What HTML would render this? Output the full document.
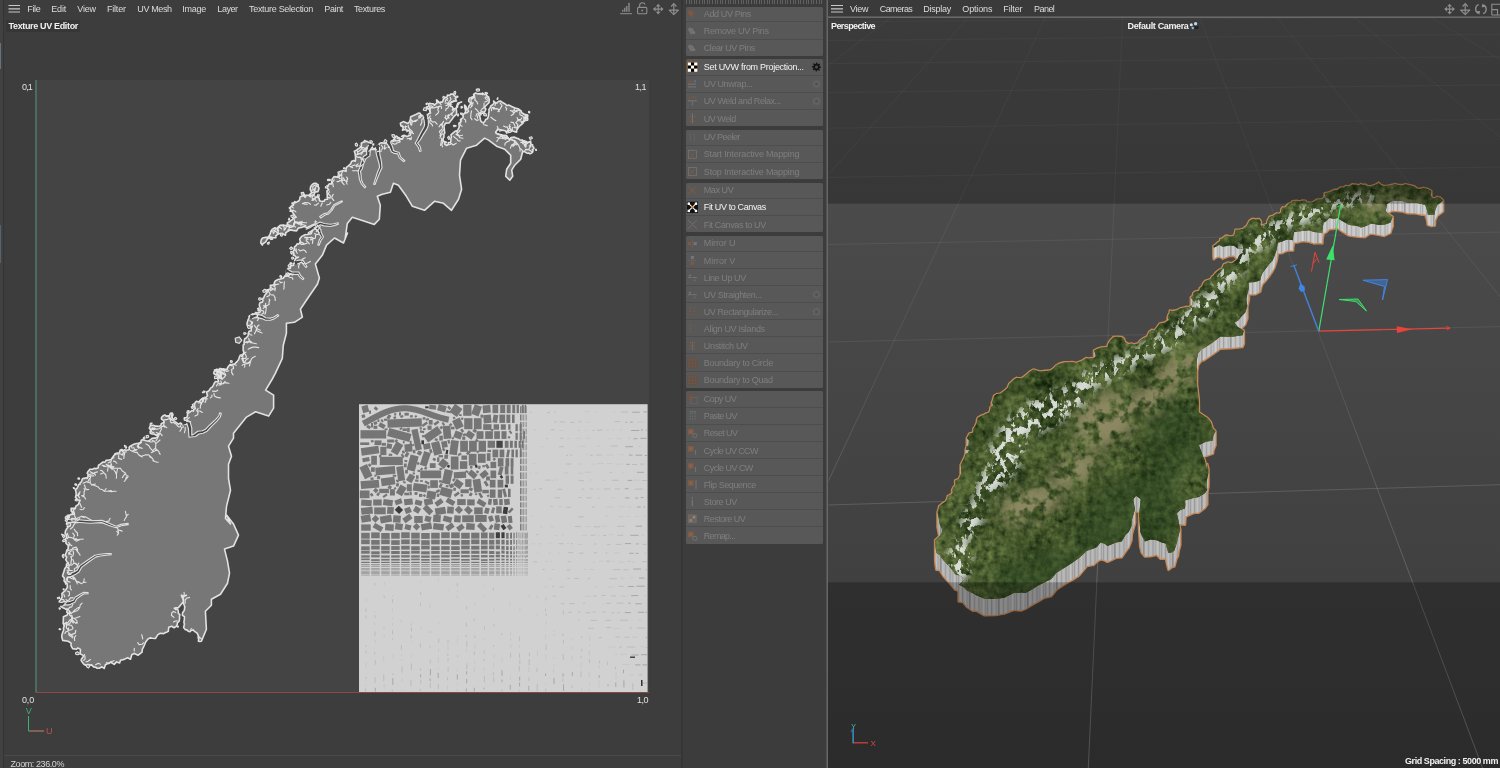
<!DOCTYPE html>
<html><head><meta charset="utf-8"><title>Texture UV Editor</title>
<style>
html,body{margin:0;padding:0;background:#3c3c3c;}
#root{position:relative;width:1500px;height:768px;overflow:hidden;background:#3d3d3d;font-family:"Liberation Sans", sans-serif;}
.t{position:absolute;white-space:nowrap;line-height:14px;height:14px;}
.abs{position:absolute;}
.grp{position:absolute;left:685.8px;width:137px;background:#585858;border-radius:1.5px;}
.sep{position:absolute;left:685.8px;width:137px;height:1px;background:#4d4d4d;}
</style></head><body>
<div id="root">
<!-- left panel -->
<div class="abs" style="left:0;top:0;width:3px;height:768px;background:#414141"></div>
<div class="abs" style="left:3px;top:0;width:1px;height:768px;background:#343434"></div>
<div class="abs" style="left:0;top:43px;width:1.4px;height:26px;background:#69717b"></div>
<div class="abs" style="left:0;top:225px;width:1.4px;height:38px;background:#59616b"></div>
<div class="abs" style="left:37px;top:80px;width:612px;height:612.5px;background:#444444"></div>
<div class="abs" style="left:6px;top:20px;width:73.5px;height:11.5px;background:#363636;border-radius:1px"></div>
<div class="abs" style="left:4px;top:755px;width:677px;height:1px;background:#4a4a4a"></div>
<div class="abs" style="left:681px;top:0;width:2px;height:768px;background:#363636"></div>
<!-- middle panel -->
<div class="abs" style="left:683px;top:0;width:143px;height:768px;background:#3c3c3c"></div>
<div class="abs" style="left:686px;top:0;width:137px;height:1.6px;background:repeating-linear-gradient(90deg,#606060 0 1px,#3c3c3c 1px 2.6px)"></div><div class="abs" style="left:686px;top:2.4px;width:137px;height:2px;background:repeating-linear-gradient(90deg,#606060 0 1px,#3c3c3c 1px 2.6px)"></div>
<div class="grp" style="top:6.90px;height:48.90px"></div><div class="sep" style="top:21.48px"></div><div class="sep" style="top:38.60px"></div><div class="grp" style="top:59.40px;height:66.56px"></div><div class="sep" style="top:74.52px"></div><div class="sep" style="top:91.64px"></div><div class="sep" style="top:108.76px"></div><div class="grp" style="top:129.56px;height:49.44px"></div><div class="sep" style="top:144.68px"></div><div class="sep" style="top:161.80px"></div><div class="grp" style="top:182.60px;height:49.44px"></div><div class="sep" style="top:197.72px"></div><div class="sep" style="top:214.84px"></div><div class="grp" style="top:235.64px;height:152.16px"></div><div class="sep" style="top:250.76px"></div><div class="sep" style="top:267.88px"></div><div class="sep" style="top:285.00px"></div><div class="sep" style="top:302.12px"></div><div class="sep" style="top:319.24px"></div><div class="sep" style="top:336.36px"></div><div class="sep" style="top:353.48px"></div><div class="sep" style="top:370.60px"></div><div class="grp" style="top:391.40px;height:152.16px"></div><div class="sep" style="top:406.52px"></div><div class="sep" style="top:423.64px"></div><div class="sep" style="top:440.76px"></div><div class="sep" style="top:457.88px"></div><div class="sep" style="top:475.00px"></div><div class="sep" style="top:492.12px"></div><div class="sep" style="top:509.24px"></div><div class="sep" style="top:526.36px"></div>
<!-- right viewport -->
<div class="abs" style="left:827.5px;top:0;width:672.5px;height:17px;background:#3a3a3a"></div>
<div class="abs" style="left:827.5px;top:17px;width:672.5px;height:751px;background:linear-gradient(#505050,#3b3b3b)"></div>
<div class="abs" style="left:827.5px;top:16.5px;width:672.5px;height:1.3px;background:#707070"></div>
<div class="abs" style="left:826.5px;top:0px;width:1.4px;height:768px;background:#686868"></div>
<svg class="abs" style="left:0;top:0" width="1500" height="768" viewBox="0 0 1500 768">
<defs>
<pattern id="wallpat" width="29" height="40" patternUnits="userSpaceOnUse"><rect width="29" height="40" fill="#c6c6c6"/><rect x="1" width="1" height="40" fill="#aeaeae"/><rect x="3.4" width="0.8" height="40" fill="#d8d8d8"/><rect x="5.2" width="0.9" height="40" fill="#a2a2a2"/><rect x="7.6" width="1.4" height="40" fill="#d4d4d4"/><rect x="9.8" width="0.7" height="40" fill="#b4b4b4"/><rect x="12" width="1.6" height="40" fill="#9d9d9d"/><rect x="14.5" width="1" height="40" fill="#d9d9d9"/><rect x="17" width="0.8" height="40" fill="#adadad"/><rect x="19.3" width="1.2" height="40" fill="#d2d2d2"/><rect x="21.6" width="0.9" height="40" fill="#a6a6a6"/><rect x="24" width="0.7" height="40" fill="#bababa"/><rect x="26.2" width="1.3" height="40" fill="#dbdbdb"/><rect x="27.9" width="0.7" height="40" fill="#a9a9a9"/></pattern>
<linearGradient id="wallshade" x1="0" y1="0" x2="0" y2="1"><stop offset="0" stop-color="#000" stop-opacity="0"/><stop offset="1" stop-color="#000" stop-opacity="0.12"/></linearGradient>
<clipPath id="topclip"><path d="M937.6 512.1L938.8 508.4L939.2 506.2L943.3 502.9L945.8 501.6L947.4 498.3L947.7 496.1L951.1 494.4L952.8 492.2L952.2 489.9L953.2 487.8L955.2 485.1L955.2 480.5L958.7 479.1L959.8 476.8L960.6 475.3L961.0 473.4L961.3 468.4L960.7 465.0L962.4 461.7L963.4 459.4L964.9 456.6L965.4 454.0L967.8 453.0L969.2 450.0L965.7 450.0L966.6 446.6L968.4 445.4L968.9 440.5L966.9 438.3L969.3 433.7L973.4 432.4L973.5 428.5L975.1 426.6L976.9 422.3L977.1 419.6L978.0 417.7L980.9 416.0L983.4 415.1L985.4 414.0L988.9 412.7L990.3 410.2L990.4 407.5L993.1 405.2L991.9 402.5L992.7 400.8L994.1 396.0L996.9 394.1L1000.1 393.8L1002.0 392.6L1005.7 389.7L1007.8 387.7L1009.3 383.7L1011.4 382.0L1014.0 379.4L1016.6 378.0L1020.7 378.4L1023.1 377.4L1026.6 374.6L1030.1 371.5L1033.5 369.6L1039.5 371.5L1045.5 370.9L1050.9 370.4L1054.2 367.7L1056.0 365.6L1059.0 363.9L1064.1 362.4L1068.9 362.3L1072.4 362.1L1076.3 363.0L1082.7 360.4L1086.0 358.2L1088.8 358.6L1091.2 358.2L1093.5 358.3L1095.8 356.3L1095.4 354.8L1094.9 352.8L1094.1 350.5L1097.3 348.9L1101.4 347.6L1105.2 347.2L1107.5 346.9L1108.0 344.3L1109.9 341.0L1113.7 337.0L1117.8 336.8L1121.8 337.2L1123.9 338.7L1124.5 340.5L1124.9 342.0L1128.7 344.2L1131.4 343.6L1134.1 344.6L1138.0 343.4L1140.0 340.8L1142.7 338.7L1147.3 336.3L1149.2 331.8L1151.8 329.9L1154.4 330.5L1156.9 327.5L1159.8 323.6L1164.6 322.7L1168.8 320.0L1167.7 317.5L1168.5 314.8L1169.7 313.2L1169.9 310.6L1172.2 311.2L1175.0 310.7L1178.7 309.5L1180.5 308.3L1183.5 307.8L1185.8 307.0L1189.0 307.2L1192.2 304.8L1192.9 300.9L1190.9 297.3L1192.7 295.8L1193.4 293.1L1195.3 291.5L1197.6 291.2L1199.2 290.7L1200.0 288.0L1202.3 286.2L1203.0 284.0L1203.9 282.5L1205.1 281.0L1206.6 280.5L1210.9 279.0L1212.0 276.6L1213.6 275.6L1216.1 272.4L1218.0 270.8L1220.0 269.4L1222.1 268.6L1223.9 264.4L1227.4 262.6L1231.8 263.3L1236.0 260.6L1237.6 258.8L1239.1 255.6L1240.6 254.0L1243.1 252.8L1242.5 251.3L1243.8 249.0L1240.4 248.3L1238.5 249.1L1233.8 245.8L1229.7 245.5L1222.9 246.8L1219.2 245.0L1216.4 246.5L1213.8 247.8L1213.5 246.1L1215.2 245.0L1217.3 243.0L1219.8 241.4L1220.3 239.2L1222.7 238.2L1226.0 235.7L1230.7 236.6L1234.4 235.6L1234.7 234.0L1235.3 231.6L1235.6 229.8L1239.1 229.8L1243.0 229.1L1247.0 225.6L1248.5 222.7L1249.8 220.5L1252.5 218.9L1255.4 219.4L1259.0 219.2L1260.9 221.4L1260.3 224.7L1261.3 226.3L1263.1 225.3L1265.3 224.5L1267.1 223.8L1267.6 220.6L1268.4 219.1L1269.5 216.9L1273.8 215.4L1276.9 213.5L1279.2 213.8L1281.3 212.2L1281.3 209.5L1282.6 207.5L1285.4 207.4L1288.3 204.0L1291.3 203.0L1292.2 201.4L1296.4 200.9L1300.0 201.6L1302.0 200.7L1305.4 200.8L1306.7 202.4L1309.4 202.8L1312.5 202.6L1314.1 201.5L1317.1 199.7L1322.3 199.3L1324.6 197.3L1325.1 195.7L1324.6 193.4L1327.4 192.8L1329.6 192.2L1334.4 189.9L1337.5 189.9L1340.5 187.6L1344.2 187.4L1345.9 186.0L1349.2 186.4L1352.3 184.4L1356.8 184.8L1358.5 185.5L1361.0 184.1L1362.6 185.0L1365.0 184.7L1367.8 186.2L1370.3 186.4L1372.2 186.1L1376.7 184.2L1378.6 182.9L1380.9 185.0L1383.6 186.1L1388.0 185.8L1391.4 185.2L1395.0 184.1L1398.5 185.2L1401.3 185.2L1403.2 185.2L1405.2 184.3L1408.6 185.0L1414.3 186.4L1417.2 188.8L1420.2 188.9L1423.5 188.0L1428.5 189.3L1431.3 191.1L1431.1 192.6L1430.7 194.2L1430.7 195.9L1432.5 198.1L1434.4 198.6L1437.1 197.0L1440.0 197.5L1443.0 200.5L1437.2 205.2L1435.1 210.5L1434.8 214.5L1431.3 214.9L1427.8 214.5L1427.3 211.1L1425.4 205.2L1421.9 204.0L1415.1 202.5L1407.9 202.8L1402.6 201.0L1396.1 200.5L1391.8 201.3L1386.8 204.0L1386.3 208.0L1385.6 211.0L1388.9 214.3L1392.6 216.9L1391.6 219.2L1390.3 222.7L1384.2 224.7L1379.7 225.1L1374.2 224.0L1370.3 223.9L1364.8 226.4L1361.0 227.4L1356.7 225.7L1349.2 225.1L1342.2 221.1L1337.5 218.1L1334.4 218.7L1329.3 218.1L1326.4 220.9L1323.5 222.7L1322.5 229.4L1322.3 233.3L1319.0 232.5L1314.1 232.1L1308.9 230.3L1302.4 230.9L1297.3 231.6L1294.2 232.1L1293.2 236.5L1293.0 240.3L1288.1 239.4L1284.8 240.3L1282.4 241.4L1277.8 242.7L1276.5 250.3L1274.2 256.7L1272.4 260.9L1269.5 263.8L1265.1 269.5L1262.5 273.1L1261.3 275.7L1260.2 280.2L1255.2 282.1L1248.5 282.5L1248.9 288.4L1247.3 294.2L1246.3 299.1L1247.3 306.0L1245.2 312.6L1241.4 316.5L1238.0 320.8L1234.4 322.4L1237.8 327.0L1243.8 330.6L1242.6 335.3L1230.7 336.9L1220.3 336.4L1213.0 342.3L1203.9 348.2L1201.3 349.2L1198.1 353.2L1196.6 360.9L1197.0 368.6L1196.6 382.0L1198.7 399.4L1198.9 412.5L1207.1 417.8L1210.7 421.9L1212.8 428.4L1215.4 431.3L1213.2 436.2L1213.0 440.6L1205.8 441.8L1198.9 445.3L1202.3 454.3L1204.8 460.6L1206.0 465.9L1208.3 471.1L1207.1 467.9L1207.2 464.1L1208.4 469.4L1208.3 473.4L1206.6 481.5L1207.2 489.8L1204.7 493.6L1198.9 496.9L1193.4 498.0L1184.9 500.4L1185.4 504.2L1184.9 508.6L1180.4 510.0L1176.7 513.3L1178.5 520.2L1180.2 529.7L1178.5 535.4L1177.9 539.1L1176.4 544.2L1174.3 550.8L1171.6 552.4L1168.5 553.1L1167.0 548.9L1166.1 543.8L1160.4 542.1L1156.8 540.2L1150.2 539.5L1145.0 541.4L1141.8 535.6L1140.3 532.0L1139.1 514.6L1140.8 499.2L1138.6 497.6L1136.1 495.7L1134.0 498.2L1133.3 500.4L1135.0 509.3L1131.7 520.3L1131.4 526.3L1128.6 532.0L1125.5 534.9L1121.6 541.4L1115.9 542.5L1107.5 546.1L1104.7 543.8L1100.5 542.6L1096.9 546.9L1093.5 548.5L1086.8 550.8L1079.4 557.8L1072.0 563.1L1065.3 567.2L1056.2 573.0L1051.3 578.9L1044.3 582.5L1037.2 586.0L1033.0 589.0L1025.5 593.0L1020.9 592.6L1013.8 593.0L1004.3 597.7L995.0 598.9L984.6 598.8L976.3 595.3L972.9 593.2L966.9 590.6L963.4 587.0L958.7 584.8L962.1 581.9L964.5 578.9L961.3 576.3L955.2 574.2L951.2 568.6L943.4 560.2L939.7 555.1L936.4 553.1L935.6 547.4L935.2 543.8L935.2 540.2L939.7 536.1L942.3 532.0L942.1 529.0L939.9 525.0Z"/></clipPath>
<linearGradient id="gridgrad" gradientUnits="userSpaceOnUse" x1="0" y1="17" x2="0" y2="768"><stop offset="0" stop-color="#fff" stop-opacity="0.05"/><stop offset="0.45" stop-color="#fff" stop-opacity="0.08"/><stop offset="1" stop-color="#fff" stop-opacity="0.30"/></linearGradient>
<clipPath id="vpclip"><rect x="828.5" y="17.8" width="672" height="751"/></clipPath>
<filter id="terrain" x="0" y="0" width="100%" height="100%" color-interpolation-filters="sRGB">
<feTurbulence type="fractalNoise" baseFrequency="0.03" numOctaves="3" seed="8" result="n1"/>
<feTurbulence type="fractalNoise" baseFrequency="0.17" numOctaves="3" seed="3" result="n2"/>
<feComposite in="n1" in2="n2" operator="arithmetic" k1="0" k2="0.45" k3="0.55" k4="0" result="n"/>
<feColorMatrix in="n" type="matrix" values="0.66 0 0 0 -0.065  0.66 0 0 0 0.005  0.42 0 0 0 -0.045  0 0 0 0 1"/>
</filter>
<filter id="fsnow" x="-20%" y="-20%" width="140%" height="140%" color-interpolation-filters="sRGB">
<feGaussianBlur in="SourceGraphic" stdDeviation="4" result="b"/>
<feTurbulence type="fractalNoise" baseFrequency="0.16 0.11" numOctaves="4" seed="11" result="t"/>
<feColorMatrix in="t" type="matrix" values="0 0 0 0 1  0 0 0 0 1  0 0 0 0 1  11 0 0 0 -5.7" result="m"/>
<feComposite in="b" in2="m" operator="in"/>
</filter>
<filter id="ftan" x="-20%" y="-20%" width="140%" height="140%" color-interpolation-filters="sRGB">
<feGaussianBlur in="SourceGraphic" stdDeviation="7" result="b"/>
<feTurbulence type="fractalNoise" baseFrequency="0.09" numOctaves="3" seed="23" result="t"/>
<feColorMatrix in="t" type="matrix" values="0 0 0 0 1  0 0 0 0 1  0 0 0 0 1  5 0 0 0 -1.9" result="m"/>
<feComposite in="b" in2="m" operator="in"/>
</filter>
<filter id="fdark" x="-20%" y="-20%" width="140%" height="140%" color-interpolation-filters="sRGB">
<feGaussianBlur in="SourceGraphic" stdDeviation="10" result="b"/>
<feColorMatrix in="b" type="matrix" values="1 0 0 0 0  0 1 0 0 0  0 0 1 0 0  0 0 0 0.45 0"/>
</filter>
</defs>
<!-- UV axes -->
<path d="M36 80V692.5" stroke="#4b6d5d" stroke-width="2"/><path d="M36 692.5H649" stroke="#8a4a48" stroke-width="1"/>
<path d="M28.5 716V731H44" stroke="#3fae7a" stroke-width="1" fill="none"/><path d="M29 731H44" stroke="#c0504d" stroke-width="1"/>
<rect x="359.0" y="404.2" width="288.6" height="287.8" fill="#d1d1d1"/>
<rect x="362.2" y="405.5" width="6.3" height="7.0" fill="#757575" transform="rotate(-15 365.3 409.0)"/>
<rect x="429.2" y="405.1" width="7.0" height="4.3" fill="#757575" transform="rotate(5 432.7 407.3)"/>
<rect x="437.8" y="405.2" width="8.3" height="6.3" fill="#757575" transform="rotate(15 442.0 408.3)"/>
<rect x="451.5" y="405.5" width="9.0" height="9.7" fill="#757575" transform="rotate(35 456.0 410.3)"/>
<rect x="463.2" y="404.8" width="8.3" height="11.0" fill="#757575"/>
<rect x="472.8" y="405.2" width="7.7" height="10.3" fill="#757575" transform="rotate(20 476.7 410.3)"/>
<rect x="482.8" y="405.2" width="7.7" height="7.7" fill="#757575" transform="rotate(-5 486.7 409.0)"/>
<rect x="492.5" y="404.8" width="5.7" height="8.3" fill="#757575"/>
<rect x="500.2" y="404.8" width="5.0" height="8.3" fill="#757575"/>
<rect x="506.7" y="404.8" width="3.9" height="8.3" fill="#757575"/>
<rect x="512.3" y="404.8" width="2.9" height="8.3" fill="#757575"/>
<rect x="516.6" y="404.8" width="2.3" height="8.3" fill="#757575"/>
<rect x="521.8" y="404.8" width="1.8" height="8.3" fill="#757575"/>
<rect x="524.6" y="404.8" width="1.5" height="8.3" fill="#757575"/>
<rect x="387.5" y="418.8" width="34.3" height="8.3" fill="#757575" transform="rotate(-2 404.7 423.0)"/>
<rect x="378.8" y="423.5" width="6.3" height="4.3" fill="#757575" transform="rotate(30 382.0 425.7)"/>
<rect x="453.8" y="418.8" width="8.3" height="9.7" fill="#757575" transform="rotate(-25 458.0 423.7)"/>
<rect x="464.2" y="418.2" width="8.3" height="11.0" fill="#757575"/>
<rect x="473.9" y="418.2" width="7.7" height="11.0" fill="#757575"/>
<rect x="483.5" y="414.8" width="7.7" height="8.3" fill="#757575" transform="rotate(-5 487.3 419.0)"/>
<rect x="493.0" y="414.9" width="4.7" height="7.7" fill="#757575" transform="rotate(10 495.3 418.7)"/>
<rect x="499.4" y="414.6" width="5.7" height="8.3" fill="#757575"/>
<rect x="506.4" y="414.6" width="3.9" height="8.3" fill="#757575"/>
<rect x="512.0" y="414.6" width="2.6" height="8.3" fill="#757575"/>
<rect x="483.2" y="424.2" width="8.3" height="5.7" fill="#757575"/>
<rect x="493.6" y="424.3" width="5.4" height="5.4" fill="#757575"/>
<rect x="500.8" y="424.3" width="5.0" height="5.4" fill="#757575"/>
<rect x="508.2" y="424.3" width="2.3" height="5.4" fill="#757575"/>
<rect x="360.5" y="430.2" width="25.7" height="8.3" fill="#757575"/>
<rect x="387.8" y="430.8" width="23.0" height="8.3" fill="#757575" transform="rotate(15 399.3 435.0)"/>
<rect x="413.5" y="429.2" width="6.3" height="21.0" fill="#757575" transform="rotate(-12 416.7 439.7)"/>
<rect x="424.2" y="430.2" width="17.0" height="8.3" fill="#757575" transform="rotate(-35 432.7 434.3)"/>
<rect x="443.2" y="425.8" width="7.7" height="13.0" fill="#757575" transform="rotate(-5 447.1 432.3)"/>
<rect x="454.2" y="431.5" width="7.7" height="7.0" fill="#757575" transform="rotate(20 458.0 435.0)"/>
<rect x="466.2" y="431.8" width="7.7" height="6.3" fill="#757575" transform="rotate(35 470.0 435.0)"/>
<rect x="476.5" y="431.2" width="7.0" height="7.7" fill="#757575"/>
<rect x="485.2" y="431.2" width="7.7" height="7.7" fill="#757575"/>
<rect x="494.2" y="431.2" width="5.7" height="7.7" fill="#757575"/>
<rect x="501.5" y="431.2" width="5.0" height="7.7" fill="#757575"/>
<rect x="515.5" y="424.2" width="2.3" height="7.0" fill="#757575"/>
<rect x="519.6" y="424.2" width="2.1" height="7.0" fill="#757575"/>
<rect x="515.5" y="432.8" width="2.3" height="7.0" fill="#757575"/>
<rect x="519.6" y="432.8" width="2.1" height="7.0" fill="#757575"/>
<rect x="523.2" y="431.2" width="1.7" height="7.7" fill="#757575"/>
<rect x="374.5" y="440.4" width="7.0" height="4.7" fill="#757575"/>
<rect x="387.2" y="439.5" width="7.0" height="3.0" fill="#757575"/>
<rect x="360.2" y="442.4" width="9.0" height="2.6" fill="#757575"/>
<rect x="393.2" y="442.5" width="7.7" height="11.7" fill="#757575" transform="rotate(30 397.1 448.3)"/>
<rect x="404.6" y="444.1" width="7.7" height="7.7" fill="#757575" transform="rotate(-5 408.4 447.9)"/>
<rect x="423.4" y="443.5" width="7.0" height="5.7" fill="#757575" transform="rotate(-10 426.9 446.3)"/>
<rect x="432.5" y="441.8" width="8.3" height="13.0" fill="#757575" transform="rotate(-15 436.7 448.3)"/>
<rect x="441.6" y="441.2" width="5.7" height="6.3" fill="#757575" transform="rotate(-10 444.4 444.3)"/>
<rect x="450.2" y="440.5" width="7.7" height="14.3" fill="#757575" transform="rotate(8 454.0 447.7)"/>
<rect x="460.2" y="440.8" width="7.7" height="11.0" fill="#757575"/>
<rect x="469.1" y="440.8" width="7.7" height="11.0" fill="#757575"/>
<rect x="478.6" y="440.8" width="7.4" height="11.0" fill="#757575"/>
<rect x="487.6" y="440.8" width="7.4" height="7.0" fill="#757575"/>
<rect x="504.8" y="440.8" width="3.7" height="7.0" fill="#757575"/>
<rect x="509.9" y="440.8" width="2.9" height="7.0" fill="#757575"/>
<rect x="514.4" y="440.8" width="2.6" height="7.0" fill="#757575"/>
<rect x="518.6" y="440.8" width="2.1" height="7.0" fill="#757575"/>
<rect x="521.8" y="440.8" width="1.8" height="7.0" fill="#757575"/>
<rect x="361.2" y="446.9" width="17.7" height="7.7" fill="#757575" transform="rotate(-8 370.0 450.7)"/>
<rect x="380.3" y="446.8" width="6.1" height="8.3" fill="#757575"/>
<rect x="362.5" y="457.7" width="7.0" height="3.9" fill="#757575" transform="rotate(-10 366.0 459.7)"/>
<rect x="371.2" y="455.8" width="5.7" height="9.0" fill="#757575"/>
<rect x="379.8" y="456.8" width="23.0" height="8.3" fill="#757575"/>
<rect x="408.5" y="455.2" width="8.3" height="15.7" fill="#757575" transform="rotate(15 412.7 463.0)"/>
<rect x="421.8" y="451.8" width="7.0" height="14.3" fill="#757575" transform="rotate(18 425.3 459.0)"/>
<rect x="439.5" y="459.8" width="7.7" height="7.7" fill="#757575" transform="rotate(40 443.3 463.7)"/>
<rect x="450.8" y="456.5" width="7.7" height="13.0" fill="#757575"/>
<rect x="461.4" y="455.5" width="5.7" height="4.3" fill="#757575"/>
<rect x="459.9" y="461.2" width="7.4" height="7.7" fill="#757575"/>
<rect x="468.8" y="453.8" width="7.7" height="11.7" fill="#757575"/>
<rect x="477.9" y="453.8" width="7.7" height="9.0" fill="#757575"/>
<rect x="486.8" y="453.2" width="3.7" height="7.7" fill="#757575"/>
<rect x="492.5" y="449.6" width="5.7" height="7.7" fill="#757575"/>
<rect x="499.6" y="449.6" width="4.7" height="7.7" fill="#757575"/>
<rect x="506.7" y="449.6" width="2.6" height="7.7" fill="#757575" transform="rotate(10 508.0 453.4)"/>
<rect x="511.4" y="449.6" width="2.6" height="7.7" fill="#757575"/>
<rect x="515.5" y="449.6" width="2.3" height="7.7" fill="#757575"/>
<rect x="519.8" y="449.6" width="1.8" height="7.7" fill="#757575"/>
<rect x="361.8" y="465.2" width="8.3" height="13.0" fill="#757575" transform="rotate(-25 366.0 471.7)"/>
<rect x="375.5" y="466.9" width="19.7" height="7.7" fill="#757575" transform="rotate(-5 385.3 470.7)"/>
<rect x="397.2" y="466.5" width="7.0" height="14.3" fill="#757575" transform="rotate(-8 400.7 473.7)"/>
<rect x="420.2" y="470.5" width="21.0" height="7.7" fill="#757575"/>
<rect x="443.2" y="469.8" width="8.3" height="14.3" fill="#757575" transform="rotate(12 447.3 477.0)"/>
<rect x="453.8" y="471.8" width="12.3" height="6.3" fill="#757575" transform="rotate(-3 460.0 475.0)"/>
<rect x="468.5" y="471.5" width="8.3" height="5.7" fill="#757575" transform="rotate(40 472.7 474.3)"/>
<rect x="480.2" y="471.5" width="7.7" height="5.7" fill="#757575" transform="rotate(-40 484.0 474.3)"/>
<rect x="490.5" y="461.8" width="5.7" height="6.3" fill="#757575"/>
<rect x="497.8" y="458.2" width="5.7" height="8.3" fill="#757575"/>
<rect x="505.5" y="458.2" width="3.7" height="8.3" fill="#757575"/>
<rect x="510.6" y="458.2" width="2.9" height="8.3" fill="#757575"/>
<rect x="490.5" y="470.5" width="5.7" height="7.7" fill="#757575"/>
<rect x="498.7" y="466.8" width="3.9" height="8.3" fill="#757575" transform="rotate(15 500.7 471.0)"/>
<rect x="504.8" y="466.2" width="3.7" height="8.3" fill="#757575"/>
<rect x="510.7" y="466.2" width="2.6" height="8.3" fill="#757575"/>
<rect x="360.8" y="480.5" width="18.3" height="7.7" fill="#757575" transform="rotate(-5 370.0 484.3)"/>
<rect x="381.2" y="477.6" width="13.7" height="7.7" fill="#757575" transform="rotate(-8 388.0 481.4)"/>
<rect x="407.5" y="474.5" width="6.3" height="7.7" fill="#757575" transform="rotate(30 410.7 478.3)"/>
<rect x="430.2" y="480.2" width="7.7" height="7.7" fill="#757575"/>
<rect x="413.2" y="483.8" width="13.7" height="7.7" fill="#757575" transform="rotate(8 420.0 487.7)"/>
<rect x="397.8" y="485.5" width="7.0" height="9.7" fill="#757575" transform="rotate(30 401.3 490.3)"/>
<rect x="406.8" y="484.2" width="5.0" height="7.0" fill="#757575"/>
<rect x="454.1" y="480.6" width="8.3" height="7.0" fill="#757575" transform="rotate(35 458.3 484.1)"/>
<rect x="465.2" y="479.2" width="6.3" height="7.7" fill="#757575"/>
<rect x="473.5" y="479.2" width="7.7" height="13.0" fill="#757575" transform="rotate(-8 477.3 485.7)"/>
<rect x="489.8" y="479.8" width="5.7" height="7.7" fill="#757575"/>
<rect x="497.6" y="479.8" width="5.7" height="7.7" fill="#757575"/>
<rect x="505.6" y="475.5" width="3.4" height="8.3" fill="#757575"/>
<rect x="510.6" y="475.5" width="2.9" height="8.3" fill="#757575"/>
<rect x="359.8" y="490.5" width="9.7" height="7.7" fill="#757575"/>
<rect x="379.2" y="488.8" width="9.7" height="4.3" fill="#757575"/>
<rect x="389.9" y="489.2" width="5.0" height="6.3" fill="#757575"/>
<rect x="426.8" y="491.2" width="9.0" height="7.7" fill="#757575" transform="rotate(10 431.3 495.0)"/>
<rect x="440.2" y="488.2" width="11.7" height="8.3" fill="#757575" transform="rotate(15 446.0 492.3)"/>
<rect x="460.5" y="489.3" width="8.3" height="3.9" fill="#757575"/>
<rect x="489.8" y="489.5" width="5.7" height="8.3" fill="#757575"/>
<rect x="497.8" y="489.5" width="4.3" height="8.3" fill="#757575"/>
<rect x="503.2" y="488.8" width="2.9" height="8.3" fill="#757575" transform="rotate(-15 504.7 493.0)"/>
<rect x="508.0" y="488.8" width="2.6" height="8.3" fill="#757575"/>
<rect x="496.4" y="440.8" width="6.3" height="7.0" fill="#444444"/>
<rect x="369.7" y="424.3" width="4.5" height="2.0" fill="#757575" transform="rotate(90 372.0 425.3)"/>
<rect x="429.8" y="463.2" width="5.8" height="4.8" fill="#757575"/>
<rect x="419.9" y="430.6" width="4.2" height="2.3" fill="#757575" transform="rotate(10 422.1 431.8)"/>
<rect x="432.8" y="458.1" width="3.0" height="2.5" fill="#757575" transform="rotate(30 434.3 459.4)"/>
<rect x="416.9" y="462.2" width="2.3" height="2.5" fill="#757575" transform="rotate(-35 418.1 463.4)"/>
<rect x="469.3" y="492.7" width="2.9" height="3.4" fill="#757575" transform="rotate(30 470.7 494.4)"/>
<rect x="373.8" y="488.5" width="4.0" height="3.8" fill="#757575" transform="rotate(45 375.7 490.4)"/>
<rect x="417.5" y="451.0" width="4.1" height="4.1" fill="#757575" transform="rotate(30 419.5 453.0)"/>
<rect x="433.8" y="421.7" width="5.4" height="2.7" fill="#757575" transform="rotate(-35 436.5 423.1)"/>
<rect x="467.1" y="450.4" width="2.7" height="4.4" fill="#757575" transform="rotate(45 468.4 452.6)"/>
<rect x="414.7" y="415.3" width="2.1" height="2.2" fill="#757575" transform="rotate(60 415.8 416.4)"/>
<rect x="419.0" y="493.9" width="3.3" height="3.0" fill="#757575"/>
<rect x="447.7" y="440.0" width="2.3" height="3.5" fill="#757575" transform="rotate(-15 448.8 441.7)"/>
<rect x="509.5" y="430.4" width="2.0" height="3.5" fill="#757575" transform="rotate(-35 510.5 432.1)"/>
<rect x="409.5" y="491.7" width="2.2" height="3.6" fill="#757575"/>
<rect x="428.8" y="420.0" width="3.8" height="4.6" fill="#757575"/>
<rect x="370.9" y="440.0" width="2.7" height="2.3" fill="#757575" transform="rotate(-15 372.3 441.2)"/>
<rect x="485.8" y="464.1" width="2.9" height="4.6" fill="#757575" transform="rotate(-35 487.2 466.4)"/>
<rect x="453.9" y="493.0" width="5.7" height="2.6" fill="#757575" transform="rotate(-35 456.7 494.3)"/>
<rect x="415.1" y="479.5" width="3.4" height="2.2" fill="#757575" transform="rotate(10 416.8 480.7)"/>
<rect x="427.5" y="425.6" width="4.1" height="4.2" fill="#757575"/>
<rect x="439.3" y="435.7" width="3.5" height="4.8" fill="#757575"/>
<rect x="404.4" y="460.1" width="2.9" height="2.0" fill="#757575" transform="rotate(10 405.9 461.1)"/>
<rect x="422.7" y="417.2" width="2.7" height="2.5" fill="#757575"/>
<rect x="449.6" y="484.0" width="3.7" height="4.0" fill="#757575" transform="rotate(60 451.5 486.0)"/>
<rect x="483.4" y="482.2" width="5.6" height="2.9" fill="#757575" transform="rotate(60 486.2 483.6)"/>
<rect x="504.8" y="484.6" width="3.1" height="2.8" fill="#3a3a3a"/>
<rect x="405.3" y="452.3" width="3.2" height="4.7" fill="#757575" transform="rotate(30 406.9 454.6)"/>
<rect x="373.7" y="421.6" width="3.4" height="3.0" fill="#757575" transform="rotate(-15 375.4 423.1)"/>
<rect x="462.2" y="436.6" width="3.1" height="3.2" fill="#757575"/>
<rect x="370.4" y="493.2" width="2.6" height="3.0" fill="#757575" transform="rotate(-35 371.7 494.7)"/>
<rect x="388.7" y="453.7" width="3.5" height="2.2" fill="#757575"/>
<rect x="384.0" y="418.7" width="3.5" height="2.1" fill="#757575"/>
<rect x="482.3" y="489.8" width="6.5" height="3.5" fill="#757575"/>
<rect x="405.2" y="412.0" width="2.8" height="4.3" fill="#757575" transform="rotate(90 406.6 414.2)"/>
<rect x="392.7" y="474.7" width="3.5" height="2.1" fill="#757575" transform="rotate(10 394.5 475.8)"/>
<rect x="470.0" y="466.0" width="2.4" height="2.6" fill="#757575" transform="rotate(10 471.2 467.3)"/>
<rect x="478.3" y="465.7" width="2.2" height="3.3" fill="#757575" transform="rotate(10 479.4 467.3)"/>
<rect x="386.7" y="443.7" width="5.2" height="5.0" fill="#757575" transform="rotate(10 389.3 446.2)"/>
<rect x="387.3" y="414.7" width="3.2" height="4.3" fill="#757575" transform="rotate(30 388.9 416.8)"/>
<rect x="447.2" y="465.1" width="2.5" height="2.4" fill="#3a3a3a" transform="rotate(30 448.5 466.3)"/>
<rect x="377.1" y="476.1" width="3.0" height="2.9" fill="#757575" transform="rotate(10 378.6 477.6)"/>
<rect x="457.7" y="453.3" width="3.7" height="2.2" fill="#757575" transform="rotate(-35 459.6 454.3)"/>
<rect x="424.6" y="481.5" width="4.9" height="2.1" fill="#757575" transform="rotate(30 427.1 482.6)"/>
<rect x="417.9" y="469.6" width="2.0" height="2.7" fill="#757575" transform="rotate(90 418.9 470.9)"/>
<rect x="394.1" y="413.2" width="2.1" height="2.3" fill="#757575"/>
<rect x="388.2" y="485.6" width="3.3" height="3.4" fill="#757575" transform="rotate(30 389.8 487.2)"/>
<rect x="451.0" y="426.7" width="3.5" height="2.7" fill="#757575"/>
<rect x="415.6" y="475.7" width="3.5" height="2.6" fill="#757575" transform="rotate(90 417.3 477.0)"/>
<rect x="439.7" y="454.0" width="2.2" height="4.4" fill="#757575" transform="rotate(90 440.8 456.2)"/>
<rect x="368.3" y="411.2" width="3.3" height="1.9" fill="#757575" transform="rotate(90 370.0 412.2)"/>
<rect x="399.5" y="427.7" width="2.9" height="1.8" fill="#757575" transform="rotate(-35 401.0 428.6)"/>
<rect x="444.3" y="454.7" width="3.7" height="4.1" fill="#757575" transform="rotate(10 446.1 456.7)"/>
<rect x="436.6" y="489.2" width="2.6" height="4.0" fill="#757575" transform="rotate(60 437.9 491.2)"/>
<rect x="480.5" y="414.7" width="2.6" height="3.0" fill="#757575"/>
<rect x="465.5" y="470.6" width="2.9" height="2.1" fill="#757575" transform="rotate(30 466.9 471.6)"/>
<rect x="414.5" y="492.1" width="3.0" height="2.8" fill="#757575"/>
<rect x="475.2" y="464.8" width="2.3" height="3.0" fill="#3a3a3a" transform="rotate(-15 476.3 466.4)"/>
<rect x="407.1" y="427.7" width="2.6" height="4.5" fill="#757575"/>
<rect x="420.1" y="480.1" width="2.7" height="1.8" fill="#757575"/>
<rect x="461.1" y="417.6" width="2.2" height="2.2" fill="#757575"/>
<rect x="402.1" y="450.5" width="2.5" height="2.9" fill="#757575" transform="rotate(-15 403.4 451.9)"/>
<rect x="421.8" y="423.0" width="6.0" height="2.4" fill="#757575" transform="rotate(-35 424.8 424.2)"/>
<rect x="493.1" y="457.9" width="2.4" height="2.7" fill="#757575" transform="rotate(45 494.3 459.2)"/>
<rect x="440.0" y="426.1" width="2.4" height="3.0" fill="#757575" transform="rotate(45 441.2 427.7)"/>
<rect x="361.7" y="414.6" width="3.4" height="3.2" fill="#757575" transform="rotate(-15 363.4 416.2)"/>
<rect x="412.9" y="449.8" width="2.5" height="3.5" fill="#757575"/>
<rect x="412.6" y="472.4" width="2.3" height="2.1" fill="#757575"/>
<rect x="366.7" y="425.5" width="3.9" height="3.0" fill="#757575" transform="rotate(30 368.6 427.0)"/>
<rect x="420.5" y="467.9" width="2.1" height="2.6" fill="#757575" transform="rotate(30 421.6 469.2)"/>
<rect x="410.1" y="415.1" width="2.6" height="2.5" fill="#757575" transform="rotate(10 411.4 416.3)"/>
<rect x="500.2" y="475.5" width="2.5" height="2.9" fill="#3a3a3a" transform="rotate(-35 501.4 477.0)"/>
<rect x="487.0" y="494.8" width="2.1" height="2.0" fill="#757575" transform="rotate(-35 488.1 495.7)"/>
<rect x="376.8" y="492.7" width="2.5" height="3.2" fill="#757575" transform="rotate(30 378.0 494.4)"/>
<rect x="402.9" y="481.2" width="2.8" height="2.0" fill="#757575" transform="rotate(30 404.3 482.2)"/>
<rect x="446.4" y="410.9" width="4.4" height="2.1" fill="#757575" transform="rotate(10 448.6 412.0)"/>
<rect x="423.1" y="494.4" width="2.5" height="2.3" fill="#757575" transform="rotate(45 424.3 495.6)"/>
<rect x="460.9" y="428.9" width="2.5" height="3.5" fill="#757575" transform="rotate(-35 462.1 430.6)"/>
<rect x="371.0" y="467.3" width="3.8" height="4.5" fill="#757575"/>
<rect x="475.4" y="439.4" width="3.1" height="2.1" fill="#757575" transform="rotate(30 476.9 440.4)"/>
<rect x="476.6" y="450.8" width="2.4" height="2.0" fill="#757575" transform="rotate(-35 477.8 451.9)"/>
<rect x="396.1" y="483.2" width="2.8" height="3.3" fill="#757575" transform="rotate(10 397.5 484.8)"/>
<rect x="439.4" y="467.9" width="3.1" height="2.0" fill="#757575" transform="rotate(-15 440.9 468.8)"/>
<rect x="442.2" y="448.3" width="3.1" height="2.3" fill="#757575" transform="rotate(45 443.7 449.4)"/>
<rect x="373.5" y="425.7" width="3.8" height="3.2" fill="#757575"/>
<rect x="423.1" y="428.2" width="2.5" height="1.9" fill="#757575"/>
<rect x="404.6" y="470.2" width="3.6" height="2.8" fill="#757575" transform="rotate(90 406.4 471.7)"/>
<rect x="379.0" y="455.1" width="2.5" height="2.3" fill="#757575" transform="rotate(90 380.3 456.2)"/>
<rect x="380.7" y="419.7" width="3.0" height="2.1" fill="#757575" transform="rotate(60 382.2 420.7)"/>
<rect x="384.5" y="428.4" width="3.1" height="1.8" fill="#757575"/>
<rect x="451.8" y="437.1" width="2.1" height="2.2" fill="#757575" transform="rotate(-15 452.9 438.2)"/>
<rect x="439.1" y="480.3" width="3.2" height="2.2" fill="#757575" transform="rotate(10 440.7 481.4)"/>
<rect x="445.7" y="485.1" width="2.8" height="2.2" fill="#757575"/>
<rect x="370.5" y="477.5" width="3.1" height="2.4" fill="#757575"/>
<rect x="487.4" y="449.8" width="3.6" height="2.3" fill="#757575"/>
<rect x="424.5" y="467.0" width="2.4" height="2.6" fill="#757575" transform="rotate(30 425.7 468.3)"/>
<rect x="473.0" y="429.1" width="3.4" height="3.3" fill="#757575" transform="rotate(30 474.7 430.8)"/>
<rect x="394.0" y="487.5" width="2.1" height="2.0" fill="#757575" transform="rotate(60 395.1 488.5)"/>
<rect x="409.0" y="441.6" width="3.5" height="1.9" fill="#757575" transform="rotate(90 410.7 442.5)"/>
<rect x="490.8" y="429.0" width="2.6" height="1.9" fill="#757575"/>
<rect x="400.6" y="454.8" width="4.1" height="2.2" fill="#757575" transform="rotate(60 402.7 455.9)"/>
<rect x="460.6" y="494.3" width="2.4" height="2.2" fill="#757575" transform="rotate(-15 461.7 495.4)"/>
<rect x="374.1" y="407.0" width="3.6" height="2.9" fill="#757575" transform="rotate(45 375.9 408.5)"/>
<rect x="400.3" y="415.4" width="3.1" height="2.3" fill="#757575" transform="rotate(-35 401.8 416.6)"/>
<rect x="402.5" y="441.3" width="2.4" height="1.8" fill="#757575" transform="rotate(90 403.7 442.2)"/>
<rect x="425.8" y="418.3" width="3.1" height="2.2" fill="#757575" transform="rotate(-15 427.3 419.4)"/>
<rect x="374.4" y="474.7" width="2.0" height="2.0" fill="#757575"/>
<rect x="452.7" y="478.3" width="2.3" height="3.0" fill="#757575" transform="rotate(45 453.9 479.8)"/>
<rect x="382.7" y="494.7" width="4.7" height="2.0" fill="#757575" transform="rotate(-35 385.1 495.7)"/>
<rect x="463.2" y="433.1" width="2.3" height="3.1" fill="#757575" transform="rotate(60 464.3 434.7)"/>
<rect x="422.1" y="435.1" width="2.0" height="2.2" fill="#757575"/>
<rect x="508.0" y="436.2" width="2.1" height="2.2" fill="#757575" transform="rotate(30 509.0 437.3)"/>
<rect x="420.7" y="441.0" width="4.0" height="2.6" fill="#3a3a3a" transform="rotate(90 422.7 442.3)"/>
<rect x="445.8" y="449.8" width="2.2" height="4.5" fill="#3a3a3a" transform="rotate(10 446.9 452.1)"/>
<rect x="475.0" y="493.2" width="2.1" height="2.0" fill="#757575" transform="rotate(45 476.1 494.2)"/>
<rect x="469.0" y="487.7" width="3.7" height="3.2" fill="#757575" transform="rotate(30 470.9 489.3)"/>
<rect x="429.5" y="449.2" width="2.6" height="3.7" fill="#757575" transform="rotate(-15 430.8 451.0)"/>
<rect x="403.4" y="464.0" width="3.8" height="2.8" fill="#757575" transform="rotate(90 405.3 465.4)"/>
<rect x="476.2" y="470.7" width="2.6" height="2.3" fill="#757575" transform="rotate(30 477.5 471.8)"/>
<rect x="482.4" y="465.1" width="2.4" height="2.2" fill="#757575"/>
<rect x="403.4" y="427.5" width="2.6" height="4.4" fill="#757575" transform="rotate(90 404.7 429.7)"/>
<rect x="436.8" y="493.8" width="2.5" height="3.1" fill="#757575" transform="rotate(10 438.1 495.3)"/>
<rect x="381.9" y="442.9" width="4.0" height="2.8" fill="#757575"/>
<rect x="405.4" y="491.7" width="2.6" height="4.7" fill="#757575" transform="rotate(90 406.7 494.0)"/>
<rect x="412.0" y="444.1" width="2.2" height="2.0" fill="#757575" transform="rotate(-35 413.1 445.1)"/>
<rect x="434.7" y="438.4" width="3.1" height="2.4" fill="#757575" transform="rotate(10 436.2 439.6)"/>
<rect x="453.2" y="487.8" width="2.7" height="3.0" fill="#757575" transform="rotate(10 454.5 489.3)"/>
<rect x="398.3" y="413.0" width="3.3" height="2.0" fill="#757575" transform="rotate(90 400.0 414.0)"/>
<rect x="439.4" y="483.2" width="2.5" height="4.6" fill="#757575" transform="rotate(30 440.6 485.5)"/>
<rect x="437.1" y="457.4" width="2.3" height="4.6" fill="#757575"/>
<rect x="477.9" y="494.0" width="5.5" height="2.7" fill="#757575" transform="rotate(60 480.7 495.3)"/>
<rect x="447.5" y="406.6" width="3.6" height="2.5" fill="#757575" transform="rotate(45 449.3 407.8)"/>
<rect x="441.6" y="422.9" width="3.6" height="2.1" fill="#757575" transform="rotate(60 443.4 424.0)"/>
<rect x="393.6" y="416.4" width="2.4" height="2.6" fill="#757575" transform="rotate(60 394.8 417.7)"/>
<rect x="395.8" y="480.1" width="3.1" height="1.9" fill="#757575" transform="rotate(45 397.3 481.1)"/>
<rect x="425.2" y="406.3" width="3.4" height="2.0" fill="#3a3a3a"/>
<rect x="377.4" y="419.3" width="2.0" height="2.7" fill="#757575" transform="rotate(10 378.4 420.6)"/>
<rect x="368.4" y="463.8" width="2.6" height="2.8" fill="#757575" transform="rotate(-35 369.7 465.2)"/>
<rect x="449.6" y="423.3" width="2.3" height="2.7" fill="#757575" transform="rotate(45 450.7 424.6)"/>
<rect x="427.3" y="486.0" width="2.8" height="2.2" fill="#757575" transform="rotate(90 428.7 487.1)"/>
<rect x="395.0" y="439.5" width="2.4" height="2.9" fill="#757575" transform="rotate(45 396.2 441.0)"/>
<rect x="458.9" y="414.2" width="2.7" height="1.8" fill="#757575"/>
<rect x="486.1" y="476.4" width="3.8" height="4.1" fill="#757575"/>
<rect x="419.7" y="427.3" width="2.1" height="2.2" fill="#757575" transform="rotate(-15 420.8 428.4)"/>
<rect x="453.0" y="417.1" width="2.3" height="2.1" fill="#757575" transform="rotate(60 454.2 418.1)"/>
<rect x="361.2" y="499.9" width="10.5" height="6.0" fill="#757575" transform="rotate(4 366.5 502.9)"/>
<rect x="373.2" y="499.5" width="8.5" height="6.0" fill="#757575"/>
<rect x="383.2" y="499.6" width="9.5" height="6.0" fill="#757575" transform="rotate(8 388.0 502.6)"/>
<rect x="395.0" y="499.3" width="7.0" height="5.0" fill="#757575" transform="rotate(-20 398.5 501.8)"/>
<rect x="404.2" y="498.9" width="8.5" height="6.0" fill="#757575" transform="rotate(-6 408.5 501.9)"/>
<rect x="415.0" y="500.2" width="7.0" height="5.0" fill="#757575" transform="rotate(15 418.5 502.7)"/>
<rect x="424.2" y="498.8" width="8.5" height="6.0" fill="#757575" transform="rotate(-10 428.5 501.8)"/>
<rect x="435.1" y="500.0" width="7.8" height="5.0" fill="#757575" transform="rotate(-35 439.0 502.5)"/>
<rect x="446.2" y="499.3" width="8.6" height="5.0" fill="#757575" transform="rotate(30 450.5 501.8)"/>
<rect x="457.2" y="499.1" width="8.5" height="6.0" fill="#757575"/>
<rect x="467.2" y="499.4" width="7.5" height="6.0" fill="#757575"/>
<rect x="477.2" y="500.4" width="8.6" height="5.0" fill="#757575" transform="rotate(30 481.5 502.9)"/>
<rect x="488.2" y="498.9" width="3.5" height="6.0" fill="#757575" transform="rotate(8 490.0 501.9)"/>
<rect x="493.2" y="499.0" width="4.5" height="6.0" fill="#757575" transform="rotate(-6 495.5 502.0)"/>
<rect x="499.2" y="499.1" width="3.5" height="6.0" fill="#757575"/>
<rect x="504.2" y="498.9" width="5.5" height="6.0" fill="#757575" transform="rotate(-6 507.0 501.9)"/>
<rect x="361.2" y="507.3" width="11.5" height="6.9" fill="#757575" transform="rotate(-6 367.0 510.7)"/>
<rect x="374.2" y="507.4" width="11.5" height="6.9" fill="#757575"/>
<rect x="387.2" y="507.0" width="6.5" height="6.9" fill="#757575" transform="rotate(4 390.5 510.5)"/>
<rect x="395.9" y="507.1" width="6.1" height="5.7" fill="#3c3c3c" transform="rotate(45 399.0 509.9)"/>
<rect x="404.9" y="507.5" width="6.1" height="5.7" fill="#757575" transform="rotate(-20 408.0 510.3)"/>
<rect x="413.9" y="507.0" width="6.1" height="5.7" fill="#757575" transform="rotate(30 417.0 509.9)"/>
<rect x="423.3" y="507.0" width="9.4" height="5.7" fill="#757575" transform="rotate(45 428.0 509.8)"/>
<rect x="435.2" y="507.5" width="10.5" height="6.9" fill="#757575" transform="rotate(-10 440.5 510.9)"/>
<rect x="447.2" y="506.7" width="6.5" height="6.9" fill="#757575" transform="rotate(4 450.5 510.1)"/>
<rect x="455.9" y="507.1" width="6.1" height="5.7" fill="#757575" transform="rotate(45 459.0 509.9)"/>
<rect x="465.0" y="507.3" width="7.0" height="5.7" fill="#757575" transform="rotate(45 468.5 510.1)"/>
<rect x="474.2" y="507.4" width="8.5" height="6.9" fill="#757575"/>
<rect x="484.7" y="507.9" width="4.5" height="5.7" fill="#757575" transform="rotate(15 487.0 510.7)"/>
<rect x="491.6" y="507.5" width="2.9" height="5.7" fill="#757575" transform="rotate(15 493.0 510.3)"/>
<rect x="496.2" y="506.4" width="5.5" height="6.9" fill="#757575"/>
<rect x="503.2" y="507.0" width="4.5" height="6.9" fill="#3c3c3c" transform="rotate(8 505.5 510.4)"/>
<rect x="509.5" y="507.7" width="2.5" height="5.7" fill="#757575" transform="rotate(45 510.8 510.5)"/>
<rect x="361.2" y="515.1" width="9.5" height="6.9" fill="#757575" transform="rotate(-10 366.0 518.6)"/>
<rect x="372.8" y="516.1" width="5.3" height="5.6" fill="#757575" transform="rotate(45 375.5 518.9)"/>
<rect x="380.2" y="515.6" width="11.5" height="6.9" fill="#757575" transform="rotate(-10 386.0 519.0)"/>
<rect x="393.2" y="515.6" width="7.5" height="6.9" fill="#757575" transform="rotate(4 397.0 519.1)"/>
<rect x="403.2" y="515.7" width="8.6" height="5.6" fill="#757575" transform="rotate(-35 407.5 518.6)"/>
<rect x="414.2" y="516.0" width="8.5" height="6.9" fill="#757575"/>
<rect x="424.9" y="516.1" width="6.1" height="5.6" fill="#757575" transform="rotate(15 428.0 518.9)"/>
<rect x="433.2" y="515.0" width="7.5" height="6.9" fill="#757575" transform="rotate(4 437.0 518.4)"/>
<rect x="443.2" y="516.4" width="8.6" height="5.6" fill="#757575" transform="rotate(15 447.5 519.2)"/>
<rect x="454.2" y="515.4" width="6.5" height="6.9" fill="#757575" transform="rotate(4 457.5 518.8)"/>
<rect x="462.2" y="515.3" width="11.5" height="6.9" fill="#757575"/>
<rect x="475.2" y="515.0" width="11.5" height="6.9" fill="#757575"/>
<rect x="488.7" y="515.8" width="4.5" height="5.6" fill="#757575" transform="rotate(-20 491.0 518.6)"/>
<rect x="495.2" y="515.4" width="4.5" height="6.9" fill="#757575" transform="rotate(-10 497.5 518.8)"/>
<rect x="501.2" y="515.8" width="5.5" height="6.9" fill="#757575" transform="rotate(-10 504.0 519.2)"/>
<rect x="508.2" y="516.0" width="4.0" height="6.9" fill="#757575" transform="rotate(-6 510.2 519.5)"/>
<rect x="361.2" y="524.4" width="9.5" height="6.3" fill="#757575"/>
<rect x="373.3" y="524.9" width="9.4" height="5.1" fill="#757575" transform="rotate(30 378.0 527.4)"/>
<rect x="385.2" y="524.3" width="8.5" height="6.3" fill="#757575" transform="rotate(4 389.5 527.5)"/>
<rect x="395.2" y="523.5" width="7.5" height="6.3" fill="#757575" transform="rotate(8 399.0 526.6)"/>
<rect x="404.9" y="524.7" width="6.1" height="5.1" fill="#757575" transform="rotate(15 408.0 527.2)"/>
<rect x="413.8" y="524.2" width="5.3" height="5.1" fill="#757575" transform="rotate(45 416.5 526.8)"/>
<rect x="421.2" y="523.4" width="10.5" height="6.3" fill="#757575" transform="rotate(-10 426.5 526.6)"/>
<rect x="433.2" y="523.6" width="10.5" height="6.3" fill="#757575" transform="rotate(8 438.5 526.7)"/>
<rect x="446.1" y="524.3" width="7.8" height="5.1" fill="#757575" transform="rotate(-35 450.0 526.9)"/>
<rect x="457.0" y="525.0" width="7.0" height="5.1" fill="#757575" transform="rotate(-35 460.5 527.6)"/>
<rect x="466.2" y="523.4" width="8.5" height="6.3" fill="#757575" transform="rotate(4 470.5 526.6)"/>
<rect x="477.3" y="524.9" width="9.4" height="5.1" fill="#757575" transform="rotate(45 482.0 527.5)"/>
<rect x="489.6" y="524.6" width="2.9" height="5.1" fill="#757575" transform="rotate(30 491.0 527.2)"/>
<rect x="494.2" y="523.7" width="5.5" height="6.3" fill="#757575" transform="rotate(8 497.0 526.8)"/>
<rect x="501.7" y="524.5" width="3.7" height="5.1" fill="#3c3c3c" transform="rotate(-35 503.5 527.1)"/>
<rect x="507.7" y="524.6" width="4.1" height="5.1" fill="#757575" transform="rotate(-35 509.8 527.2)"/>
<rect x="361.2" y="532.8" width="8.5" height="5.9" fill="#757575"/>
<rect x="371.2" y="532.4" width="8.5" height="5.9" fill="#757575"/>
<rect x="381.2" y="533.0" width="8.5" height="5.9" fill="#757575"/>
<rect x="391.2" y="532.8" width="8.5" height="5.9" fill="#757575"/>
<rect x="401.2" y="532.3" width="8.5" height="5.9" fill="#757575"/>
<rect x="411.2" y="532.7" width="8.5" height="5.9" fill="#757575"/>
<rect x="421.2" y="533.0" width="8.5" height="5.9" fill="#757575"/>
<rect x="431.2" y="532.8" width="8.5" height="5.9" fill="#757575"/>
<rect x="441.2" y="532.3" width="8.5" height="5.9" fill="#757575"/>
<rect x="451.2" y="532.4" width="8.5" height="5.9" fill="#757575"/>
<rect x="461.2" y="532.8" width="8.5" height="5.9" fill="#757575"/>
<rect x="471.2" y="532.7" width="8.2" height="5.9" fill="#757575"/>
<rect x="481.0" y="532.5" width="6.6" height="5.9" fill="#757575"/>
<rect x="489.1" y="532.7" width="5.2" height="5.9" fill="#757575"/>
<rect x="495.8" y="532.3" width="4.1" height="5.9" fill="#3e3e3e"/>
<rect x="501.4" y="532.3" width="3.2" height="5.9" fill="#3e3e3e"/>
<rect x="506.1" y="532.9" width="2.5" height="5.9" fill="#757575"/>
<rect x="510.1" y="532.7" width="1.9" height="5.9" fill="#757575"/>
<rect x="513.4" y="532.7" width="1.3" height="5.9" fill="#757575"/>
<rect x="516.3" y="532.3" width="0.9" height="5.9" fill="#757575"/>
<rect x="518.7" y="532.4" width="0.6" height="5.9" fill="#757575"/>
<rect x="520.7" y="532.7" width="0.5" height="5.9" fill="#757575"/>
<rect x="522.3" y="532.4" width="0.5" height="5.9" fill="#757575"/>
<rect x="523.8" y="532.4" width="0.5" height="5.9" fill="#757575"/>
<rect x="525.0" y="532.7" width="0.5" height="5.9" fill="#757575"/>
<rect x="526.2" y="533.0" width="0.5" height="5.9" fill="#757575"/>
<rect x="527.3" y="532.3" width="0.5" height="5.9" fill="#757575"/>
<rect x="361.2" y="539.5" width="8.5" height="4.7" fill="#757575"/>
<rect x="371.2" y="540.0" width="8.5" height="4.7" fill="#757575"/>
<rect x="381.2" y="539.5" width="8.5" height="4.7" fill="#757575"/>
<rect x="391.2" y="540.2" width="8.5" height="4.7" fill="#757575"/>
<rect x="401.2" y="539.5" width="8.5" height="4.7" fill="#757575"/>
<rect x="411.2" y="539.5" width="8.5" height="4.7" fill="#757575"/>
<rect x="421.2" y="540.2" width="8.5" height="4.7" fill="#757575"/>
<rect x="431.2" y="539.7" width="8.5" height="4.7" fill="#757575"/>
<rect x="441.2" y="539.8" width="8.5" height="4.7" fill="#757575"/>
<rect x="451.2" y="540.1" width="8.5" height="4.7" fill="#757575"/>
<rect x="461.2" y="540.0" width="8.5" height="4.7" fill="#757575"/>
<rect x="471.2" y="539.5" width="8.2" height="4.7" fill="#757575"/>
<rect x="481.0" y="539.9" width="6.6" height="4.7" fill="#757575"/>
<rect x="489.1" y="539.9" width="5.2" height="4.7" fill="#757575"/>
<rect x="495.8" y="539.7" width="4.1" height="4.7" fill="#757575"/>
<rect x="501.4" y="539.8" width="3.2" height="4.7" fill="#757575"/>
<rect x="506.1" y="540.1" width="2.5" height="4.7" fill="#757575"/>
<rect x="510.1" y="540.0" width="1.9" height="4.7" fill="#757575"/>
<rect x="513.4" y="539.5" width="1.3" height="4.7" fill="#757575"/>
<rect x="516.3" y="539.9" width="0.9" height="4.7" fill="#757575"/>
<rect x="518.7" y="539.5" width="0.6" height="4.7" fill="#757575"/>
<rect x="520.7" y="540.2" width="0.5" height="4.7" fill="#757575"/>
<rect x="522.3" y="539.9" width="0.5" height="4.7" fill="#757575"/>
<rect x="523.8" y="539.9" width="0.5" height="4.7" fill="#757575"/>
<rect x="525.0" y="539.7" width="0.5" height="4.7" fill="#757575"/>
<rect x="526.2" y="539.7" width="0.5" height="4.7" fill="#757575"/>
<rect x="527.3" y="539.7" width="0.5" height="4.7" fill="#757575"/>
<rect x="361.2" y="546.3" width="8.5" height="3.8" fill="#757575"/>
<rect x="371.2" y="545.7" width="8.5" height="3.8" fill="#757575"/>
<rect x="381.2" y="546.1" width="8.5" height="3.8" fill="#757575"/>
<rect x="391.2" y="546.1" width="8.5" height="3.8" fill="#757575"/>
<rect x="401.2" y="545.8" width="8.5" height="3.8" fill="#757575"/>
<rect x="411.2" y="546.2" width="8.5" height="3.8" fill="#757575"/>
<rect x="421.2" y="545.6" width="8.5" height="3.8" fill="#757575"/>
<rect x="431.2" y="546.2" width="8.5" height="3.8" fill="#757575"/>
<rect x="441.2" y="546.1" width="8.5" height="3.8" fill="#757575"/>
<rect x="451.2" y="546.2" width="8.5" height="3.8" fill="#757575"/>
<rect x="461.2" y="545.6" width="8.5" height="3.8" fill="#757575"/>
<rect x="471.2" y="545.8" width="8.2" height="3.8" fill="#757575"/>
<rect x="481.0" y="545.6" width="6.6" height="3.8" fill="#757575"/>
<rect x="489.1" y="545.5" width="5.2" height="3.8" fill="#757575"/>
<rect x="495.8" y="545.5" width="4.1" height="3.8" fill="#757575"/>
<rect x="501.4" y="545.9" width="3.2" height="3.8" fill="#757575"/>
<rect x="506.1" y="546.2" width="2.5" height="3.8" fill="#757575"/>
<rect x="510.1" y="546.2" width="1.9" height="3.8" fill="#757575"/>
<rect x="513.4" y="546.3" width="1.3" height="3.8" fill="#757575"/>
<rect x="516.3" y="545.6" width="0.9" height="3.8" fill="#757575"/>
<rect x="518.7" y="545.7" width="0.6" height="3.8" fill="#757575"/>
<rect x="520.7" y="545.9" width="0.5" height="3.8" fill="#757575"/>
<rect x="522.3" y="545.9" width="0.5" height="3.8" fill="#757575"/>
<rect x="523.8" y="545.9" width="0.5" height="3.8" fill="#757575"/>
<rect x="525.0" y="545.8" width="0.5" height="3.8" fill="#757575"/>
<rect x="526.2" y="546.0" width="0.5" height="3.8" fill="#757575"/>
<rect x="527.3" y="545.6" width="0.5" height="3.8" fill="#757575"/>
<rect x="361.2" y="550.7" width="8.5" height="3.0" fill="#757575"/>
<rect x="371.2" y="551.3" width="8.5" height="3.0" fill="#757575"/>
<rect x="381.2" y="550.6" width="8.5" height="3.0" fill="#757575"/>
<rect x="391.2" y="551.0" width="8.5" height="3.0" fill="#757575"/>
<rect x="401.2" y="551.1" width="8.5" height="3.0" fill="#757575"/>
<rect x="411.2" y="550.7" width="8.5" height="3.0" fill="#757575"/>
<rect x="421.2" y="551.3" width="8.5" height="3.0" fill="#757575"/>
<rect x="431.2" y="550.9" width="8.5" height="3.0" fill="#757575"/>
<rect x="441.2" y="551.2" width="8.5" height="3.0" fill="#757575"/>
<rect x="451.2" y="551.1" width="8.5" height="3.0" fill="#757575"/>
<rect x="461.2" y="550.8" width="8.5" height="3.0" fill="#757575"/>
<rect x="471.2" y="550.8" width="8.2" height="3.0" fill="#757575"/>
<rect x="481.0" y="550.7" width="6.6" height="3.0" fill="#757575"/>
<rect x="489.1" y="551.0" width="5.2" height="3.0" fill="#757575"/>
<rect x="495.8" y="551.4" width="4.1" height="3.0" fill="#757575"/>
<rect x="501.4" y="550.6" width="3.2" height="3.0" fill="#757575"/>
<rect x="506.1" y="551.1" width="2.5" height="3.0" fill="#757575"/>
<rect x="510.1" y="551.2" width="1.9" height="3.0" fill="#757575"/>
<rect x="513.4" y="551.3" width="1.3" height="3.0" fill="#757575"/>
<rect x="516.3" y="551.0" width="0.9" height="3.0" fill="#757575"/>
<rect x="518.7" y="551.0" width="0.6" height="3.0" fill="#757575"/>
<rect x="520.7" y="551.2" width="0.5" height="3.0" fill="#757575"/>
<rect x="522.3" y="550.9" width="0.5" height="3.0" fill="#757575"/>
<rect x="523.8" y="551.3" width="0.5" height="3.0" fill="#757575"/>
<rect x="525.0" y="550.7" width="0.5" height="3.0" fill="#757575"/>
<rect x="526.2" y="550.8" width="0.5" height="3.0" fill="#757575"/>
<rect x="527.3" y="550.7" width="0.5" height="3.0" fill="#757575"/>
<rect x="361.2" y="555.3" width="8.5" height="2.3" fill="#757575"/>
<rect x="371.2" y="555.1" width="8.5" height="2.3" fill="#757575"/>
<rect x="381.2" y="555.4" width="8.5" height="2.3" fill="#757575"/>
<rect x="391.2" y="555.3" width="8.5" height="2.3" fill="#757575"/>
<rect x="401.2" y="555.2" width="8.5" height="2.3" fill="#757575"/>
<rect x="411.2" y="555.3" width="8.5" height="2.3" fill="#757575"/>
<rect x="421.2" y="555.5" width="8.5" height="2.3" fill="#757575"/>
<rect x="431.2" y="555.4" width="8.5" height="2.3" fill="#757575"/>
<rect x="441.2" y="555.2" width="8.5" height="2.3" fill="#757575"/>
<rect x="451.2" y="554.9" width="8.5" height="2.3" fill="#757575"/>
<rect x="461.2" y="555.1" width="8.5" height="2.3" fill="#757575"/>
<rect x="471.2" y="555.1" width="8.2" height="2.3" fill="#757575"/>
<rect x="481.0" y="555.1" width="6.6" height="2.3" fill="#757575"/>
<rect x="489.1" y="555.1" width="5.2" height="2.3" fill="#757575"/>
<rect x="495.8" y="555.0" width="4.1" height="2.3" fill="#757575"/>
<rect x="501.4" y="555.0" width="3.2" height="2.3" fill="#757575"/>
<rect x="506.1" y="555.2" width="2.5" height="2.3" fill="#757575"/>
<rect x="510.1" y="555.2" width="1.9" height="2.3" fill="#757575"/>
<rect x="513.4" y="555.4" width="1.3" height="2.3" fill="#757575"/>
<rect x="516.3" y="555.0" width="0.9" height="2.3" fill="#757575"/>
<rect x="518.7" y="555.4" width="0.6" height="2.3" fill="#757575"/>
<rect x="520.7" y="554.9" width="0.5" height="2.3" fill="#757575"/>
<rect x="522.3" y="555.2" width="0.5" height="2.3" fill="#757575"/>
<rect x="523.8" y="555.1" width="0.5" height="2.3" fill="#757575"/>
<rect x="525.0" y="555.6" width="0.5" height="2.3" fill="#757575"/>
<rect x="526.2" y="555.1" width="0.5" height="2.3" fill="#757575"/>
<rect x="527.3" y="554.9" width="0.5" height="2.3" fill="#757575"/>
<rect x="361.2" y="558.5" width="8.5" height="1.7" fill="#757575"/>
<rect x="371.2" y="559.2" width="8.5" height="1.7" fill="#757575"/>
<rect x="381.2" y="558.9" width="8.5" height="1.7" fill="#757575"/>
<rect x="391.2" y="558.9" width="8.5" height="1.7" fill="#757575"/>
<rect x="401.2" y="559.0" width="8.5" height="1.7" fill="#757575"/>
<rect x="411.2" y="558.6" width="8.5" height="1.7" fill="#757575"/>
<rect x="421.2" y="559.0" width="8.5" height="1.7" fill="#757575"/>
<rect x="431.2" y="558.7" width="8.5" height="1.7" fill="#757575"/>
<rect x="441.2" y="559.2" width="8.5" height="1.7" fill="#757575"/>
<rect x="451.2" y="558.7" width="8.5" height="1.7" fill="#757575"/>
<rect x="461.2" y="559.0" width="8.5" height="1.7" fill="#757575"/>
<rect x="471.2" y="558.4" width="8.2" height="1.7" fill="#757575"/>
<rect x="481.0" y="559.2" width="6.6" height="1.7" fill="#757575"/>
<rect x="489.1" y="558.9" width="5.2" height="1.7" fill="#757575"/>
<rect x="495.8" y="558.7" width="4.1" height="1.7" fill="#757575"/>
<rect x="501.4" y="558.7" width="3.2" height="1.7" fill="#757575"/>
<rect x="506.1" y="558.8" width="2.5" height="1.7" fill="#757575"/>
<rect x="510.1" y="558.9" width="1.9" height="1.7" fill="#757575"/>
<rect x="513.4" y="558.9" width="1.3" height="1.7" fill="#757575"/>
<rect x="516.3" y="559.1" width="0.9" height="1.7" fill="#757575"/>
<rect x="518.7" y="559.0" width="0.6" height="1.7" fill="#757575"/>
<rect x="520.7" y="558.9" width="0.5" height="1.7" fill="#757575"/>
<rect x="522.3" y="558.8" width="0.5" height="1.7" fill="#757575"/>
<rect x="523.8" y="559.0" width="0.5" height="1.7" fill="#757575"/>
<rect x="525.0" y="559.2" width="0.5" height="1.7" fill="#757575"/>
<rect x="526.2" y="559.1" width="0.5" height="1.7" fill="#757575"/>
<rect x="527.3" y="559.1" width="0.5" height="1.7" fill="#757575"/>
<rect x="361.2" y="561.8" width="8.5" height="1.2" fill="#757575"/>
<rect x="371.2" y="561.8" width="8.5" height="1.2" fill="#757575"/>
<rect x="381.2" y="561.8" width="8.5" height="1.2" fill="#757575"/>
<rect x="391.2" y="561.8" width="8.5" height="1.2" fill="#757575"/>
<rect x="401.2" y="561.8" width="8.5" height="1.2" fill="#757575"/>
<rect x="411.2" y="561.8" width="8.5" height="1.2" fill="#757575"/>
<rect x="421.2" y="561.8" width="8.5" height="1.2" fill="#757575"/>
<rect x="431.2" y="561.8" width="8.5" height="1.2" fill="#757575"/>
<rect x="441.2" y="561.8" width="8.5" height="1.2" fill="#757575"/>
<rect x="451.2" y="561.8" width="8.5" height="1.2" fill="#757575"/>
<rect x="461.2" y="561.8" width="8.5" height="1.2" fill="#757575"/>
<rect x="471.2" y="561.8" width="8.2" height="1.2" fill="#757575"/>
<rect x="481.0" y="561.8" width="6.6" height="1.2" fill="#757575"/>
<rect x="489.1" y="561.8" width="5.2" height="1.2" fill="#757575"/>
<rect x="495.8" y="561.8" width="4.1" height="1.2" fill="#757575"/>
<rect x="501.4" y="561.8" width="3.2" height="1.2" fill="#757575"/>
<rect x="506.1" y="561.8" width="2.5" height="1.2" fill="#757575"/>
<rect x="510.1" y="561.8" width="1.9" height="1.2" fill="#757575"/>
<rect x="513.4" y="561.8" width="1.3" height="1.2" fill="#757575"/>
<rect x="516.3" y="561.8" width="0.9" height="1.2" fill="#757575"/>
<rect x="518.7" y="561.8" width="0.6" height="1.2" fill="#757575"/>
<rect x="520.7" y="561.8" width="0.5" height="1.2" fill="#757575"/>
<rect x="522.3" y="561.8" width="0.5" height="1.2" fill="#757575"/>
<rect x="523.8" y="561.8" width="0.5" height="1.2" fill="#757575"/>
<rect x="525.0" y="561.8" width="0.5" height="1.2" fill="#757575"/>
<rect x="526.2" y="561.8" width="0.5" height="1.2" fill="#757575"/>
<rect x="527.3" y="561.8" width="0.5" height="1.2" fill="#757575"/>
<rect x="361.2" y="564.4" width="8.5" height="0.8" fill="#757575"/>
<rect x="371.2" y="564.4" width="8.5" height="0.8" fill="#757575"/>
<rect x="381.2" y="564.4" width="8.5" height="0.8" fill="#757575"/>
<rect x="391.2" y="564.4" width="8.5" height="0.8" fill="#757575"/>
<rect x="401.2" y="564.4" width="8.5" height="0.8" fill="#757575"/>
<rect x="411.2" y="564.4" width="8.5" height="0.8" fill="#757575"/>
<rect x="421.2" y="564.4" width="8.5" height="0.8" fill="#757575"/>
<rect x="431.2" y="564.4" width="8.5" height="0.8" fill="#757575"/>
<rect x="441.2" y="564.4" width="8.5" height="0.8" fill="#757575"/>
<rect x="451.2" y="564.4" width="8.5" height="0.8" fill="#757575"/>
<rect x="461.2" y="564.4" width="8.5" height="0.8" fill="#757575"/>
<rect x="471.2" y="564.4" width="8.2" height="0.8" fill="#757575"/>
<rect x="481.0" y="564.4" width="6.6" height="0.8" fill="#757575"/>
<rect x="489.1" y="564.4" width="5.2" height="0.8" fill="#757575"/>
<rect x="495.8" y="564.4" width="4.1" height="0.8" fill="#757575"/>
<rect x="501.4" y="564.4" width="3.2" height="0.8" fill="#757575"/>
<rect x="506.1" y="564.4" width="2.5" height="0.8" fill="#757575"/>
<rect x="510.1" y="564.4" width="1.9" height="0.8" fill="#757575"/>
<rect x="513.4" y="564.4" width="1.3" height="0.8" fill="#757575"/>
<rect x="516.3" y="564.4" width="0.9" height="0.8" fill="#757575"/>
<rect x="518.7" y="564.4" width="0.6" height="0.8" fill="#757575"/>
<rect x="520.7" y="564.4" width="0.5" height="0.8" fill="#757575"/>
<rect x="522.3" y="564.4" width="0.5" height="0.8" fill="#757575"/>
<rect x="523.8" y="564.4" width="0.5" height="0.8" fill="#757575"/>
<rect x="525.0" y="564.4" width="0.5" height="0.8" fill="#757575"/>
<rect x="526.2" y="564.4" width="0.5" height="0.8" fill="#757575"/>
<rect x="527.3" y="564.4" width="0.5" height="0.8" fill="#757575"/>
<rect x="361.2" y="566.5" width="8.5" height="0.5" fill="#757575"/>
<rect x="371.2" y="566.5" width="8.5" height="0.5" fill="#757575"/>
<rect x="381.2" y="566.5" width="8.5" height="0.5" fill="#757575"/>
<rect x="391.2" y="566.5" width="8.5" height="0.5" fill="#757575"/>
<rect x="401.2" y="566.5" width="8.5" height="0.5" fill="#757575"/>
<rect x="411.2" y="566.5" width="8.5" height="0.5" fill="#757575"/>
<rect x="421.2" y="566.5" width="8.5" height="0.5" fill="#757575"/>
<rect x="431.2" y="566.5" width="8.5" height="0.5" fill="#757575"/>
<rect x="441.2" y="566.5" width="8.5" height="0.5" fill="#757575"/>
<rect x="451.2" y="566.5" width="8.5" height="0.5" fill="#757575"/>
<rect x="461.2" y="566.5" width="8.5" height="0.5" fill="#757575"/>
<rect x="471.2" y="566.5" width="8.2" height="0.5" fill="#757575"/>
<rect x="481.0" y="566.5" width="6.6" height="0.5" fill="#757575"/>
<rect x="489.1" y="566.5" width="5.2" height="0.5" fill="#757575"/>
<rect x="495.8" y="566.5" width="4.1" height="0.5" fill="#757575"/>
<rect x="501.4" y="566.5" width="3.2" height="0.5" fill="#757575"/>
<rect x="506.1" y="566.5" width="2.5" height="0.5" fill="#757575"/>
<rect x="510.1" y="566.5" width="1.9" height="0.5" fill="#757575"/>
<rect x="513.4" y="566.5" width="1.3" height="0.5" fill="#757575"/>
<rect x="516.3" y="566.5" width="0.9" height="0.5" fill="#757575"/>
<rect x="518.7" y="566.5" width="0.6" height="0.5" fill="#757575"/>
<rect x="520.7" y="566.5" width="0.5" height="0.5" fill="#757575"/>
<rect x="522.3" y="566.5" width="0.5" height="0.5" fill="#757575"/>
<rect x="523.8" y="566.5" width="0.5" height="0.5" fill="#757575"/>
<rect x="525.0" y="566.5" width="0.5" height="0.5" fill="#757575"/>
<rect x="526.2" y="566.5" width="0.5" height="0.5" fill="#757575"/>
<rect x="527.3" y="566.5" width="0.5" height="0.5" fill="#757575"/>
<rect x="361.2" y="568.2" width="8.5" height="0.5" fill="#757575"/>
<rect x="371.2" y="568.2" width="8.5" height="0.5" fill="#757575"/>
<rect x="381.2" y="568.2" width="8.5" height="0.5" fill="#757575"/>
<rect x="391.2" y="568.2" width="8.5" height="0.5" fill="#757575"/>
<rect x="401.2" y="568.2" width="8.5" height="0.5" fill="#757575"/>
<rect x="411.2" y="568.2" width="8.5" height="0.5" fill="#757575"/>
<rect x="421.2" y="568.2" width="8.5" height="0.5" fill="#757575"/>
<rect x="431.2" y="568.2" width="8.5" height="0.5" fill="#757575"/>
<rect x="441.2" y="568.2" width="8.5" height="0.5" fill="#757575"/>
<rect x="451.2" y="568.2" width="8.5" height="0.5" fill="#757575"/>
<rect x="461.2" y="568.2" width="8.5" height="0.5" fill="#757575"/>
<rect x="471.2" y="568.2" width="8.2" height="0.5" fill="#757575"/>
<rect x="481.0" y="568.2" width="6.6" height="0.5" fill="#757575"/>
<rect x="489.1" y="568.2" width="5.2" height="0.5" fill="#757575"/>
<rect x="495.8" y="568.2" width="4.1" height="0.5" fill="#757575"/>
<rect x="501.4" y="568.2" width="3.2" height="0.5" fill="#757575"/>
<rect x="506.1" y="568.2" width="2.5" height="0.5" fill="#757575"/>
<rect x="510.1" y="568.2" width="1.9" height="0.5" fill="#757575"/>
<rect x="513.4" y="568.2" width="1.3" height="0.5" fill="#757575"/>
<rect x="516.3" y="568.2" width="0.9" height="0.5" fill="#757575"/>
<rect x="518.7" y="568.2" width="0.6" height="0.5" fill="#757575"/>
<rect x="520.7" y="568.2" width="0.5" height="0.5" fill="#757575"/>
<rect x="522.3" y="568.2" width="0.5" height="0.5" fill="#757575"/>
<rect x="523.8" y="568.2" width="0.5" height="0.5" fill="#757575"/>
<rect x="525.0" y="568.2" width="0.5" height="0.5" fill="#757575"/>
<rect x="526.2" y="568.2" width="0.5" height="0.5" fill="#757575"/>
<rect x="527.3" y="568.2" width="0.5" height="0.5" fill="#757575"/>
<rect x="361.2" y="569.6" width="8.5" height="0.5" fill="#757575"/>
<rect x="371.2" y="569.6" width="8.5" height="0.5" fill="#757575"/>
<rect x="381.2" y="569.6" width="8.5" height="0.5" fill="#757575"/>
<rect x="391.2" y="569.6" width="8.5" height="0.5" fill="#757575"/>
<rect x="401.2" y="569.6" width="8.5" height="0.5" fill="#757575"/>
<rect x="411.2" y="569.6" width="8.5" height="0.5" fill="#757575"/>
<rect x="421.2" y="569.6" width="8.5" height="0.5" fill="#757575"/>
<rect x="431.2" y="569.6" width="8.5" height="0.5" fill="#757575"/>
<rect x="441.2" y="569.6" width="8.5" height="0.5" fill="#757575"/>
<rect x="451.2" y="569.6" width="8.5" height="0.5" fill="#757575"/>
<rect x="461.2" y="569.6" width="8.5" height="0.5" fill="#757575"/>
<rect x="471.2" y="569.6" width="8.2" height="0.5" fill="#757575"/>
<rect x="481.0" y="569.6" width="6.6" height="0.5" fill="#757575"/>
<rect x="489.1" y="569.6" width="5.2" height="0.5" fill="#757575"/>
<rect x="495.8" y="569.6" width="4.1" height="0.5" fill="#757575"/>
<rect x="501.4" y="569.6" width="3.2" height="0.5" fill="#757575"/>
<rect x="506.1" y="569.6" width="2.5" height="0.5" fill="#757575"/>
<rect x="510.1" y="569.6" width="1.9" height="0.5" fill="#757575"/>
<rect x="513.4" y="569.6" width="1.3" height="0.5" fill="#757575"/>
<rect x="516.3" y="569.6" width="0.9" height="0.5" fill="#757575"/>
<rect x="518.7" y="569.6" width="0.6" height="0.5" fill="#757575"/>
<rect x="520.7" y="569.6" width="0.5" height="0.5" fill="#757575"/>
<rect x="522.3" y="569.6" width="0.5" height="0.5" fill="#757575"/>
<rect x="523.8" y="569.6" width="0.5" height="0.5" fill="#757575"/>
<rect x="525.0" y="569.6" width="0.5" height="0.5" fill="#757575"/>
<rect x="526.2" y="569.6" width="0.5" height="0.5" fill="#757575"/>
<rect x="527.3" y="569.6" width="0.5" height="0.5" fill="#757575"/>
<rect x="361.2" y="570.9" width="8.5" height="0.5" fill="#757575"/>
<rect x="371.2" y="570.9" width="8.5" height="0.5" fill="#757575"/>
<rect x="381.2" y="570.9" width="8.5" height="0.5" fill="#757575"/>
<rect x="391.2" y="570.9" width="8.5" height="0.5" fill="#757575"/>
<rect x="401.2" y="570.9" width="8.5" height="0.5" fill="#757575"/>
<rect x="411.2" y="570.9" width="8.5" height="0.5" fill="#757575"/>
<rect x="421.2" y="570.9" width="8.5" height="0.5" fill="#757575"/>
<rect x="431.2" y="570.9" width="8.5" height="0.5" fill="#757575"/>
<rect x="441.2" y="570.9" width="8.5" height="0.5" fill="#757575"/>
<rect x="451.2" y="570.9" width="8.5" height="0.5" fill="#757575"/>
<rect x="461.2" y="570.9" width="8.5" height="0.5" fill="#757575"/>
<rect x="471.2" y="570.9" width="8.2" height="0.5" fill="#757575"/>
<rect x="481.0" y="570.9" width="6.6" height="0.5" fill="#757575"/>
<rect x="489.1" y="570.9" width="5.2" height="0.5" fill="#757575"/>
<rect x="495.8" y="570.9" width="4.1" height="0.5" fill="#757575"/>
<rect x="501.4" y="570.9" width="3.2" height="0.5" fill="#757575"/>
<rect x="506.1" y="570.9" width="2.5" height="0.5" fill="#757575"/>
<rect x="510.1" y="570.9" width="1.9" height="0.5" fill="#757575"/>
<rect x="513.4" y="570.9" width="1.3" height="0.5" fill="#757575"/>
<rect x="516.3" y="570.9" width="0.9" height="0.5" fill="#757575"/>
<rect x="518.7" y="570.9" width="0.6" height="0.5" fill="#757575"/>
<rect x="520.7" y="570.9" width="0.5" height="0.5" fill="#757575"/>
<rect x="522.3" y="570.9" width="0.5" height="0.5" fill="#757575"/>
<rect x="523.8" y="570.9" width="0.5" height="0.5" fill="#757575"/>
<rect x="525.0" y="570.9" width="0.5" height="0.5" fill="#757575"/>
<rect x="526.2" y="570.9" width="0.5" height="0.5" fill="#757575"/>
<rect x="527.3" y="570.9" width="0.5" height="0.5" fill="#757575"/>
<rect x="361.2" y="572.2" width="8.5" height="0.5" fill="#757575"/>
<rect x="371.2" y="572.2" width="8.5" height="0.5" fill="#757575"/>
<rect x="381.2" y="572.2" width="8.5" height="0.5" fill="#757575"/>
<rect x="391.2" y="572.2" width="8.5" height="0.5" fill="#757575"/>
<rect x="401.2" y="572.2" width="8.5" height="0.5" fill="#757575"/>
<rect x="411.2" y="572.2" width="8.5" height="0.5" fill="#757575"/>
<rect x="421.2" y="572.2" width="8.5" height="0.5" fill="#757575"/>
<rect x="431.2" y="572.2" width="8.5" height="0.5" fill="#757575"/>
<rect x="441.2" y="572.2" width="8.5" height="0.5" fill="#757575"/>
<rect x="451.2" y="572.2" width="8.5" height="0.5" fill="#757575"/>
<rect x="461.2" y="572.2" width="8.5" height="0.5" fill="#757575"/>
<rect x="471.2" y="572.2" width="8.2" height="0.5" fill="#757575"/>
<rect x="481.0" y="572.2" width="6.6" height="0.5" fill="#757575"/>
<rect x="489.1" y="572.2" width="5.2" height="0.5" fill="#757575"/>
<rect x="495.8" y="572.2" width="4.1" height="0.5" fill="#757575"/>
<rect x="501.4" y="572.2" width="3.2" height="0.5" fill="#757575"/>
<rect x="506.1" y="572.2" width="2.5" height="0.5" fill="#757575"/>
<rect x="510.1" y="572.2" width="1.9" height="0.5" fill="#757575"/>
<rect x="513.4" y="572.2" width="1.3" height="0.5" fill="#757575"/>
<rect x="516.3" y="572.2" width="0.9" height="0.5" fill="#757575"/>
<rect x="518.7" y="572.2" width="0.6" height="0.5" fill="#757575"/>
<rect x="520.7" y="572.2" width="0.5" height="0.5" fill="#757575"/>
<rect x="522.3" y="572.2" width="0.5" height="0.5" fill="#757575"/>
<rect x="523.8" y="572.2" width="0.5" height="0.5" fill="#757575"/>
<rect x="525.0" y="572.2" width="0.5" height="0.5" fill="#757575"/>
<rect x="526.2" y="572.2" width="0.5" height="0.5" fill="#757575"/>
<rect x="527.3" y="572.2" width="0.5" height="0.5" fill="#757575"/>
<rect x="361.2" y="573.5" width="8.5" height="0.5" fill="#757575"/>
<rect x="371.2" y="573.5" width="8.5" height="0.5" fill="#757575"/>
<rect x="381.2" y="573.5" width="8.5" height="0.5" fill="#757575"/>
<rect x="391.2" y="573.5" width="8.5" height="0.5" fill="#757575"/>
<rect x="401.2" y="573.5" width="8.5" height="0.5" fill="#757575"/>
<rect x="411.2" y="573.5" width="8.5" height="0.5" fill="#757575"/>
<rect x="421.2" y="573.5" width="8.5" height="0.5" fill="#757575"/>
<rect x="431.2" y="573.5" width="8.5" height="0.5" fill="#757575"/>
<rect x="441.2" y="573.5" width="8.5" height="0.5" fill="#757575"/>
<rect x="451.2" y="573.5" width="8.5" height="0.5" fill="#757575"/>
<rect x="461.2" y="573.5" width="8.5" height="0.5" fill="#757575"/>
<rect x="471.2" y="573.5" width="8.2" height="0.5" fill="#757575"/>
<rect x="481.0" y="573.5" width="6.6" height="0.5" fill="#757575"/>
<rect x="489.1" y="573.5" width="5.2" height="0.5" fill="#757575"/>
<rect x="495.8" y="573.5" width="4.1" height="0.5" fill="#757575"/>
<rect x="501.4" y="573.5" width="3.2" height="0.5" fill="#757575"/>
<rect x="506.1" y="573.5" width="2.5" height="0.5" fill="#757575"/>
<rect x="510.1" y="573.5" width="1.9" height="0.5" fill="#757575"/>
<rect x="513.4" y="573.5" width="1.3" height="0.5" fill="#757575"/>
<rect x="516.3" y="573.5" width="0.9" height="0.5" fill="#757575"/>
<rect x="518.7" y="573.5" width="0.6" height="0.5" fill="#757575"/>
<rect x="520.7" y="573.5" width="0.5" height="0.5" fill="#757575"/>
<rect x="522.3" y="573.5" width="0.5" height="0.5" fill="#757575"/>
<rect x="523.8" y="573.5" width="0.5" height="0.5" fill="#757575"/>
<rect x="525.0" y="573.5" width="0.5" height="0.5" fill="#757575"/>
<rect x="526.2" y="573.5" width="0.5" height="0.5" fill="#757575"/>
<rect x="527.3" y="573.5" width="0.5" height="0.5" fill="#757575"/>
<rect x="361.2" y="574.8" width="8.5" height="0.5" fill="#757575"/>
<rect x="371.2" y="574.8" width="8.5" height="0.5" fill="#757575"/>
<rect x="381.2" y="574.8" width="8.5" height="0.5" fill="#757575"/>
<rect x="391.2" y="574.8" width="8.5" height="0.5" fill="#757575"/>
<rect x="401.2" y="574.8" width="8.5" height="0.5" fill="#757575"/>
<rect x="411.2" y="574.8" width="8.5" height="0.5" fill="#757575"/>
<rect x="421.2" y="574.8" width="8.5" height="0.5" fill="#757575"/>
<rect x="431.2" y="574.8" width="8.5" height="0.5" fill="#757575"/>
<rect x="441.2" y="574.8" width="8.5" height="0.5" fill="#757575"/>
<rect x="451.2" y="574.8" width="8.5" height="0.5" fill="#757575"/>
<rect x="461.2" y="574.8" width="8.5" height="0.5" fill="#757575"/>
<rect x="471.2" y="574.8" width="8.2" height="0.5" fill="#757575"/>
<rect x="481.0" y="574.8" width="6.6" height="0.5" fill="#757575"/>
<rect x="489.1" y="574.8" width="5.2" height="0.5" fill="#757575"/>
<rect x="495.8" y="574.8" width="4.1" height="0.5" fill="#757575"/>
<rect x="501.4" y="574.8" width="3.2" height="0.5" fill="#757575"/>
<rect x="506.1" y="574.8" width="2.5" height="0.5" fill="#757575"/>
<rect x="510.1" y="574.8" width="1.9" height="0.5" fill="#757575"/>
<rect x="513.4" y="574.8" width="1.3" height="0.5" fill="#757575"/>
<rect x="516.3" y="574.8" width="0.9" height="0.5" fill="#757575"/>
<rect x="518.7" y="574.8" width="0.6" height="0.5" fill="#757575"/>
<rect x="520.7" y="574.8" width="0.5" height="0.5" fill="#757575"/>
<rect x="522.3" y="574.8" width="0.5" height="0.5" fill="#757575"/>
<rect x="523.8" y="574.8" width="0.5" height="0.5" fill="#757575"/>
<rect x="525.0" y="574.8" width="0.5" height="0.5" fill="#757575"/>
<rect x="526.2" y="574.8" width="0.5" height="0.5" fill="#757575"/>
<rect x="527.3" y="574.8" width="0.5" height="0.5" fill="#757575"/>
<rect x="520.1" y="406.2" width="1.4" height="6.9" fill="#757575"/>
<rect x="522.7" y="406.2" width="0.9" height="6.9" fill="#757575"/>
<rect x="524.8" y="406.2" width="0.5" height="6.9" fill="#757575"/>
<rect x="526.4" y="406.2" width="0.5" height="6.9" fill="#757575"/>
<rect x="520.1" y="414.5" width="1.4" height="6.1" fill="#757575"/>
<rect x="522.7" y="414.5" width="0.9" height="6.1" fill="#757575"/>
<rect x="524.8" y="414.5" width="0.5" height="6.1" fill="#757575"/>
<rect x="526.4" y="414.5" width="0.5" height="6.1" fill="#757575"/>
<rect x="520.1" y="421.9" width="1.4" height="5.2" fill="#757575"/>
<rect x="522.7" y="421.9" width="0.9" height="5.2" fill="#757575"/>
<rect x="524.8" y="421.9" width="0.5" height="5.2" fill="#757575"/>
<rect x="526.4" y="421.9" width="0.5" height="5.2" fill="#757575"/>
<rect x="520.1" y="428.6" width="1.4" height="5.9" fill="#757575"/>
<rect x="522.7" y="428.6" width="0.9" height="5.9" fill="#757575"/>
<rect x="524.8" y="428.6" width="0.5" height="5.9" fill="#757575"/>
<rect x="526.4" y="428.6" width="0.5" height="5.9" fill="#757575"/>
<rect x="520.1" y="435.8" width="1.4" height="7.1" fill="#757575"/>
<rect x="522.7" y="435.8" width="0.9" height="7.1" fill="#757575"/>
<rect x="524.8" y="435.8" width="0.5" height="7.1" fill="#757575"/>
<rect x="526.4" y="435.8" width="0.5" height="7.1" fill="#757575"/>
<rect x="520.1" y="444.3" width="1.4" height="6.0" fill="#757575"/>
<rect x="522.7" y="444.3" width="0.9" height="6.0" fill="#757575"/>
<rect x="524.8" y="444.3" width="0.5" height="6.0" fill="#757575"/>
<rect x="526.4" y="444.3" width="0.5" height="6.0" fill="#757575"/>
<rect x="520.1" y="451.7" width="1.4" height="5.4" fill="#757575"/>
<rect x="522.7" y="451.7" width="0.9" height="5.4" fill="#757575"/>
<rect x="524.8" y="451.7" width="0.5" height="5.4" fill="#757575"/>
<rect x="526.4" y="451.7" width="0.5" height="5.4" fill="#757575"/>
<rect x="520.1" y="458.5" width="1.4" height="5.7" fill="#757575"/>
<rect x="522.7" y="458.5" width="0.9" height="5.7" fill="#757575"/>
<rect x="524.8" y="458.5" width="0.5" height="5.7" fill="#757575"/>
<rect x="526.4" y="458.5" width="0.5" height="5.7" fill="#757575"/>
<rect x="520.1" y="465.5" width="1.4" height="5.5" fill="#757575"/>
<rect x="522.7" y="465.5" width="0.9" height="5.5" fill="#757575"/>
<rect x="524.8" y="465.5" width="0.5" height="5.5" fill="#757575"/>
<rect x="526.4" y="465.5" width="0.5" height="5.5" fill="#757575"/>
<rect x="520.1" y="472.4" width="1.4" height="6.6" fill="#757575"/>
<rect x="522.7" y="472.4" width="0.9" height="6.6" fill="#757575"/>
<rect x="524.8" y="472.4" width="0.5" height="6.6" fill="#757575"/>
<rect x="526.4" y="472.4" width="0.5" height="6.6" fill="#757575"/>
<rect x="520.1" y="480.4" width="1.4" height="6.1" fill="#757575"/>
<rect x="522.7" y="480.4" width="0.9" height="6.1" fill="#757575"/>
<rect x="524.8" y="480.4" width="0.5" height="6.1" fill="#757575"/>
<rect x="526.4" y="480.4" width="0.5" height="6.1" fill="#757575"/>
<rect x="520.1" y="487.9" width="1.4" height="6.4" fill="#757575"/>
<rect x="522.7" y="487.9" width="0.9" height="6.4" fill="#757575"/>
<rect x="524.8" y="487.9" width="0.5" height="6.4" fill="#757575"/>
<rect x="526.4" y="487.9" width="0.5" height="6.4" fill="#757575"/>
<rect x="520.1" y="495.7" width="1.4" height="5.2" fill="#757575"/>
<rect x="522.7" y="495.7" width="0.9" height="5.2" fill="#757575"/>
<rect x="524.8" y="495.7" width="0.5" height="5.2" fill="#757575"/>
<rect x="526.4" y="495.7" width="0.5" height="5.2" fill="#757575"/>
<rect x="520.1" y="502.3" width="1.4" height="5.2" fill="#757575"/>
<rect x="522.7" y="502.3" width="0.9" height="5.2" fill="#757575"/>
<rect x="524.8" y="502.3" width="0.5" height="5.2" fill="#757575"/>
<rect x="526.4" y="502.3" width="0.5" height="5.2" fill="#757575"/>
<rect x="520.1" y="508.9" width="1.4" height="6.0" fill="#757575"/>
<rect x="522.7" y="508.9" width="0.9" height="6.0" fill="#757575"/>
<rect x="524.8" y="508.9" width="0.5" height="6.0" fill="#757575"/>
<rect x="526.4" y="508.9" width="0.5" height="6.0" fill="#757575"/>
<rect x="520.1" y="516.2" width="1.4" height="6.1" fill="#757575"/>
<rect x="522.7" y="516.2" width="0.9" height="6.1" fill="#757575"/>
<rect x="524.8" y="516.2" width="0.5" height="6.1" fill="#757575"/>
<rect x="526.4" y="516.2" width="0.5" height="6.1" fill="#757575"/>
<rect x="520.1" y="523.7" width="1.4" height="6.8" fill="#757575"/>
<rect x="522.7" y="523.7" width="0.9" height="6.8" fill="#757575"/>
<rect x="524.8" y="523.7" width="0.5" height="6.8" fill="#757575"/>
<rect x="526.4" y="523.7" width="0.5" height="6.8" fill="#757575"/>
<path d="M363.3 423.7 C376.7 416.3 390.0 407.7 406.0 408.3 S430.0 416.3 448.7 419.7" fill="none" stroke="#757575" stroke-width="6"/>
<path d="M583.9 411.6h5.8M594.1 411.6h2.4M613.3 412.3h1.8M585.7 422.1h4.4M637.1 422.1h7.1M533.6 429.7h3.0M559.3 430.5h3.9M577.3 430.5h2.6M585.0 430.2h1.9M606.1 430.0h3.1M612.5 430.1h2.3M620.0 429.8h2.2M567.3 438.6h2.8M575.5 438.4h5.3M586.3 438.2h4.1M608.7 438.6h3.4M617.1 438.7h4.8M628.2 438.2h2.6M540.5 446.7h3.2M579.8 446.4h5.5M596.7 446.2h3.9M638.3 446.6h3.1M646.2 446.5h0.9M586.0 454.7h2.2M606.3 454.9h6.7M619.7 454.6h3.8M533.0 463.6h2.6M578.0 463.9h4.1M591.4 464.1h3.3M597.2 463.6h6.9M606.8 463.5h5.0M615.1 464.0h7.4M529.4 473.0h1.8M535.7 473.0h2.1M563.6 472.9h4.2M578.0 473.2h5.0M584.9 472.3h6.1M622.1 473.0h2.4M551.3 480.4h2.2M555.5 479.9h2.5M589.8 479.9h2.6M603.2 480.5h2.0M633.8 480.2h6.5M595.6 489.1h4.6M597.6 498.2h3.0M611.6 497.8h3.7M646.0 497.5h1.1M558.1 506.7h4.1M606.1 507.0h7.3M619.1 506.6h6.1M627.9 507.1h3.8M531.2 516.2h2.3M604.9 516.0h3.7M618.9 516.7h4.2M627.7 516.5h2.3M635.5 516.6h3.2M643.8 516.2h2.2M540.0 526.7h2.9M550.5 526.7h4.0M585.0 526.5h5.1M602.0 526.1h4.5M554.1 535.5h3.3M561.4 534.7h2.6M581.1 535.4h5.9M597.6 535.6h2.2M608.6 534.6h3.9M641.6 535.2h2.9M531.4 543.9h3.5M538.1 543.8h3.4M549.2 543.7h1.6M566.7 543.5h2.3M578.0 544.5h4.2M536.8 553.4h2.1M548.4 553.1h2.3M558.1 553.3h1.8M614.2 552.8h5.3M644.3 553.0h2.8M544.7 561.2h3.0M549.7 561.5h2.4M592.8 562.1h2.4M599.1 561.2h4.1M611.7 561.4h1.7M618.5 562.1h6.3M631.9 562.0h3.0M551.9 569.5h3.0M588.9 569.5h5.3M548.8 578.7h3.0M620.4 578.2h4.4M630.2 577.8h3.0M544.8 586.7h2.5M595.0 586.7h2.7M607.8 587.1h5.6M584.8 596.3h5.9M620.7 596.3h5.5M643.7 595.6h3.4M602.8 603.9h1.6M577.2 620.2h3.0M638.2 620.3h3.4M613.6 628.4h6.5M632.1 637.2h5.7M608.0 647.1h7.5M640.7 646.7h3.9M615.0 654.4h2.4M620.4 654.4h6.2M622.3 664.4h7.2M630.2 674.8h3.2M366.0 598.1v3.5M366.0 662.4v4.9M365.6 684.8v1.5M374.7 611.4v1.8M374.5 622.1v3.4M375.3 640.0v2.8M384.3 582.0v3.0M383.9 626.3v3.7M384.2 634.5v2.8M383.7 655.6v6.0M384.2 684.0v4.5M392.8 595.0v2.2M392.4 608.0v3.5M392.9 617.0v2.0M392.6 622.8v3.2M393.0 654.0v5.0M401.3 619.2v3.7M401.6 654.7v1.9M401.7 659.0v1.9M401.9 678.2v4.1M402.0 689.8v1.7M411.5 640.9v2.0M411.4 654.6v3.4M411.5 690.6v0.9M420.7 580.7v2.3M421.0 626.7v2.4M429.9 604.0v4.1M438.3 578.3v2.9M438.6 621.8v2.4M438.5 648.5v3.6M438.3 656.9v5.9M438.1 667.8v2.2M448.1 590.6v1.8M447.9 645.1v5.1M447.5 685.3v4.7M457.6 590.1v2.1M457.3 595.2v3.2M457.9 635.2v1.5M457.4 638.4v5.5M457.3 668.8v2.8M457.4 682.6v2.0M457.2 689.3v2.2M466.5 648.9v3.6M474.7 602.5v2.7M474.8 644.0v5.2M474.6 660.2v3.7M474.3 666.8v5.8M484.1 584.3v1.8M483.6 595.0v2.5M483.7 638.5v1.7M484.2 667.2v3.4M493.7 607.2v3.7M494.1 654.2v4.3M493.6 662.6v4.1M502.1 657.4v4.3M510.1 602.8v3.6M510.6 631.8v3.7M510.8 644.1v3.7M510.4 675.9v3.9M519.8 607.9v3.5M519.5 645.4v2.6M529.0 594.7v3.3M528.7 666.9v5.0M537.0 595.7v2.4M537.4 613.2v3.1M537.5 650.9v5.2M546.0 621.3v2.9M546.1 629.7v1.5M545.6 634.6v4.3M545.7 654.8v4.8M545.8 682.6v1.9M554.1 630.0v2.1M554.2 633.7v2.2M554.0 657.1v1.8M554.0 664.6v1.8M553.5 668.3v4.2M572.5 637.9v2.0M572.4 646.2v3.5M572.2 656.1v4.6M581.1 661.9v6.1M581.6 687.1v4.4M589.6 635.7v5.0M589.8 644.2v2.5M589.3 650.8v4.6M589.2 672.2v5.7M589.4 682.9v3.6M589.1 689.2v2.3M599.4 665.5v2.8M599.0 680.7v7.0M616.0 672.1v6.6M641.1 690.5v1.0" stroke="#c4c4c4" stroke-width="0.8" fill="none"/>
<path d="M529.7 412.3h1.7M547.0 412.5h2.8M554.6 412.1h1.6M621.0 412.1h7.3M554.3 421.9h2.5M559.9 422.0h4.8M570.3 422.4h4.1M578.5 421.6h2.6M614.5 421.6h5.8M550.5 429.8h4.0M592.3 430.5h2.0M597.2 430.2h5.4M546.4 438.5h1.7M560.4 438.3h3.1M558.9 446.7h4.9M610.8 446.0h7.0M566.2 455.4h1.8M570.2 455.1h2.1M590.2 455.4h2.6M596.4 455.0h5.3M566.2 464.0h5.0M631.9 464.5h5.2M640.1 464.1h4.0M609.6 472.4h2.2M545.3 480.1h4.3M578.6 480.7h5.4M611.7 480.3h7.0M642.0 480.5h5.1M533.7 489.3h2.1M539.1 488.7h2.8M557.2 489.3h4.9M581.8 489.2h2.4M589.9 489.0h3.3M604.1 489.0h6.4M614.8 488.9h5.0M634.5 489.1h8.5M554.9 497.8h4.9M578.4 497.6h2.8M586.5 497.8h4.9M550.6 506.4h2.2M566.5 507.4h4.2M591.8 506.9h3.3M578.1 516.8h5.6M574.9 526.5h5.8M593.6 526.8h6.8M617.2 526.3h7.4M536.2 534.7h2.1M590.6 535.2h4.8M603.1 535.5h2.9M617.5 535.3h5.7M558.6 543.7h4.7M571.1 543.7h1.9M593.8 544.0h2.9M607.1 544.4h3.1M615.7 544.4h5.7M642.6 544.4h3.9M568.3 552.6h4.8M579.2 553.2h4.3M594.0 552.7h3.0M605.4 553.0h1.9M533.5 561.9h3.6M567.6 561.7h3.3M606.1 561.2h4.0M627.7 561.4h2.5M642.3 561.7h4.8M542.4 569.4h2.1M566.8 570.0h3.6M584.5 569.4h1.5M613.1 569.6h7.4M623.3 569.8h5.2M645.2 569.7h1.9M567.3 578.4h2.3M574.1 578.6h5.1M587.6 578.6h2.5M609.5 578.7h7.4M552.1 586.4h2.2M559.5 586.9h4.5M618.7 586.4h4.7M552.8 596.2h2.9M593.3 595.9h3.3M601.4 595.5h4.0M611.1 595.9h4.7M561.0 603.6h3.5M569.5 603.6h5.5M583.1 603.1h2.1M606.3 603.3h4.7M616.7 603.2h6.9M568.4 612.4h3.3M578.3 612.1h2.4M585.9 612.7h4.5M592.6 612.1h2.7M602.6 612.0h3.1M611.7 612.7h2.6M617.3 612.7h2.5M590.8 620.4h6.0M605.4 620.4h5.9M620.0 620.2h8.1M588.2 628.3h5.7M606.2 627.6h4.8M629.7 627.8h2.4M636.9 628.1h8.2M599.1 637.7h2.8M615.4 637.0h4.4M624.6 637.3h4.7M619.1 647.0h2.6M627.2 647.0h8.1M638.9 674.8h3.2M641.0 683.0h6.1M365.9 608.6v3.4M365.9 615.5v3.0M365.9 645.0v1.7M366.0 650.4v2.7M366.2 676.9v2.1M365.6 688.4v3.1M374.8 583.0v2.6M375.2 615.2v2.3M374.9 631.3v5.0M374.7 652.2v2.3M375.3 659.9v4.8M375.1 677.0v6.0M384.2 595.5v2.6M383.8 674.2v7.1M392.5 599.1v3.8M392.5 630.1v4.4M392.6 638.2v1.5M393.0 673.3v2.0M392.3 689.5v2.0M401.4 645.0v4.8M402.0 666.3v6.2M411.1 623.5v2.0M411.5 627.5v4.1M411.2 635.2v3.3M411.4 663.4v6.8M410.9 680.2v5.9M420.7 591.7v3.3M420.4 602.7v3.4M420.4 643.1v4.3M420.6 668.2v2.7M420.8 679.6v4.1M420.3 688.9v2.4M430.3 631.3v1.7M430.3 645.9v1.7M430.3 659.9v3.7M430.3 682.7v5.7M438.7 638.4v4.6M438.3 683.9v5.4M448.0 640.3v2.9M447.8 653.5v2.4M448.1 658.0v3.1M448.1 667.1v4.7M447.6 677.0v3.1M457.2 583.3v3.1M457.7 655.2v2.2M466.5 606.1v3.0M466.3 622.6v4.4M466.3 635.0v2.0M466.8 641.5v5.3M466.8 663.3v6.0M474.3 618.5v2.2M474.8 635.3v2.7M474.3 651.5v3.5M484.4 626.5v3.3M484.2 650.5v3.6M484.0 659.1v2.1M484.4 676.2v6.1M493.4 587.7v2.8M494.1 623.8v2.4M493.5 645.1v1.8M493.3 672.1v3.6M493.7 677.3v4.7M501.7 633.2v2.0M501.8 689.3v2.2M510.6 638.7v1.8M510.6 652.7v5.2M519.5 636.5v4.5M519.6 653.1v5.5M519.8 660.1v3.8M519.3 665.7v5.7M519.3 690.1v1.4M529.3 652.6v3.7M529.2 659.1v6.2M529.0 677.6v3.5M536.9 668.1v4.2M537.2 683.7v7.4M545.8 597.8v2.7M545.5 608.4v2.9M546.1 613.4v2.5M546.1 644.5v5.9M545.7 688.5v3.0M563.3 610.5v4.1M562.9 633.5v2.5M563.4 640.1v3.2M563.3 654.0v5.8M562.9 678.4v3.6M571.8 685.7v2.5M581.7 636.1v1.9M581.7 648.9v2.6M581.0 656.0v2.0M581.0 671.4v5.5M589.4 659.1v3.9M599.5 660.7v2.5M607.6 661.5v3.6M615.6 666.7v2.9M632.8 683.4v6.4" stroke="#b6b6b6" stroke-width="0.8" fill="none"/>
<path d="M632.2 412.2h7.5M643.6 411.9h3.5M625.6 422.3h1.6M630.0 422.1h2.8M631.0 430.5h8.3M641.0 429.9h1.8M646.2 430.4h0.9M633.6 438.7h3.8M640.4 438.3h6.2M625.3 446.7h7.6M629.0 455.1h3.4M635.7 455.2h6.4M644.8 455.5h2.3M626.4 464.3h3.3M636.9 472.3h7.0M627.6 480.4h4.6M624.9 488.7h3.6M625.1 497.9h4.3M635.2 498.1h2.9M640.8 497.5h2.7M637.1 507.0h3.5M643.4 507.1h1.7M635.7 526.2h6.5M630.3 535.3h8.3M625.0 543.6h6.2M636.2 543.9h2.4M629.3 553.3h4.3M635.7 553.4h2.6M633.3 569.0h7.7M639.0 578.1h5.5M628.1 586.5h6.0M636.5 586.2h8.3M631.0 595.6h7.3M628.3 603.2h2.0M635.4 603.8h6.1M624.8 612.6h6.0M637.8 612.3h6.5M645.8 612.3h1.3M645.8 637.4h1.3M646.4 647.5h0.7M631.3 655.0h7.3M641.2 654.7h5.9M635.1 664.9h5.3M642.4 664.9h4.7M375.3 687.8v3.7M392.8 678.2v6.7M420.6 674.2v3.2M430.4 669.0v6.3M430.1 678.4v2.8M438.2 672.7v5.4M457.3 674.4v5.2M466.7 671.2v3.2M466.7 679.0v4.4M466.3 688.5v3.0M474.3 687.7v3.8M484.1 687.6v1.6M502.0 670.2v5.6M501.9 679.5v2.7M510.3 684.8v4.8M519.7 676.7v4.0M519.6 682.5v4.0M528.8 685.9v4.8M545.6 673.5v2.5M554.0 678.1v6.1M563.1 673.3v3.4M563.5 684.3v6.6M572.4 672.1v3.7M599.2 675.1v2.8M608.0 684.4v1.7M615.8 682.4v4.5M623.5 669.6v3.6M623.9 680.3v7.1" stroke="#9c9c9c" stroke-width="0.8" fill="none"/>
<rect x="630" y="656.5" width="5" height="1.5" fill="#444"/><rect x="641" y="680" width="1.5" height="6" fill="#333"/>
<polygon points="265.0,237.4 268.3,237.1 270.1,234.2 270.9,231.5 272.1,229.4 275.0,227.8 278.0,229.4 277.9,227.3 280.1,225.4 283.3,225.1 286.9,225.9 287.8,222.4 290.1,221.4 290.8,220.4 292.2,219.8 293.4,218.3 296.1,217.3 294.7,215.5 292.9,212.9 292.3,211.5 290.1,211.3 290.8,209.5 289.4,207.9 290.5,207.2 291.1,206.3 293.4,205.3 293.7,202.7 295.6,202.6 298.1,201.3 299.2,200.5 299.9,198.9 300.0,197.2 301.1,196.3 302.7,195.9 304.1,195.7 305.1,197.3 306.4,195.2 309.5,195.2 311.7,192.6 310.2,189.3 310.6,186.8 312.3,184.5 314.0,183.4 316.2,183.3 317.1,184.3 318.1,184.6 318.2,186.3 319.0,188.4 318.0,191.6 315.1,192.0 314.2,194.3 313.1,195.3 312.0,195.9 313.6,198.7 312.2,200.3 313.5,200.0 314.7,198.2 316.9,196.9 319.2,198.3 319.5,200.8 321.7,201.5 322.9,201.2 324.2,201.3 324.9,199.5 327.6,199.2 327.3,196.2 327.2,194.3 326.9,191.0 328.8,189.8 327.2,188.1 328.2,185.3 329.4,183.7 331.6,184.0 331.6,181.9 332.2,179.2 334.0,176.6 337.7,177.1 339.4,175.5 338.2,172.2 340.2,171.5 343.1,170.5 344.6,170.9 346.3,171.2 345.9,169.6 346.6,167.1 348.1,166.1 350.3,164.2 351.2,162.6 351.4,161.6 353.7,160.6 355.3,161.2 355.5,159.6 355.5,156.7 355.2,153.9 354.3,151.2 356.0,150.6 357.7,149.2 361.4,146.8 361.3,143.2 362.6,142.5 364.3,141.8 366.7,141.3 368.3,142.1 370.2,143.3 372.0,146.3 372.3,147.8 374.3,149.2 375.4,147.9 376.5,147.4 377.0,145.8 379.3,145.2 379.1,144.0 380.3,143.0 382.3,142.8 384.8,143.5 387.6,143.7 389.0,145.0 388.4,147.2 388.9,145.1 390.7,144.7 390.2,143.7 390.4,142.1 391.7,140.8 393.7,141.1 394.4,138.4 396.4,136.1 397.8,137.2 399.0,137.8 401.0,139.0 402.4,139.1 403.5,137.0 404.0,135.3 407.1,136.5 410.4,135.1 410.8,132.2 408.7,130.7 405.2,129.5 402.4,130.1 403.2,128.8 402.8,126.9 400.8,125.7 400.4,123.1 403.3,121.6 407.9,123.5 409.5,121.9 410.4,119.1 410.7,116.7 413.5,115.6 416.4,114.3 418.4,113.1 420.1,113.3 420.9,115.7 422.3,115.5 424.5,116.1 426.3,116.8 427.3,115.9 428.5,113.8 430.5,113.1 429.7,111.0 429.6,108.6 427.7,108.9 426.5,107.1 428.1,106.6 428.9,105.3 428.5,104.0 429.8,103.2 430.9,103.8 433.0,103.7 434.5,105.1 435.8,103.8 437.0,102.9 437.2,101.0 436.5,100.0 437.7,100.7 438.7,102.6 441.1,102.1 442.5,102.0 443.2,99.9 444.2,97.8 446.9,97.1 447.5,95.0 449.5,95.5 450.8,94.0 453.3,94.1 454.5,96.0 455.7,96.7 456.4,97.4 455.3,98.7 456.5,101.0 454.7,101.1 451.5,101.9 449.9,103.7 450.5,106.1 451.6,106.2 452.5,107.1 453.1,108.4 452.5,110.1 454.0,108.9 455.8,108.3 457.5,107.1 457.6,105.1 458.6,104.0 459.6,102.6 461.6,102.0 457.7,103.3 456.9,105.7 456.2,108.9 456.5,111.1 456.6,114.1 454.1,116.3 452.0,119.2 450.5,121.1 449.2,122.9 445.6,123.1 444.0,126.0 444.5,131.1 444.8,133.0 444.0,134.0 443.9,137.1 442.9,139.1 443.6,141.3 445.4,141.9 444.6,143.3 444.9,144.6 446.8,145.3 448.1,144.2 448.6,142.5 450.5,142.2 450.9,140.9 450.9,139.5 450.9,138.4 451.4,137.0 450.9,134.8 452.9,133.1 454.7,131.6 457.5,130.5 459.2,127.0 458.9,123.1 460.8,121.9 460.5,119.5 463.2,117.6 463.0,115.1 465.6,112.1 466.4,109.0 466.2,106.7 464.6,105.1 464.7,107.5 465.5,110.2 465.5,111.8 465.6,113.1 467.4,112.6 468.6,111.1 467.5,109.4 468.6,107.3 469.0,105.9 470.6,104.0 470.0,102.3 468.7,101.4 468.8,99.4 469.6,98.0 472.3,97.1 474.0,97.6 473.6,94.5 475.6,93.0 478.1,93.9 480.1,93.6 481.8,93.9 482.6,93.0 484.2,94.5 486.0,94.4 487.3,96.1 488.6,97.0 488.9,98.2 489.3,99.8 489.0,102.7 487.6,104.0 485.4,106.2 484.4,107.5 485.9,109.0 485.0,111.1 483.9,112.9 481.5,113.4 479.6,115.6 480.2,118.1 480.4,119.9 480.8,120.9 482.2,122.5 484.0,122.2 485.0,121.1 485.6,119.4 487.5,118.8 488.2,116.8 488.6,115.1 488.6,113.3 489.1,112.0 488.9,109.4 490.0,108.1 490.8,106.0 493.0,104.4 494.2,102.7 493.6,101.0 494.7,102.1 496.7,103.1 498.6,101.2 500.7,101.0 502.1,102.2 504.8,103.7 506.8,105.5 508.7,105.1 510.7,105.9 512.1,106.8 515.2,108.0 518.7,109.1 521.1,110.9 521.8,112.7 524.2,114.2 527.7,115.1 527.6,116.8 526.7,117.5 527.7,118.2 527.7,120.1 525.1,120.4 522.9,121.4 522.8,123.3 520.7,125.1 519.1,126.3 518.2,127.9 516.7,130.0 516.7,132.1 514.5,131.6 510.8,130.5 507.6,130.8 506.7,133.1 505.3,130.7 501.9,130.1 497.9,129.4 495.6,132.1 496.9,133.8 499.6,134.8 501.5,134.9 502.7,135.1 506.4,135.5 509.8,140.0 511.0,137.5 514.7,137.1 516.2,138.1 518.7,138.8 520.0,140.0 522.7,140.1 524.0,142.0 525.7,142.3 528.8,142.3 530.7,141.1 530.8,144.1 532.7,144.9 532.5,146.4 533.7,147.2 533.9,148.5 532.4,149.8 533.0,150.6 532.7,152.2 531.5,153.1 530.1,153.9 528.9,153.1 527.7,153.2 526.6,152.9 524.9,151.8 523.7,151.7 522.7,151.2 520.7,159.2 514.7,165.2 511.7,170.2 512.7,176.2 509.7,180.2 505.7,176.2 506.7,169.2 510.7,163.2 510.7,155.2 504.7,149.2 496.6,146.2 488.6,140.1 484.6,138.1 476.6,145.2 466.6,148.2 460.5,160.2 459.5,175.2 461.6,189.3 458.5,199.3 451.5,210.3 443.5,203.3 434.5,201.3 424.5,210.3 412.4,206.3 406.4,196.3 398.4,185.3 393.4,183.3 390.4,192.3 382.3,194.3 377.3,196.3 380.3,205.3 379.3,219.3 374.3,224.4 362.3,220.4 352.3,217.3 347.3,223.4 345.2,238.4 347.5,233.0 343.5,243.0 334.5,238.0 326.5,245.1 322.4,255.1 315.4,264.1 319.4,278.1 317.4,284.2 308.4,297.2 300.4,309.2 302.4,317.2 294.4,322.3 286.4,323.3 286.4,333.3 283.3,345.3 282.3,358.3 275.3,373.4 272.3,379.0 265.6,390.1 273.6,395.1 273.6,408.1 268.6,416.1 255.6,411.7 246.5,417.1 233.5,433.2 233.5,438.2 228.5,446.2 231.5,456.2 228.5,464.2 228.5,478.3 230.5,490.3 226.5,506.4 225.5,518.4 230.5,524.0 226.5,515.0 233.5,524.0 238.5,535.1 233.5,546.1 224.5,549.1 227.5,561.1 229.5,573.2 227.5,583.2 220.5,594.2 211.4,599.2 211.4,605.2 205.4,611.3 206.4,629.3 201.4,641.3 199.8,641.5 198.4,641.3 198.7,638.9 198.1,635.2 196.9,632.9 194.4,631.3 193.1,629.9 191.2,630.4 189.7,631.8 188.4,631.3 186.9,629.9 185.4,629.7 183.6,627.6 184.4,624.3 183.9,622.1 184.3,619.8 184.5,616.7 182.4,615.3 182.6,612.8 184.3,610.4 184.8,606.7 183.4,603.2 183.2,600.1 182.6,598.0 184.0,596.4 186.4,595.2 184.9,595.7 183.9,596.1 182.9,595.9 181.4,595.2 181.9,597.1 183.5,599.1 183.3,601.8 180.4,605.2 179.6,606.2 178.3,607.8 175.7,607.9 174.3,608.2 175.6,609.5 177.5,609.0 178.2,610.5 178.4,613.3 179.9,614.7 179.4,616.2 179.7,618.0 179.4,619.3 179.3,620.9 177.4,622.9 177.2,624.6 176.4,626.3 174.0,627.7 171.7,626.3 168.7,627.3 168.3,631.3 167.0,631.9 165.6,632.5 163.7,633.6 160.3,633.3 157.9,634.6 157.1,635.9 155.4,638.5 152.3,638.3 150.0,637.9 147.7,639.2 145.7,641.9 144.3,645.3 142.3,649.3 142.1,652.1 138.2,655.2 134.2,653.4 131.8,654.8 130.5,659.3 127.5,657.8 124.2,659.4 120.5,660.3 119.6,663.0 116.6,661.9 114.2,664.4 110.7,662.2 107.7,663.5 105.4,664.8 104.2,668.4 101.9,666.8 99.3,668.2 97.1,668.3 96.1,667.4 93.6,666.9 91.6,664.9 89.8,665.1 88.1,664.4 85.7,665.3 83.9,664.2 82.7,662.8 81.1,660.4 81.4,659.3 82.4,657.8 83.4,656.5 83.1,655.4 80.1,653.8 80.5,649.4 77.9,648.0 76.1,649.3 72.6,648.6 71.1,645.8 71.1,643.1 68.1,641.3 62.7,640.4 61.7,636.8 62.0,634.5 63.1,631.3 63.7,630.0 63.4,628.2 64.2,625.9 63.1,623.3 63.3,620.7 63.4,616.8 66.9,615.2 68.1,613.3 66.8,612.1 67.3,609.5 65.5,609.1 64.1,608.2 62.9,607.7 61.6,607.0 60.8,605.3 59.0,605.2 59.3,603.6 59.2,601.4 60.6,599.7 62.1,597.2 61.9,593.6 64.0,591.7 65.4,590.7 66.1,589.2 67.4,587.4 67.0,583.5 65.6,582.4 64.1,581.2 64.3,578.1 62.5,575.9 63.1,574.1 64.1,571.1 64.6,569.0 66.7,565.9 66.5,564.2 68.1,563.1 66.9,561.7 65.7,559.7 66.7,557.0 65.1,555.1 66.1,552.7 67.0,549.9 68.4,548.6 68.1,547.1 68.3,545.1 67.1,544.5 65.9,543.2 66.1,541.1 65.4,539.0 66.4,537.9 66.5,535.3 65.1,533.0 65.6,530.8 66.6,528.9 68.4,526.6 70.1,526.0 70.5,524.0 69.4,522.4 68.4,522.1 67.1,521.0 67.6,518.9 68.0,517.0 68.1,515.0 67.1,516.7 65.5,518.9 67.8,520.1 68.1,524.0 66.9,522.7 67.2,520.7 67.4,519.1 68.1,518.4 69.2,517.4 69.3,515.5 71.3,514.3 73.1,514.4 72.1,512.1 71.0,510.8 71.3,509.7 71.1,508.4 73.2,508.3 75.1,508.4 75.9,506.1 78.4,504.3 79.3,501.8 80.1,500.3 77.5,499.9 76.5,498.4 75.4,497.3 76.1,495.3 76.1,492.9 75.8,491.1 75.4,489.7 77.1,488.3 77.7,486.9 78.2,485.9 78.9,484.3 80.1,484.3 80.1,482.9 81.1,482.1 81.9,480.6 82.1,479.3 83.2,478.4 84.5,478.4 86.1,477.7 87.1,478.3 88.0,476.9 88.1,474.3 87.2,473.2 88.1,471.3 89.1,470.4 89.8,469.2 92.6,469.3 94.1,468.3 95.6,468.6 98.2,468.0 98.5,465.2 100.2,464.2 102.8,462.1 105.3,462.0 106.0,460.3 108.2,460.2 109.9,459.8 111.2,459.5 113.0,456.8 114.2,455.2 115.0,453.8 117.3,453.1 119.4,452.7 120.2,450.2 121.7,449.5 123.6,450.7 124.6,449.7 126.2,450.2 127.8,450.0 129.3,449.3 129.1,447.4 130.2,446.2 131.6,445.4 133.8,444.2 136.3,443.5 138.3,443.2 140.7,442.5 141.3,440.2 142.5,439.7 144.3,440.2 146.2,440.7 148.2,441.1 150.8,439.5 152.3,438.2 154.0,438.0 155.4,438.1 158.0,436.5 158.3,434.2 156.3,435.3 153.8,434.0 152.2,434.0 150.3,433.2 150.2,431.6 150.8,430.8 150.2,429.3 149.3,428.2 150.2,425.8 151.8,425.5 153.3,425.3 154.3,425.7 155.2,426.1 156.8,426.1 158.3,426.2 159.3,426.1 160.8,425.8 161.3,423.5 162.8,423.1 164.3,422.1 163.3,420.3 161.8,419.4 161.3,418.1 162.1,416.6 163.7,415.5 164.9,415.0 166.3,416.1 168.1,415.9 169.4,416.1 170.3,413.4 172.3,413.1 173.0,414.7 172.2,416.7 172.4,418.4 173.3,419.1 174.0,420.7 174.4,421.6 176.1,422.3 178.4,424.1 180.5,423.0 182.9,424.8 183.3,423.2 184.4,422.1 184.4,420.5 184.3,417.8 186.8,417.6 187.4,416.1 187.6,413.4 190.1,412.0 191.8,410.6 193.4,411.1 193.8,409.3 195.4,408.7 194.8,407.0 194.4,406.1 194.6,403.5 196.3,401.3 198.8,402.0 200.4,400.1 202.4,398.3 205.2,398.3 207.5,395.5 206.4,392.1 207.8,391.6 209.1,390.5 210.8,387.9 212.4,387.0 213.5,384.8 214.2,383.3 215.5,381.5 218.5,382.0 218.0,379.6 217.8,378.2 219.7,377.9 220.5,376.0 219.0,375.1 217.7,374.2 217.0,371.9 214.5,370.0 216.9,370.4 220.0,371.1 220.7,375.8 222.2,379.0 221.1,378.6 220.5,377.0 219.3,376.3 218.2,376.4 217.5,374.4 214.5,374.3 213.7,373.2 214.2,371.4 215.1,370.5 216.7,369.2 218.8,369.6 220.2,368.4 221.6,369.1 223.9,368.9 225.1,369.3 227.2,369.4 227.5,367.8 228.7,366.0 230.2,364.4 231.1,364.8 232.7,364.4 234.4,364.2 236.2,362.4 237.3,361.4 238.4,359.9 239.3,357.4 240.2,355.3 243.4,354.4 243.9,352.1 243.1,350.1 243.2,347.3 243.1,345.2 244.2,344.3 244.0,342.9 244.2,341.3 244.7,338.7 246.2,338.0 248.1,335.8 248.3,333.3 249.2,331.0 251.2,331.0 251.3,327.9 252.3,326.3 250.5,326.4 249.5,327.0 248.8,325.7 247.3,325.3 247.0,323.9 247.2,322.7 247.8,320.7 248.3,319.2 250.0,317.1 250.7,315.1 252.6,313.8 254.3,314.2 255.8,312.4 258.0,313.1 259.7,312.4 260.3,311.2 259.8,309.7 260.6,308.8 259.9,307.0 259.3,305.2 259.7,303.3 260.5,302.4 262.3,302.2 263.1,300.0 262.3,298.7 263.7,298.1 264.3,296.2 265.4,294.3 266.7,293.1 267.2,291.8 268.3,291.2 268.5,289.5 270.4,288.9 270.5,286.9 270.3,285.2 271.9,285.4 273.3,284.7 274.3,284.2 274.4,282.5 275.3,281.0 278.0,279.5 280.3,279.1 283.3,278.2 284.9,276.0 286.0,274.8 286.4,273.1 286.1,271.9 286.8,270.0 288.5,268.0 290.4,268.1 290.6,266.1 293.5,265.3 293.5,263.8 294.4,263.1 294.7,260.9 295.4,258.6 297.1,257.7 298.4,257.1 296.7,257.7 295.5,256.5 294.5,255.3 293.4,255.1 293.9,253.1 292.9,251.6 294.3,249.4 294.4,247.1 296.3,245.3 297.1,243.8 298.7,244.0 300.4,242.0 299.7,239.2 300.6,237.8 301.7,236.4 304.4,235.0 305.8,234.4 308.2,234.4 308.8,233.5 310.4,233.0 311.4,231.5 313.7,229.2 315.2,228.6 316.4,227.0 314.6,227.5 312.8,226.3 311.4,225.5 310.4,226.0 306.9,227.5 304.0,226.5 301.4,227.4 298.4,228.0 296.6,230.9 292.9,230.4 290.6,229.9 288.4,231.0 285.8,232.7 285.5,235.2 281.7,233.3 278.3,234.0 275.8,235.6 275.9,237.7 272.6,237.6 270.3,237.0 267.1,239.3 265.5,242.1 263.1,243.5 262.3,245.1 260.7,242.7 261.3,239.8 262.6,238.1" fill="#777777" stroke="#e2e2e2" stroke-width="1.6" stroke-linejoin="round"/><path d="M495.6 133.1L501.2 134.6L503.1 138.4L505.4 139.3L508.7 138.1L511.0 139.6L515.2 140.9L516.5 143.1L518.7 145.2L519.3 147.1L519.9 148.3L521.4 149.4L522.7 151.2M260.3 330.3L257.6 328.9L256.1 328.1L255.4 326.7L254.3 325.3M255.3 356.3L252.5 357.7L251.3 359.3L250.6 361.3L248.3 363.4L246.7 363.8L244.9 363.9L243.0 364.6L242.2 365.4M152.3 440.2L154.7 441.5L155.8 443.7L155.6 447.9L156.3 450.2L157.8 450.4L159.0 451.9L159.4 453.5L160.3 454.2M130.2 450.2L134.5 452.3L137.2 452.6L138.6 454.8L140.3 456.2L142.8 455.7L145.2 454.9L148.7 454.8L152.3 458.2L153.6 460.6L155.1 461.5L157.1 462.3L158.3 462.2M106.2 464.2L108.3 465.2L110.8 467.0L112.4 468.2L114.2 468.3L117.6 468.2L120.7 468.4L121.8 470.5L124.2 472.3L125.5 473.1L126.0 474.9L127.1 475.6L128.2 476.3L127.1 477.8L126.3 478.8L125.3 480.3L124.2 481.3M100.2 470.3L102.3 470.9L103.9 472.8L105.9 475.0L106.2 478.3M114.2 470.3L115.3 471.8L116.4 474.5L116.6 476.7L116.2 478.3M83.1 483.3L86.5 481.8L90.3 483.0L91.6 484.9L94.1 485.3L98.3 487.1L99.9 489.0L102.7 489.8L104.2 491.3L108.3 491.1L111.9 491.6L113.7 491.3L116.2 491.3M72.1 518.4L75.8 518.8L81.3 516.4L85.3 516.7L90.1 519.4L94.3 521.8L100.2 522.3L104.0 522.9L106.2 522.4L107.3 521.3L109.1 521.1L109.2 519.8L110.2 518.4M128.2 514.4L127.0 515.1L126.5 516.5L125.2 518.6L124.2 520.4M116.2 527.0L117.5 528.0L118.0 529.8L118.6 533.3L117.2 535.1M68.1 537.1L71.3 537.6L73.5 538.6L74.8 540.1L76.1 541.1L77.7 540.8L80.1 539.3L81.3 539.2L83.1 539.1M67.1 551.1L69.4 550.2L71.9 549.3L73.2 547.7L76.1 547.1L77.6 549.1L77.5 551.3L78.9 553.4L80.1 555.1M66.1 565.1L67.5 565.6L69.1 564.8L71.7 565.1L74.1 563.1L75.9 563.4L76.9 564.5L78.1 565.9L78.1 567.1L76.6 567.6L74.4 568.8L74.3 573.4L72.1 575.2L73.4 577.0L74.5 577.7L75.6 579.6L76.1 581.2L78.8 581.9L81.4 583.7L83.6 582.4L86.1 582.2M68.1 613.3L71.2 613.5L72.8 612.1L74.4 610.3L76.1 609.2L78.0 607.6L79.7 607.6L80.2 605.0L82.1 603.2M70.1 615.3L72.1 617.8L74.4 618.6L76.9 620.6L77.1 623.3M505.4 139.3L507.1 137.4M515.2 140.9L510.8 139.3M516.5 143.1L512.9 146.5M519.9 148.3L520.1 151.2M250.6 361.3L249.4 366.0M244.9 363.9L244.6 367.1M155.8 443.7L160.0 440.0M155.6 447.9L152.5 450.8M156.3 450.2L151.3 452.8M157.8 450.4L155.4 448.7M134.5 452.3L137.3 452.4M138.6 454.8L142.3 457.0M152.3 458.2L149.6 456.7M157.1 462.3L152.8 460.7M108.3 465.2L107.6 471.1M112.4 468.2L110.8 462.6M114.2 468.3L112.2 466.6M125.5 473.1L122.3 477.6M125.3 480.3L126.4 476.8M103.9 472.8L100.5 474.1M105.9 475.0L103.9 472.9M116.4 474.5L117.4 469.3M90.3 483.0L90.0 479.0M91.6 484.9L95.4 484.0M104.2 491.3L106.1 488.5M108.3 491.1L111.4 490.6M81.3 516.4L84.3 517.6M104.0 522.9L101.2 521.8M106.2 522.4L101.6 520.7M107.3 521.3L102.6 522.8M126.5 516.5L125.4 511.4M118.0 529.8L122.2 531.1M118.6 533.3L116.7 531.3M73.5 538.6L76.6 538.9M80.1 539.3L74.3 540.0M71.9 549.3L77.5 549.1M78.9 553.4L76.2 550.0M74.1 563.1L72.8 559.2M78.1 565.9L75.1 563.6M76.6 567.6L78.8 563.1M72.1 575.2L68.3 572.5M75.6 579.6L77.3 583.9M76.1 581.2L79.5 582.7M83.6 582.4L84.2 578.8M72.8 612.1L77.2 610.8M79.7 607.6L77.8 610.3M72.1 617.8L72.6 620.6M74.4 618.6L79.9 616.4" fill="none" stroke="#e0e0e0" stroke-width="1.1" stroke-linejoin="round" stroke-linecap="round"/><polygon points="235.2,338.3 239.2,336.9 241.8,340.3 239.2,343.3 235.8,342.3" fill="#777" stroke="#e4e4e4" stroke-width="1.2"/><path d="M422.1 112.6L422.7 115.2L424.1 120.4L424.6 124.9L423.8 127.3L421.0 132.3L417.8 138.6L415.2 143.2L418.4 147.5L419.6 151.4L421.2 151.0L420.2 146.5L417.6 143.2L420.2 140.0L423.8 133.9L427.0 128.9L428.4 125.3L428.3 119.8L427.1 114.2L426.9 111.8ZM386.0 142.0L387.3 144.1L388.0 145.3L389.0 146.3L390.1 148.9L391.4 152.0L394.4 153.4L397.7 153.9L399.2 157.9L403.9 161.7L404.9 160.7L400.6 156.9L399.1 152.5L395.2 151.2L393.4 150.4L392.9 147.9L391.8 144.9L391.0 143.5L390.7 142.3L389.4 140.0ZM375.0 145.4L375.5 147.8L376.1 152.7L376.7 155.6L377.9 159.7L379.0 163.4L379.6 167.3L377.3 172.8L375.6 178.1L373.6 184.1L375.0 184.5L377.2 178.7L379.3 173.6L382.0 167.7L381.6 163.0L380.9 158.9L379.9 154.8L379.7 152.3L379.5 147.4L379.4 144.8ZM368.7 143.4L368.4 145.4L366.5 148.8L366.7 154.5L363.4 156.6L360.9 162.7L359.6 168.0L358.1 171.0L358.9 175.3L359.4 179.4L361.3 183.8L364.8 187.8L365.8 186.8L362.7 183.0L361.2 179.0L361.1 175.1L360.5 171.4L362.2 169.0L363.7 163.7L366.0 158.6L369.9 155.9L370.3 149.6L372.2 147.0L372.9 144.2ZM305.9 234.2L308.1 232.9L309.2 232.0L311.1 230.9L317.0 227.0L320.4 224.8L324.1 225.9L330.2 226.5L334.0 225.6L338.4 224.1L338.0 222.7L333.6 223.8L330.2 224.3L324.5 223.5L320.0 222.0L315.4 224.2L309.3 227.9L307.4 228.6L306.1 229.1L303.9 230.0ZM342.0 200.8L338.6 202.2L333.7 204.8L330.8 209.6L327.8 212.7L324.3 213.6L319.7 216.6L320.7 218.0L325.1 215.0L328.6 213.9L332.0 210.4L334.7 205.8L339.2 203.4L342.4 201.8ZM312.3 225.9L314.2 227.6L316.2 229.2L318.0 230.7L318.9 233.6L321.3 237.0L319.4 239.7L317.7 244.9L319.1 245.3L321.0 240.5L323.5 237.0L321.3 232.6L320.8 229.3L318.6 226.8L317.0 224.8L315.3 222.9ZM295.3 264.7L297.7 263.9L300.2 262.8L301.8 262.1L303.8 265.0L305.8 267.5L307.0 266.7L305.4 264.0L303.0 260.1L299.6 260.0L296.7 260.7L294.3 261.1ZM285.2 272.8L287.4 272.8L291.8 274.8L298.0 274.2L299.5 276.9L302.9 279.6L303.9 278.6L300.9 275.7L298.8 272.0L292.2 272.0L288.6 269.8L285.8 269.0ZM249.7 318.7L252.6 318.6L255.9 317.1L261.8 318.6L265.1 320.1L270.4 320.3L274.2 318.9L278.7 315.8L277.9 314.6L273.4 317.3L270.2 318.1L265.7 317.7L262.8 315.8L256.1 313.9L252.0 315.0L249.9 314.7ZM182.3 424.7L184.9 424.6L186.7 424.2L186.8 423.4L188.4 428.5L189.0 437.2L195.6 436.5L198.9 434.0L203.1 433.3L207.2 431.2L211.5 426.3L217.2 420.8L220.3 417.0L221.3 413.3L219.7 412.9L218.7 416.0L215.8 419.4L209.9 424.7L205.6 429.2L202.3 430.7L197.9 431.2L194.4 433.7L191.8 435.2L191.8 427.9L190.0 421.6L186.7 420.2L184.7 420.4L182.3 420.3ZM65.2 522.7L67.8 522.6L69.1 522.3L70.1 522.4L77.4 522.3L90.1 523.2L101.8 522.6L107.8 525.0L112.0 526.5L116.2 527.8L121.3 525.8L128.3 524.6L128.1 523.4L120.9 524.4L116.2 526.2L112.6 524.7L108.6 523.0L102.0 520.4L90.1 520.8L77.6 519.7L70.1 519.6L69.1 519.3L67.6 519.4L65.2 519.3ZM68.7 577.9L70.8 576.7L75.3 574.6L79.1 572.0L81.6 567.4L88.7 562.0L95.7 557.1L100.3 556.0L106.4 555.2L111.2 554.7L111.2 553.5L106.2 553.6L100.1 554.2L94.9 555.3L87.5 560.2L79.8 565.6L77.1 570.2L73.9 572.0L69.4 573.7L67.1 574.7ZM58.2 606.9L60.4 606.2L62.7 606.0L64.3 604.8L69.4 604.8L74.9 602.2L76.7 598.9L80.6 596.0L83.7 594.0L88.1 593.8L88.1 592.6L83.3 592.4L79.6 594.4L75.1 597.3L73.3 600.2L68.8 601.8L63.9 601.6L61.9 602.4L59.8 602.2L57.2 602.7Z" fill="#444444"/><path d="M422.7 115.2L424.1 120.4L424.6 124.9L423.8 127.3L421.0 132.3L417.8 138.6L415.2 143.2L418.4 147.5L419.6 151.4L421.2 151.0L420.2 146.5L417.6 143.2L420.2 140.0L423.8 133.9L427.0 128.9L428.4 125.3L428.3 119.8L427.1 114.2M387.3 144.1L388.0 145.3L389.0 146.3L390.1 148.9L391.4 152.0L394.4 153.4L397.7 153.9L399.2 157.9L403.9 161.7L404.9 160.7L400.6 156.9L399.1 152.5L395.2 151.2L393.4 150.4L392.9 147.9L391.8 144.9L391.0 143.5L390.7 142.3M375.5 147.8L376.1 152.7L376.7 155.6L377.9 159.7L379.0 163.4L379.6 167.3L377.3 172.8L375.6 178.1L373.6 184.1L375.0 184.5L377.2 178.7L379.3 173.6L382.0 167.7L381.6 163.0L380.9 158.9L379.9 154.8L379.7 152.3L379.5 147.4M368.4 145.4L366.5 148.8L366.7 154.5L363.4 156.6L360.9 162.7L359.6 168.0L358.1 171.0L358.9 175.3L359.4 179.4L361.3 183.8L364.8 187.8L365.8 186.8L362.7 183.0L361.2 179.0L361.1 175.1L360.5 171.4L362.2 169.0L363.7 163.7L366.0 158.6L369.9 155.9L370.3 149.6L372.2 147.0M308.1 232.9L309.2 232.0L311.1 230.9L317.0 227.0L320.4 224.8L324.1 225.9L330.2 226.5L334.0 225.6L338.4 224.1L338.0 222.7L333.6 223.8L330.2 224.3L324.5 223.5L320.0 222.0L315.4 224.2L309.3 227.9L307.4 228.6L306.1 229.1M342.0 200.8L338.6 202.2L333.7 204.8L330.8 209.6L327.8 212.7L324.3 213.6L319.7 216.6L320.7 218.0L325.1 215.0L328.6 213.9L332.0 210.4L334.7 205.8L339.2 203.4L342.4 201.8L342.0 200.8M314.2 227.6L316.2 229.2L318.0 230.7L318.9 233.6L321.3 237.0L319.4 239.7L317.7 244.9L319.1 245.3L321.0 240.5L323.5 237.0L321.3 232.6L320.8 229.3L318.6 226.8L317.0 224.8M297.7 263.9L300.2 262.8L301.8 262.1L303.8 265.0L305.8 267.5L307.0 266.7L305.4 264.0L303.0 260.1L299.6 260.0L296.7 260.7M287.4 272.8L291.8 274.8L298.0 274.2L299.5 276.9L302.9 279.6L303.9 278.6L300.9 275.7L298.8 272.0L292.2 272.0L288.6 269.8M252.6 318.6L255.9 317.1L261.8 318.6L265.1 320.1L270.4 320.3L274.2 318.9L278.7 315.8L277.9 314.6L273.4 317.3L270.2 318.1L265.7 317.7L262.8 315.8L256.1 313.9L252.0 315.0M184.9 424.6L186.7 424.2L186.8 423.4L188.4 428.5L189.0 437.2L195.6 436.5L198.9 434.0L203.1 433.3L207.2 431.2L211.5 426.3L217.2 420.8L220.3 417.0L221.3 413.3L219.7 412.9L218.7 416.0L215.8 419.4L209.9 424.7L205.6 429.2L202.3 430.7L197.9 431.2L194.4 433.7L191.8 435.2L191.8 427.9L190.0 421.6L186.7 420.2L184.7 420.4M67.8 522.6L69.1 522.3L70.1 522.4L77.4 522.3L90.1 523.2L101.8 522.6L107.8 525.0L112.0 526.5L116.2 527.8L121.3 525.8L128.3 524.6L128.1 523.4L120.9 524.4L116.2 526.2L112.6 524.7L108.6 523.0L102.0 520.4L90.1 520.8L77.6 519.7L70.1 519.6L69.1 519.3L67.6 519.4M70.8 576.7L75.3 574.6L79.1 572.0L81.6 567.4L88.7 562.0L95.7 557.1L100.3 556.0L106.4 555.2L111.2 554.7L111.2 553.5L106.2 553.6L100.1 554.2L94.9 555.3L87.5 560.2L79.8 565.6L77.1 570.2L73.9 572.0L69.4 573.7M60.4 606.2L62.7 606.0L64.3 604.8L69.4 604.8L74.9 602.2L76.7 598.9L80.6 596.0L83.7 594.0L88.1 593.8L88.1 592.6L83.3 592.4L79.6 594.4L75.1 597.3L73.3 600.2L68.8 601.8L63.9 601.6L61.9 602.4L59.8 602.2" fill="none" stroke="#e0e0e0" stroke-width="1.15" stroke-linejoin="round" stroke-linecap="round"/><path d="M269.2 236.8L266.5 237.9M275.1 230.8L272.9 230.1M276.5 232.2L277.4 233.5M278.6 230.4L278.0 232.3L277.6 234.2M281.5 228.8L279.3 227.3L277.6 227.7L275.0 229.6M283.2 225.4L284.2 227.4L284.0 230.1M295.1 221.6L298.4 222.3L299.9 224.1L303.1 224.8L305.9 225.6M294.1 218.9L294.7 221.6L293.4 224.3L294.2 225.8L295.4 227.1M291.4 211.2L292.7 210.4L294.4 210.7L295.9 211.9M293.3 210.1L290.5 211.2M293.3 207.9L291.3 206.5M302.4 203.6L305.1 202.5L308.2 202.8L310.5 204.3M302.8 203.3L304.4 204.1L307.1 204.3M310.7 196.9L309.1 196.2L309.3 194.7L311.8 192.6L313.2 192.4M312.3 194.8L310.8 195.6L309.5 194.4M312.7 192.7L314.1 192.0L314.7 189.9L315.4 188.2M316.3 186.2L314.6 188.9L315.4 190.2M317.3 186.3L315.6 184.9L314.0 185.7L312.7 187.2L312.9 189.0M314.6 189.4L312.3 190.2L310.5 190.3M316.3 201.2L315.5 199.7M318.5 203.1L317.1 204.3L316.0 205.3L314.3 205.0M322.4 203.0L321.3 204.8L320.8 206.2M330.8 202.3L329.4 204.3L326.7 205.0M329.9 197.9L326.9 197.3M333.3 194.4L332.3 195.6L331.8 198.2L333.8 200.5M329.4 191.7L328.4 193.8L330.6 196.1L329.9 198.4M333.3 186.8L332.9 184.2L332.3 182.5L334.2 179.8M337.0 181.6L338.5 181.6L340.2 180.5L342.0 181.6L342.4 183.0M341.0 178.3L341.9 181.0L342.4 182.6L344.1 184.7M338.4 173.4L337.8 176.4L339.7 178.5M339.4 176.7L341.3 174.2L342.5 171.7M341.8 174.5L341.8 177.1L342.3 180.0L344.7 180.4M343.3 177.9L345.2 180.7L347.2 181.4M346.7 177.1L347.7 178.9L346.1 181.6L347.1 184.1M352.7 170.7L356.0 170.8L358.8 170.9M352.0 166.0L354.6 165.0L356.3 165.5L358.1 163.9M352.6 167.6L349.9 166.4M356.2 166.8L358.0 165.9L361.1 166.2L362.5 164.6M360.5 158.8L362.4 159.7L364.3 158.9M356.6 156.4L358.2 157.4L360.3 157.1L362.9 158.9L363.8 161.6M357.8 154.4L360.6 152.9L363.0 151.4M357.5 151.0L357.8 152.6L356.9 154.8L355.2 155.0M358.7 153.5L361.5 154.2L363.1 151.5L366.4 151.2M361.9 152.3L363.1 150.8L365.1 149.0L366.8 150.0M362.1 148.2L360.8 149.8L358.4 151.4M365.2 147.9L366.9 149.8L366.1 151.3L364.4 151.3L362.9 149.4M367.4 148.6L365.5 148.8L363.0 147.6L361.1 147.2L359.8 145.9M366.6 147.1L366.9 149.5L365.0 151.3M368.8 151.2L371.6 149.4L373.6 149.8L376.5 149.7M381.2 151.3L378.9 151.1L377.4 151.6M381.5 150.0L383.0 147.8L381.5 145.2M384.3 148.6L384.8 145.3M384.7 149.2L386.2 147.7M392.2 142.9L394.6 144.2L396.5 143.6M396.8 142.9L399.0 142.5L399.9 139.2M397.1 138.2L398.8 138.7L400.4 139.7L401.6 138.7M397.6 140.8L395.7 140.9L393.0 141.0M400.2 141.8L398.2 140.3L397.0 141.1L394.3 139.2L392.8 140.1M407.1 138.8L410.2 138.3L411.2 139.3M409.7 139.7L411.3 138.5L411.4 137.1M408.9 134.1L409.6 132.6L411.9 132.7L413.5 133.6M409.4 129.9L406.7 131.7M405.6 126.1L405.7 128.7L406.3 130.2M406.6 126.5L403.9 127.0L401.7 125.6M408.3 125.4L408.2 126.9L409.8 129.1L412.2 131.5L412.7 133.1M410.7 124.6L410.5 122.9L411.5 119.9M416.0 121.4L413.1 121.7L411.5 119.9M417.8 119.9L415.2 120.6L412.2 122.0L411.6 125.2M418.9 118.3L419.0 115.6M418.7 116.7L421.4 114.6M421.3 116.0L420.4 117.6L418.9 118.3M423.8 117.2L423.2 118.6L421.8 119.2L421.8 122.2L420.5 125.2M427.7 118.5L429.0 117.8L430.3 115.9M430.0 118.3L430.9 120.3L432.5 122.0L435.1 121.9L437.1 124.2M430.8 118.4L429.7 121.1L429.9 122.8L432.0 124.5L432.6 125.9M429.7 109.8L430.7 107.6L433.8 108.0L436.8 106.9L438.1 107.4M433.0 106.8L430.9 105.8L429.6 106.6L430.1 109.2L430.3 112.4M438.9 106.8L437.7 110.0L438.8 111.5L437.9 113.3L435.7 115.1M441.1 104.7L439.5 102.7L436.3 101.6M437.1 101.3L440.0 103.0M437.4 107.0L440.0 106.1L441.5 106.8L441.4 108.4M445.2 101.7L445.9 99.6L447.7 98.3M447.4 100.4L446.5 99.2M450.3 97.4L451.0 99.3L449.3 101.3L448.3 102.8L445.2 103.1M451.4 102.8L454.0 100.7M452.3 101.8L450.4 102.6L449.2 103.7L447.7 103.6M445.7 110.7L446.2 108.5L447.7 108.2L448.9 105.8L450.9 104.8M451.8 104.3L448.8 104.5L445.9 105.6M452.3 115.6L451.5 114.2L452.8 112.4L454.7 109.9M448.6 114.6L447.6 115.9L448.1 117.9L446.5 118.7L444.8 117.6M449.0 118.1L448.4 116.1L450.0 114.8L452.2 112.8M446.8 120.0L445.6 118.5L445.8 115.4M443.5 121.4L442.9 122.8L441.4 125.0L442.5 126.5L442.3 128.2M442.4 123.4L441.0 124.2L439.0 126.9M442.4 125.1L442.1 123.5L443.6 121.4M441.8 129.3L439.4 131.5L440.4 133.8L440.8 135.7L440.0 137.9M439.9 135.4L442.1 134.4L441.8 131.7L444.1 129.4M441.4 138.4L442.9 141.3L442.3 143.5L441.7 144.8L442.6 146.8M441.5 139.8L441.1 142.6L440.5 145.5M446.3 145.7L448.8 144.8L450.6 144.1M456.2 143.2L453.3 145.0L451.7 143.8L449.9 142.6M453.7 136.3L454.7 137.5L457.0 139.1L458.3 141.0L460.1 140.9M457.4 135.4L457.3 133.0L456.4 130.8M455.9 134.2L458.8 136.0L459.8 137.8L462.9 138.3M457.4 131.9L457.0 133.5L459.2 136.0L462.5 135.2M460.1 130.1L458.6 132.3L455.8 131.3M462.1 126.3L460.5 125.4L459.9 122.5M461.1 121.8L461.2 119.3M465.8 122.2L465.5 119.9L464.2 119.0M471.6 110.8L471.2 112.5L470.9 114.2L470.6 117.2L472.0 119.8M475.2 108.6L476.8 109.8L478.6 112.2L480.5 113.7L480.9 115.1M472.4 105.6L470.2 107.8M473.2 102.4L472.3 103.8L471.3 105.3M474.6 99.9L476.9 101.7L477.7 104.0M473.0 98.4L470.9 99.6L471.2 101.3L471.6 103.4L473.0 104.1M475.3 100.3L474.8 97.0L473.9 94.5M474.9 96.0L472.4 96.9L471.5 98.6M482.9 94.8L480.8 93.8M484.9 102.1L487.8 100.7L488.1 98.6L486.0 96.7M485.0 97.6L486.3 99.5M484.0 103.4L484.1 106.1L483.8 107.7L482.2 108.7L480.9 110.6M491.5 110.7L491.8 107.9L493.2 107.4L494.5 107.9M478.5 114.6L477.6 116.4L477.5 118.3M478.6 119.8L476.9 120.5L474.7 118.7M487.2 125.6L484.0 124.7L483.3 123.2M490.9 117.2L493.4 119.2L495.8 120.7M483.2 111.6L480.8 111.9L479.9 113.5L476.8 113.8L476.0 116.1M493.4 108.9L496.5 108.6L498.5 109.4L499.2 111.6M495.0 105.7L495.5 103.2M500.1 102.9L502.0 105.5L501.0 107.4L499.8 109.5L497.9 111.6M505.5 107.2L506.7 108.7L506.3 110.1M510.3 110.7L513.2 111.0L514.9 108.5M511.1 110.8L513.7 112.5L513.5 114.1L511.3 115.6M513.3 113.5L514.9 112.0L517.3 110.0L520.6 110.9M517.4 111.7L515.4 111.3L514.2 109.8M520.0 114.7L519.8 112.2M520.7 115.2L522.2 115.6L523.8 117.3L523.8 118.7L523.8 121.3M523.8 114.0L526.3 115.7L527.7 116.3M524.8 116.2L526.7 118.8M521.7 118.0L520.7 119.5L517.8 119.5L517.2 117.6M524.6 117.6L525.7 120.6M524.2 121.8L525.4 119.4L526.1 116.3M523.1 122.3L520.6 120.9L517.6 120.5L516.1 122.6M521.3 122.4L523.3 122.9M515.8 122.7L517.9 124.6L517.5 126.1L516.3 128.2M518.6 127.4L516.8 128.0L513.8 127.5M512.5 127.5L511.9 130.7L510.8 132.1L508.4 132.7M515.3 127.3L514.7 125.4L513.3 122.6L511.0 122.1M512.5 129.4L511.5 131.5M511.6 139.1L512.5 140.2L514.0 141.1L516.8 142.7L516.9 144.9M507.2 136.4L505.0 137.2L503.5 136.0M504.1 137.1L505.5 137.5M502.6 137.0L501.0 136.1L498.9 138.1L498.2 139.5L496.8 141.4M497.0 137.5L499.5 138.2L502.1 138.3L504.8 137.2M497.1 129.4L498.1 128.3L497.3 126.4M501.4 130.8L499.5 131.1M500.3 134.7L501.9 135.7L502.8 138.7M507.4 130.4L508.6 129.5L510.3 126.6M508.3 132.1L508.3 129.7L507.1 126.8L505.6 127.1L503.6 126.1M511.6 130.7L510.0 128.4L509.1 126.2L510.0 124.3M510.7 138.0L509.2 140.9L506.4 142.1L505.0 143.7L504.9 145.2M512.4 139.3L509.1 139.0L507.0 138.1L504.2 138.0M514.7 142.3L513.9 143.8L511.5 145.1L510.4 148.2M517.8 144.0L514.9 144.0L512.8 145.4M520.5 142.2L522.6 142.6L524.4 144.6L525.8 146.6M523.9 141.9L525.7 142.3L527.7 142.4M525.0 146.5L525.9 144.1L527.5 143.3L528.7 142.1M527.3 143.4L526.4 141.4L523.9 140.6L522.3 141.4L522.7 143.7M525.6 143.7L524.3 145.2L525.3 146.9M529.3 146.0L531.8 144.4M529.2 148.3L530.8 146.2M531.6 151.4L528.7 149.6L525.7 149.3L524.8 150.7M528.6 149.3L525.7 150.0M525.8 147.1L526.3 144.7L525.7 143.2L523.8 142.3M199.2 637.3L198.4 635.6M201.8 639.2L199.7 637.4L197.8 637.8M191.7 628.6L190.6 629.4M184.1 592.4L184.2 595.0M185.0 603.5L185.2 601.9L185.1 600.1L186.6 598.2L189.5 597.4M175.7 612.5L173.4 611.4L171.8 612.8L171.4 615.3L173.9 617.4M173.5 621.9L174.7 621.2L177.1 620.9M142.7 638.9L142.3 636.8L141.7 634.7M143.4 642.8L142.1 644.3L139.1 644.6L137.7 642.7M134.3 648.3L134.2 650.9M114.0 660.7L111.0 661.8L108.8 663.8L106.5 662.6M95.6 664.7L98.2 663.3L100.4 664.2M86.0 661.9L88.0 661.3L90.4 659.5M83.5 660.3L85.0 659.6L85.0 656.9L84.5 654.5M74.6 640.4L74.4 637.5L75.8 635.6M72.6 637.9L71.0 636.4L68.8 635.1L68.8 632.5M71.0 634.9L72.8 634.1L75.3 633.1L75.8 630.4M69.6 633.7L71.5 635.2L73.0 636.6M64.9 633.4L65.6 632.0L67.9 631.1L68.6 628.0M68.8 630.7L67.6 628.9L66.4 628.0L66.4 625.3L66.4 623.0M68.9 630.3L72.0 629.5L73.1 628.0L71.4 625.3L69.0 625.1M64.4 626.4L64.1 623.7L66.5 622.3L68.9 624.6M65.7 624.0L67.5 625.1L69.8 623.5L70.8 621.6L73.2 620.7M65.7 622.8L68.0 622.5L69.7 620.1L71.8 618.9M70.6 619.7L73.4 621.0L75.6 623.2L77.1 622.6M72.7 618.3L71.9 615.4L69.7 615.1L69.0 611.8M72.3 617.6L71.1 619.6L71.5 621.2L73.4 623.0M68.0 609.6L69.6 607.4L71.8 606.9L72.7 604.4M67.0 608.6L69.4 610.9L71.0 613.4M64.8 601.9L63.8 599.9L61.5 599.2M64.6 605.2L65.0 603.4L66.4 602.5M66.1 599.6L67.4 600.8L69.3 599.7L70.4 597.9L73.2 597.9M64.7 596.9L63.8 594.4M68.3 596.0L69.5 595.1L69.3 591.7L67.6 591.2M70.2 585.5L70.3 588.6L71.5 590.0M70.0 582.1L68.2 581.8L67.2 580.4L67.8 577.8L70.5 576.8M68.9 581.6L66.0 580.8L65.0 582.0L65.7 584.4M66.2 579.4L67.5 577.0L68.9 576.7L70.9 578.3L73.6 579.3M70.4 577.1L71.8 576.3L74.3 578.5L76.2 580.9M68.3 574.6L70.7 574.4L71.3 572.7M67.0 570.2L69.9 570.5L72.3 570.5M68.3 568.6L69.2 565.8L68.2 562.8M67.2 567.4L69.1 568.2L69.1 570.4L67.2 572.5L68.2 574.1M71.3 557.1L71.6 559.7L71.0 561.7L71.0 564.1M68.9 554.8L69.4 552.5L71.6 550.6M71.3 554.6L68.5 552.9M72.9 550.8L73.6 552.7L73.3 554.3L72.8 556.0L70.7 556.8M69.6 543.8L68.9 546.2M68.6 542.4L70.2 544.7L71.9 545.8M67.6 538.6L68.3 536.3L67.3 533.3M72.7 533.2L74.5 535.3L73.7 537.4M70.5 529.0L72.8 527.0L73.6 525.1L75.5 522.7L78.2 522.6M74.2 529.3L75.7 531.5L77.3 532.7L77.6 535.6M72.2 521.7L71.4 518.4M73.7 521.2L75.6 521.1L77.2 520.7L79.7 518.7M73.5 510.4L74.5 513.5L74.7 515.9L75.8 518.4L75.7 519.9M73.2 509.9L75.7 508.3M73.0 514.0L73.2 511.7L73.8 509.7M74.1 513.5L72.8 511.3M80.0 509.3L81.4 509.7L83.1 509.5L84.5 507.6M81.7 507.5L81.0 506.0L79.8 503.2M82.2 496.2L84.2 495.0L84.0 492.1L85.0 489.8L84.0 488.6M81.7 495.5L84.4 497.0L85.5 499.1M79.0 493.1L78.0 494.6L76.8 495.9M78.4 495.3L76.5 495.6M80.0 491.6L79.5 493.4L78.3 495.9L79.7 497.8M84.4 485.0L85.0 486.4L85.4 488.0L86.7 489.6L88.7 489.5M87.8 481.9L89.2 478.9L90.5 478.0L90.4 475.7M93.7 475.9L90.9 475.7L89.2 476.4M93.3 473.8L90.1 474.1L87.7 475.9M90.2 471.7L91.7 472.4L94.6 473.7L95.5 475.3M97.5 471.9L94.7 472.6L94.3 474.1M103.5 466.3L106.0 466.3L108.0 465.4L111.1 466.6L112.2 467.7M104.4 465.7L102.2 465.4M108.4 466.5L109.9 467.1L111.8 469.1L113.2 469.3M110.4 464.9L109.9 466.3L111.8 467.5L113.9 466.5M113.5 461.1L115.0 461.4L116.8 463.2M114.0 457.8L111.6 458.8L110.9 461.6L108.1 463.0M118.6 455.6L118.7 458.4L121.7 459.4M123.0 454.9L120.1 453.8L118.4 454.3L116.3 453.8L115.1 454.9M122.0 455.1L123.9 452.4L126.3 451.9M123.1 452.2L121.6 450.4L119.8 451.0M124.6 452.9L124.4 454.5L124.0 456.1L123.8 458.5M132.1 448.2L131.5 446.1M132.1 448.0L131.6 446.5M133.7 447.4L134.6 449.4L136.9 449.5M137.0 449.7L134.3 450.8L132.9 450.3M142.2 448.4L139.1 447.3L138.3 445.5M141.6 442.3L139.4 444.1L137.8 444.9L137.2 446.4L138.9 448.4M146.0 443.9L148.7 445.5L150.4 448.4L152.6 450.7M149.0 441.3L150.4 442.0L153.2 441.7M156.1 440.6L156.9 439.3L157.9 437.0L159.3 434.4L159.7 432.8M153.9 432.8L151.6 431.9M156.4 432.5L158.4 433.4L160.3 433.3L162.2 435.6M153.7 429.8L152.4 429.1L150.3 431.3M151.5 428.9L151.0 431.7M154.5 429.5L152.1 427.6M158.3 428.9L156.0 429.3L154.3 427.9L152.3 428.6L150.8 428.8M161.2 427.7L161.5 429.1L160.1 431.8M164.2 427.1L163.6 425.7L164.0 423.1M166.7 427.7L164.2 425.6L161.8 426.6L159.5 428.4M170.7 420.7L169.2 417.9L168.9 416.2M171.7 414.5L171.3 417.2L170.9 418.6L168.2 419.0L165.6 419.9M168.5 416.9L170.2 418.3L172.6 420.5M167.3 419.5L165.4 419.5L163.9 420.2M174.9 423.7L173.6 422.3L171.7 423.0L170.3 421.6M175.7 423.6L177.2 425.5L178.7 426.9L180.6 426.6L180.9 424.6M183.6 426.9L181.7 427.5L181.2 429.3L179.9 431.3M185.2 427.6L185.2 430.1L184.4 432.7M186.7 420.9L188.0 421.6L190.7 421.7M189.4 417.6L186.9 419.7L186.6 421.4M195.0 416.1L197.7 414.8L198.0 412.2L196.8 410.4L198.2 408.6M196.7 411.0L200.0 411.0L202.3 412.5M200.2 408.2L200.6 405.0L202.2 402.3L202.4 400.0L203.2 397.6M198.8 403.0L201.0 402.5L203.3 401.5L203.5 399.5M201.5 404.1L199.8 401.6M205.0 402.4L206.1 400.0L204.7 397.1M207.3 398.9L205.3 398.5L202.4 399.4M211.9 395.0L212.0 396.6L210.4 397.9M213.9 393.2L214.4 395.9L217.1 397.4L220.3 397.9M217.8 390.2L215.7 391.4L212.5 391.1M216.5 385.9L217.7 383.7L221.0 383.3M223.4 382.8L226.4 382.9L228.9 383.3M225.1 381.3L223.2 383.8L221.3 383.6L220.2 384.5L218.9 385.2M222.2 370.3L218.9 369.7M219.1 371.9L222.0 371.9L223.6 374.0M219.6 373.2L216.9 371.3M225.8 375.3L223.9 374.2L224.3 371.8L223.5 370.5M220.8 380.9L221.6 383.7L220.8 385.0M220.4 376.5L221.4 375.2L219.9 372.8L220.6 371.5L221.5 369.6M218.7 370.5L216.6 371.8M217.8 371.0L220.2 373.3L221.3 374.4M218.5 372.0L216.5 374.2M220.6 372.3L223.1 374.2L225.2 374.0M222.3 370.3L221.1 368.6M224.3 370.2L227.0 371.4L228.7 370.8M225.3 373.7L225.6 375.4L223.8 377.8L221.9 378.9M231.7 370.2L231.7 372.6L233.1 374.9M230.3 365.4L233.3 366.0L233.5 368.4L231.6 369.5M236.2 365.3L233.8 364.2M243.3 362.4L245.1 361.4L246.3 359.5L248.1 358.4M241.7 358.6L243.1 361.5L245.4 363.0L248.4 363.0L250.2 361.2M242.4 358.2L245.4 358.5L246.5 356.9L245.3 354.0L243.3 353.2M244.0 353.2L242.7 355.1L242.9 358.3L243.5 361.0M246.0 352.2L243.4 353.0L242.2 355.2L241.4 356.5M248.2 349.2L250.3 348.1L252.9 347.1L255.6 347.1L258.7 347.6M246.4 341.8L249.3 342.0L250.9 342.7L254.1 343.3L256.3 343.8M248.6 341.4L247.5 342.8L244.5 342.1M248.7 338.3L249.3 340.5L251.7 342.2M249.5 333.7L250.4 334.8L251.9 335.1M254.5 333.8L255.5 331.7L256.8 328.7L257.3 326.5L259.1 325.0M257.0 330.8L259.1 331.8L262.0 333.0M249.6 325.3L252.1 324.1L252.6 322.5L249.9 320.7M252.0 321.5L251.2 323.7M255.9 318.0L257.3 316.5L258.0 315.0M256.7 313.9L257.2 315.5L257.8 317.5L258.5 319.0L257.4 320.6M261.8 314.3L263.8 312.8L263.5 311.0L261.5 310.4M263.9 305.7L266.2 305.9L269.1 304.6L269.0 302.1L269.7 300.1M263.3 308.4L265.2 306.4L265.7 303.3M263.3 305.8L266.3 307.1L266.1 309.0L265.7 312.3L264.9 314.2M269.1 299.1L269.8 300.5L268.9 302.0M266.9 296.7L269.3 295.4L270.3 294.2L268.8 292.0M271.6 294.9L273.6 295.0L275.1 297.7L275.2 300.5M274.9 290.8L275.2 288.4L274.6 285.8L275.2 284.0M275.4 288.7L273.3 289.0L271.8 287.9M272.2 289.9L272.4 288.5L270.4 287.3M275.4 288.9L272.3 289.2L270.1 291.0M278.9 284.0L276.1 284.6L273.5 286.2M282.3 282.4L280.6 282.8L279.6 281.3M284.4 281.8L284.1 284.9L284.1 287.7L283.8 289.1M285.3 276.2L287.5 275.3L289.2 277.2L292.3 277.7L292.9 279.3M286.9 276.5L287.5 274.9L288.5 273.2L291.5 273.9L294.1 274.4M289.5 275.5L286.3 276.4L284.4 276.3M292.9 274.9L291.3 274.4L289.3 274.5L288.4 275.8M299.7 263.8L298.5 266.0L298.7 267.9M302.0 263.0L305.0 264.0L308.0 262.8L310.3 261.4M301.9 260.9L302.4 259.1L305.2 257.8M297.2 253.2L295.8 250.5L296.1 248.7M296.7 250.2L294.6 250.7M298.7 249.6L300.2 251.0L303.3 249.8L305.2 250.8L306.2 252.4M303.8 243.3L300.8 242.1M307.0 243.1L304.1 244.3L300.9 244.3L300.3 242.7M308.1 239.6L306.9 238.3L304.8 237.1M307.6 237.4L304.7 237.6M306.4 238.7L306.2 240.7L308.3 242.4L309.3 243.8M308.4 237.8L310.3 237.2L311.9 237.4L314.1 238.5M310.8 238.8L312.9 240.4L312.4 243.4M315.6 235.4L315.3 238.2L312.9 238.9L310.5 239.9M314.5 233.5L316.2 234.6L318.7 234.3M316.4 231.7L318.4 229.3L319.4 228.1L320.2 226.5M312.7 224.5L314.6 224.3L316.3 221.5M314.8 225.2L316.2 226.5L315.3 228.9L317.7 231.2L319.3 232.8M312.4 231.3L311.3 234.0L309.2 234.3M312.0 224.7L315.0 223.9L315.3 220.8M301.9 222.3L304.3 222.8L306.5 222.7M300.9 225.4L301.7 222.9L300.4 221.8L298.4 222.2M298.0 223.5L299.6 222.2L302.0 223.8M296.7 222.9L298.8 224.2L301.1 223.3M294.2 222.6L296.2 222.8L298.4 222.7L300.6 223.4L302.1 221.2M292.3 226.1L289.2 225.0L287.4 224.4L287.2 222.8M290.0 227.5L291.8 227.1L293.4 225.8M288.6 226.0L291.3 227.2L293.4 226.6L293.9 225.1L295.0 223.3M287.8 230.0L289.2 229.4L289.0 226.8M284.7 230.0L285.6 228.2L286.6 226.6L288.0 226.1L289.1 227.1M278.4 232.8L277.3 229.8M276.2 231.1L273.4 232.1L271.0 231.2M273.3 233.6L274.9 230.7" fill="none" stroke="#e2e2e2" stroke-width="1.15" stroke-linejoin="round" stroke-linecap="round"/><path d="M289.2 220.4L288.4 219.6L289.1 218.0L289.7 219.0ZM292.6 217.5L291.3 216.9L290.8 215.8L292.3 215.1L294.1 215.0L294.0 216.5ZM293.3 203.9L291.9 204.2L291.9 202.9L293.3 202.8ZM295.0 201.3L295.3 201.7L295.0 202.5L294.4 202.7L294.0 202.4L294.3 201.7ZM301.2 192.6L303.7 192.3L303.8 193.6L301.4 194.4ZM305.4 195.2L304.4 195.9L303.6 194.7L304.3 194.0ZM313.8 198.7L312.2 198.5L312.1 196.8L313.3 195.5L315.1 196.0L315.2 197.9ZM317.1 196.6L317.5 194.9L319.3 194.7L319.3 196.3ZM327.9 186.5L326.8 187.8L325.7 188.1L325.2 187.1L326.6 185.8L327.8 185.4ZM327.8 180.8L327.4 179.5L328.6 179.2L329.0 180.4ZM329.4 179.4L330.3 179.4L330.4 180.2L329.9 180.5L329.0 180.6L328.9 179.8ZM344.6 167.7L345.3 168.3L344.5 169.0L343.5 168.6L343.6 167.8ZM355.2 144.0L356.5 143.0L357.7 144.6L357.1 146.3L355.5 145.7ZM365.1 140.3L365.5 141.0L365.2 141.9L364.3 141.9L364.0 141.1L364.3 140.4ZM371.5 140.7L372.4 141.7L371.7 143.2L370.2 142.4L369.8 140.8ZM372.8 145.2L372.7 144.1L373.8 143.7L373.9 144.9ZM383.8 141.7L385.1 139.4L386.9 140.9L386.3 143.1ZM395.0 136.1L394.1 138.0L392.4 136.9L391.8 134.8L394.0 134.5ZM404.1 136.5L402.7 136.8L401.4 136.5L402.2 135.7L403.2 135.3L404.1 135.6ZM426.5 107.8L426.3 110.7L423.3 110.2L424.1 107.7ZM426.2 104.7L426.0 103.5L427.4 102.9L427.3 104.0ZM444.8 98.4L443.4 98.5L442.7 97.5L443.4 96.3L444.8 97.2ZM453.9 92.1L455.3 91.3L455.8 92.5L455.3 94.4L454.1 93.6ZM456.7 97.7L455.6 97.3L456.0 96.6L457.0 96.1L458.0 96.3L457.9 97.1ZM462.6 107.6L461.2 108.3L460.9 106.7L462.1 106.4ZM458.0 116.2L457.4 115.1L458.2 113.9L458.6 115.0ZM446.2 141.9L446.9 142.2L446.5 142.7L445.5 143.0L445.2 142.5L445.4 142.1ZM447.6 137.5L448.9 136.2L449.9 138.8L448.6 139.5ZM453.9 126.7L453.4 125.6L454.7 125.3L456.2 125.7L455.8 126.5ZM463.1 114.0L463.0 114.9L461.7 114.7L460.5 114.1L460.5 113.0L462.1 113.1ZM477.7 88.9L479.4 89.1L479.4 90.7L477.8 91.3L476.4 90.7L476.2 89.2ZM484.9 92.7L486.1 92.4L487.0 92.7L487.6 93.4L486.5 94.0L485.5 93.4ZM484.6 115.8L483.6 115.0L483.9 113.6L485.3 113.3L486.3 114.2L486.5 115.9ZM498.0 98.4L497.8 99.0L497.4 99.5L497.0 99.2L497.3 98.3L497.8 97.7ZM528.7 111.2L529.8 111.7L529.7 112.9L528.4 112.5ZM532.4 138.2L530.2 139.5L529.2 137.5L531.6 136.8ZM536.6 150.5L535.8 150.5L535.4 149.5L536.1 149.1ZM177.8 626.0L178.2 626.0L178.5 626.5L177.9 627.3L177.5 627.1L177.3 626.6ZM89.7 666.3L88.6 668.0L86.8 667.1L86.2 665.2L87.5 664.4L88.8 664.7ZM77.5 651.8L78.9 652.9L79.4 654.0L77.9 654.8L75.9 654.4L75.5 652.8ZM60.8 629.2L60.0 629.8L58.9 629.3L59.5 628.5ZM59.0 608.0L60.2 607.8L60.4 608.9L59.4 609.3ZM57.3 597.7L59.4 597.0L59.8 598.5L57.6 598.8ZM63.2 588.9L63.7 588.7L64.2 589.2L64.1 590.0L63.5 589.9L63.0 589.5ZM63.5 557.9L62.3 556.6L62.5 554.7L63.7 554.3L64.0 556.5ZM65.5 541.1L63.7 541.8L62.4 541.0L63.3 539.8L64.6 539.4L65.5 540.0ZM65.1 535.9L63.7 537.8L62.5 536.7L63.9 534.6ZM62.6 534.4L62.4 535.2L61.5 534.8L61.7 534.1ZM68.3 526.1L68.2 526.5L67.4 526.5L66.8 526.0L67.7 525.8ZM67.3 517.5L66.3 519.0L65.1 517.3L66.4 516.0ZM65.7 519.7L66.9 519.6L67.5 520.5L66.8 521.7L65.2 520.8ZM66.3 523.1L66.9 522.7L67.2 523.4L67.3 524.3L66.8 524.6L66.3 524.2ZM75.0 500.0L76.0 499.2L77.1 499.9L77.1 501.0L75.9 500.8ZM75.1 489.1L73.6 488.6L73.2 487.5L74.3 487.7ZM76.4 484.0L76.9 484.9L76.4 485.4L75.3 485.3L74.7 484.3L75.4 483.8ZM79.6 478.2L79.6 479.1L78.7 479.1L77.8 478.9L78.0 478.1L78.8 477.8ZM126.7 447.6L126.0 448.3L124.8 446.9L124.4 445.3L125.9 445.9ZM143.9 439.2L143.2 438.8L143.4 437.7L144.4 436.9L144.9 437.6L144.9 438.6ZM148.2 435.3L148.8 437.0L146.7 438.0L146.0 435.7ZM152.2 423.1L150.9 424.5L149.9 424.2L150.8 423.0ZM175.1 417.3L176.5 417.9L176.7 419.1L175.4 419.8L174.1 418.6ZM188.3 412.7L186.8 412.8L187.3 410.8L189.1 410.6ZM192.9 406.6L193.4 407.6L192.6 408.4L191.4 407.9L191.3 406.9L192.0 406.4ZM192.9 405.9L192.3 404.5L193.9 403.7L194.6 405.0L194.1 406.0ZM203.5 391.0L205.1 391.3L204.1 392.7L202.4 392.6ZM214.7 378.6L214.5 376.4L216.3 375.6L217.8 377.1L216.4 378.5ZM230.3 361.9L230.7 360.5L232.0 360.7L232.4 361.8L231.6 362.5ZM246.2 333.4L245.0 334.4L244.0 334.2L243.6 333.1L245.2 332.6ZM248.4 328.5L247.4 327.0L247.9 325.2L250.1 326.0L250.4 328.3ZM249.9 316.0L249.5 316.8L248.9 317.2L248.6 316.7L249.1 316.0L249.6 315.4ZM259.1 310.2L258.7 311.2L258.0 311.0L257.8 309.5L258.5 309.4ZM258.0 308.9L257.5 308.4L258.5 307.9L259.0 308.4ZM261.4 299.6L259.3 300.3L258.5 299.1L259.2 297.7L261.1 298.1ZM264.7 289.2L266.2 290.0L265.4 292.1L263.3 292.2L262.7 290.8ZM267.5 289.6L268.2 290.0L267.7 290.8L266.7 291.3L265.8 291.1L266.0 290.0ZM280.3 275.6L281.4 275.9L281.9 276.6L281.6 277.5L280.2 277.1L279.8 276.2ZM290.5 266.0L288.9 266.5L288.0 265.8L289.4 264.0L290.9 264.1ZM291.5 264.1L290.0 263.0L290.9 262.5L292.2 263.4ZM291.8 258.9L291.7 257.6L293.0 257.0L294.0 258.3L292.9 259.1ZM292.3 253.1L292.0 254.3L291.0 253.5L290.6 252.3L291.0 251.2L292.1 251.8ZM293.0 248.5L291.0 249.6L289.6 248.3L291.2 246.9ZM282.1 236.2L280.5 235.7L280.6 233.4L282.5 234.1ZM270.9 239.7L269.7 238.5L270.2 237.1L271.9 237.4L271.9 238.8ZM270.6 238.2L270.9 237.3L272.0 237.7L272.8 239.0L272.1 239.4L271.2 239.4ZM267.3 244.0L267.6 242.7L269.2 241.9L269.4 242.9L268.7 244.1Z" fill="#777" stroke="#e2e2e2" stroke-width="1.1" stroke-linejoin="round"/>
<g transform="translate(687.2 13.96) scale(0.8) translate(-687 -13.96)"><path d="M689.0 9.46l5 1l2 4l-3 1l-1 4l-2 -4l-2 -3z" fill="#85583c" opacity="0.9"/></g><g transform="translate(687.2 31.08) scale(0.8) translate(-687 -31.08)"><path d="M689.0 26.580000000000002l5 1l2 4l-3 1l-1 4l-2 -4l-2 -3z" fill="#747474" opacity="0.9"/><rect x="693.0" y="31.6" width="4" height="3" fill="#747474" /></g><g transform="translate(687.2 48.20) scale(0.8) translate(-687 -48.20)"><path d="M689.0 43.7l5 1l2 4l-3 1l-1 4l-2 -4l-2 -3z" fill="#747474" opacity="0.9"/><rect x="693.0" y="48.7" width="4" height="3" fill="#747474" /></g><g transform="translate(687.2 67.00) scale(0.8) translate(-687 -67.00)"><rect x="686.6" y="60.3" width="13.4" height="13.2" fill="#8a6236" /><rect x="687.9" y="61.5" width="3.9" height="3.8" fill="#ffffff" /><rect x="691.8" y="61.5" width="3.9" height="3.8" fill="#000000" /><rect x="695.7" y="61.5" width="3.9" height="3.8" fill="#ffffff" /><rect x="687.9" y="65.3" width="3.9" height="3.8" fill="#000000" /><rect x="691.8" y="65.3" width="3.9" height="3.8" fill="#ffffff" /><rect x="695.7" y="65.3" width="3.9" height="3.8" fill="#000000" /><rect x="687.9" y="69.1" width="3.9" height="3.8" fill="#ffffff" /><rect x="691.8" y="69.1" width="3.9" height="3.8" fill="#000000" /><rect x="695.7" y="69.1" width="3.9" height="3.8" fill="#ffffff" /></g><polygon points="821.09,66.77 821.05,67.67 819.51,68.08 819.24,68.65 819.91,70.09 819.24,70.69 817.87,69.89 817.28,70.10 816.73,71.59 815.83,71.55 815.42,70.01 814.85,69.74 813.41,70.41 812.81,69.74 813.61,68.37 813.40,67.78 811.91,67.23 811.95,66.33 813.49,65.92 813.76,65.35 813.09,63.91 813.76,63.31 815.13,64.11 815.72,63.90 816.27,62.41 817.17,62.45 817.58,63.99 818.15,64.26 819.59,63.59 820.19,64.26 819.39,65.63 819.60,66.22" fill="#151515"/><circle cx="816.5" cy="67.0" r="1.5" fill="#505050"/><g transform="translate(687.2 84.12) scale(0.8) translate(-687 -84.12)"><path d="M688.0 80.6L696.0 80.6" stroke="#85583c" stroke-width="1" fill="none"/><path d="M688.0 84.1L698.0 84.1" stroke="#747474" stroke-width="1.4" fill="none"/><path d="M688.0 87.6L698.0 87.6" stroke="#747474" stroke-width="1.4" fill="none"/><circle cx="697.0" cy="80.6" r="1.2" fill="#5a7a9a" /></g><polygon points="821.09,83.89 821.05,84.79 819.51,85.20 819.24,85.77 819.91,87.21 819.24,87.81 817.87,87.01 817.28,87.22 816.73,88.71 815.83,88.67 815.42,87.13 814.85,86.86 813.41,87.53 812.81,86.86 813.61,85.49 813.40,84.90 811.91,84.35 811.95,83.45 813.49,83.04 813.76,82.47 813.09,81.03 813.76,80.43 815.13,81.23 815.72,81.02 816.27,79.53 817.17,79.57 817.58,81.11 818.15,81.38 819.59,80.71 820.19,81.38 819.39,82.75 819.60,83.34" fill="#626262"/><circle cx="816.5" cy="84.12" r="1.5" fill="#505050"/><g transform="translate(687.2 101.24) scale(0.8) translate(-687 -101.24)"><path d="M689.0 98.74000000000001a4.5 3 0 0 1 9 0" stroke="#85583c" fill="none"/><path d="M688.0 100.7L699.0 100.7" stroke="#747474" stroke-width="1.4" fill="none"/><path d="M693.5 101.7L693.5 106.7" stroke="#747474" stroke-width="1.2" fill="none"/></g><polygon points="821.09,101.01 821.05,101.91 819.51,102.32 819.24,102.89 819.91,104.33 819.24,104.93 817.87,104.13 817.28,104.34 816.73,105.83 815.83,105.79 815.42,104.25 814.85,103.98 813.41,104.65 812.81,103.98 813.61,102.61 813.40,102.02 811.91,101.47 811.95,100.57 813.49,100.16 813.76,99.59 813.09,98.15 813.76,97.55 815.13,98.35 815.72,98.14 816.27,96.65 817.17,96.69 817.58,98.23 818.15,98.50 819.59,97.83 820.19,98.50 819.39,99.87 819.60,100.46" fill="#626262"/><circle cx="816.5" cy="101.24000000000001" r="1.5" fill="#505050"/><g transform="translate(687.2 118.36) scale(0.8) translate(-687 -118.36)"><path d="M693.5 111.9L693.5 124.9" stroke="#747474" stroke-width="1.2" fill="none"/><rect x="690.0" y="114.9" width="2" height="2" fill="#85583c" /><rect x="695.0" y="114.9" width="2" height="2" fill="#85583c" /><rect x="690.0" y="120.9" width="2" height="2" fill="#85583c" /><rect x="695.0" y="120.9" width="2" height="2" fill="#85583c" /></g><g transform="translate(687.2 137.16) scale(0.8) translate(-687 -137.16)"><path d="M691.0 132.7L691.0 141.7" stroke="#606060" stroke-width="1.5" fill="none"/><path d="M696.0 132.7L696.0 141.7" stroke="#606060" stroke-width="1.5" fill="none"/></g><g transform="translate(687.2 154.28) scale(0.8) translate(-687 -154.28)"><rect x="688.5" y="149.28" width="10" height="10" fill="none" stroke="#747474" stroke-width="1"/><path d="M690.0 151.8L696.0 157.8" stroke="#85583c" stroke-width="1" fill="none"/><path d="M696.0 151.8L690.0 157.8" stroke="#85583c" stroke-width="1" fill="none"/></g><g transform="translate(687.2 171.40) scale(0.8) translate(-687 -171.40)"><rect x="688.5" y="166.4" width="10" height="10" fill="none" stroke="#747474" stroke-width="1"/><path d="M690.0 168.9L696.0 174.9" stroke="#85583c" stroke-width="1" fill="none"/><path d="M696.0 168.9L690.0 174.9" stroke="#85583c" stroke-width="1" fill="none"/></g><g transform="translate(687.2 190.20) scale(0.8) translate(-687 -190.20)"><path d="M688.0 184.7L699.0 195.7" stroke="#8a5a3a" stroke-width="1" fill="none"/><path d="M699.0 184.7L688.0 195.7" stroke="#8a5a3a" stroke-width="1" fill="none"/><circle cx="693.5" cy="190.2" r="1.3" fill="#85583c" /></g><g transform="translate(687.2 207.32) scale(0.8) translate(-687 -207.32)"><rect x="686.5" y="200.3" width="14" height="14" fill="#111" /><path d="M688.0 201.8L699.0 212.8" stroke="#ffffff" stroke-width="1.3" fill="none"/><path d="M699.0 201.8L688.0 212.8" stroke="#ffffff" stroke-width="1.3" fill="none"/><rect x="687.5" y="201.3" width="3" height="3" fill="#fff" /><rect x="696.5" y="201.3" width="3" height="3" fill="#fff" /><rect x="687.5" y="210.3" width="3" height="3" fill="#fff" /><rect x="696.5" y="210.3" width="3" height="3" fill="#fff" /><circle cx="693.5" cy="207.3" r="1.6" fill="#e08030" /></g><g transform="translate(687.2 224.44) scale(0.8) translate(-687 -224.44)"><path d="M688.0 218.9L699.0 229.9" stroke="#757575" stroke-width="1" fill="none"/><path d="M699.0 218.9L688.0 229.9" stroke="#757575" stroke-width="1" fill="none"/><circle cx="693.5" cy="224.4" r="1.3" fill="#85583c" /></g><g transform="translate(687.2 243.24) scale(0.8) translate(-687 -243.24)"><rect x="688.0" y="241.7" width="4" height="4" fill="#85583c" /><rect x="695.0" y="241.7" width="4" height="4" fill="#747474" /><path d="M693.5 237.7L693.5 248.7" stroke="#666" stroke-width="1" fill="none"/></g><g transform="translate(687.2 260.36) scale(0.8) translate(-687 -260.36)"><rect x="691.5" y="254.9" width="4" height="4" fill="#747474" /><rect x="691.5" y="261.9" width="4" height="4" fill="#85583c" /><path d="M688.0 260.4L699.0 260.4" stroke="#666" stroke-width="1" fill="none"/></g><g transform="translate(687.2 277.48) scale(0.8) translate(-687 -277.48)"><path d="M688.0 277.5L699.0 277.5" stroke="#747474" stroke-width="1.3" fill="none"/><rect x="689.0" y="274.0" width="3" height="2" fill="#747474" /><rect x="695.0" y="280.0" width="3" height="2" fill="#666" /><circle cx="693.0" cy="277.5" r="1.2" fill="#85583c" /></g><g transform="translate(687.2 294.60) scale(0.8) translate(-687 -294.60)"><path d="M688.0 294.6L699.0 294.6" stroke="#747474" stroke-width="1.3" fill="none"/><rect x="689.0" y="291.1" width="3" height="2" fill="#747474" /><rect x="695.0" y="297.1" width="3" height="2" fill="#666" /><circle cx="693.0" cy="294.6" r="1.2" fill="#85583c" /></g><polygon points="821.09,294.37 821.05,295.27 819.51,295.68 819.24,296.25 819.91,297.69 819.24,298.29 817.87,297.49 817.28,297.70 816.73,299.19 815.83,299.15 815.42,297.61 814.85,297.34 813.41,298.01 812.81,297.34 813.61,295.97 813.40,295.38 811.91,294.83 811.95,293.93 813.49,293.52 813.76,292.95 813.09,291.51 813.76,290.91 815.13,291.71 815.72,291.50 816.27,290.01 817.17,290.05 817.58,291.59 818.15,291.86 819.59,291.19 820.19,291.86 819.39,293.23 819.60,293.82" fill="#626262"/><circle cx="816.5" cy="294.6" r="1.5" fill="#505050"/><g transform="translate(687.2 311.72) scale(0.8) translate(-687 -311.72)"><circle cx="691.0" cy="307.2" r="1" fill="#85583c" /><circle cx="696.0" cy="307.2" r="1" fill="#85583c" /><circle cx="691.0" cy="311.2" r="1" fill="#85583c" /><circle cx="696.0" cy="311.2" r="1" fill="#85583c" /><circle cx="691.0" cy="315.2" r="1" fill="#85583c" /><circle cx="696.0" cy="315.2" r="1" fill="#85583c" /></g><polygon points="821.09,311.49 821.05,312.39 819.51,312.80 819.24,313.37 819.91,314.81 819.24,315.41 817.87,314.61 817.28,314.82 816.73,316.31 815.83,316.27 815.42,314.73 814.85,314.46 813.41,315.13 812.81,314.46 813.61,313.09 813.40,312.50 811.91,311.95 811.95,311.05 813.49,310.64 813.76,310.07 813.09,308.63 813.76,308.03 815.13,308.83 815.72,308.62 816.27,307.13 817.17,307.17 817.58,308.71 818.15,308.98 819.59,308.31 820.19,308.98 819.39,310.35 819.60,310.94" fill="#626262"/><circle cx="816.5" cy="311.72" r="1.5" fill="#505050"/><g transform="translate(687.2 328.84) scale(0.8) translate(-687 -328.84)"><circle cx="691.0" cy="324.3" r="1" fill="#85583c" /><circle cx="691.0" cy="328.3" r="1" fill="#85583c" /><circle cx="691.0" cy="332.3" r="1" fill="#85583c" /></g><g transform="translate(687.2 345.96) scale(0.8) translate(-687 -345.96)"><circle cx="691.0" cy="341.5" r="1" fill="#85583c" /><circle cx="696.0" cy="341.5" r="1" fill="#85583c" /><circle cx="691.0" cy="345.5" r="1" fill="#85583c" /><circle cx="696.0" cy="345.5" r="1" fill="#85583c" /><circle cx="691.0" cy="349.5" r="1" fill="#85583c" /><circle cx="696.0" cy="349.5" r="1" fill="#85583c" /><path d="M693.5 340.5L693.5 351.5" stroke="#747474" stroke-width="1" fill="none"/></g><g transform="translate(687.2 363.08) scale(0.8) translate(-687 -363.08)"><rect x="687.0" y="356.6" width="13" height="13" fill="#62524a" /><circle cx="689.5" cy="359.1" r="0.9" fill="#80583e" /><circle cx="693.5" cy="359.1" r="0.9" fill="#80583e" /><circle cx="697.5" cy="359.1" r="0.9" fill="#80583e" /><circle cx="689.5" cy="363.1" r="0.9" fill="#80583e" /><circle cx="693.5" cy="363.1" r="0.9" fill="#80583e" /><circle cx="697.5" cy="363.1" r="0.9" fill="#80583e" /><circle cx="689.5" cy="367.1" r="0.9" fill="#80583e" /><circle cx="693.5" cy="367.1" r="0.9" fill="#80583e" /><circle cx="697.5" cy="367.1" r="0.9" fill="#80583e" /></g><g transform="translate(687.2 380.20) scale(0.8) translate(-687 -380.20)"><rect x="687.0" y="373.7" width="13" height="13" fill="#62524a" /><circle cx="689.5" cy="376.2" r="0.9" fill="#80583e" /><circle cx="693.5" cy="376.2" r="0.9" fill="#80583e" /><circle cx="697.5" cy="376.2" r="0.9" fill="#80583e" /><circle cx="689.5" cy="380.2" r="0.9" fill="#80583e" /><circle cx="693.5" cy="380.2" r="0.9" fill="#80583e" /><circle cx="697.5" cy="380.2" r="0.9" fill="#80583e" /><circle cx="689.5" cy="384.2" r="0.9" fill="#80583e" /><circle cx="693.5" cy="384.2" r="0.9" fill="#80583e" /><circle cx="697.5" cy="384.2" r="0.9" fill="#80583e" /></g><g transform="translate(687.2 399.00) scale(0.8) translate(-687 -399.00)"><rect x="687.0" y="392.5" width="9" height="9" fill="#6a5348" /><rect x="691.5" y="397.00000000000006" width="8" height="8" fill="none" stroke="#666"/></g><g transform="translate(687.2 416.12) scale(0.8) translate(-687 -416.12)"><circle cx="691.0" cy="412.6" r="0.8" fill="#747474" /><circle cx="694.0" cy="412.6" r="0.8" fill="#747474" /><circle cx="697.0" cy="412.6" r="0.8" fill="#747474" /><circle cx="691.0" cy="416.1" r="0.8" fill="#747474" /><circle cx="694.0" cy="416.1" r="0.8" fill="#747474" /><circle cx="697.0" cy="416.1" r="0.8" fill="#747474" /><circle cx="691.0" cy="419.6" r="0.8" fill="#747474" /><circle cx="694.0" cy="419.6" r="0.8" fill="#747474" /><circle cx="697.0" cy="419.6" r="0.8" fill="#747474" /><path d="M690.0 410.6L698.0 410.6" stroke="#747474" stroke-width="1" fill="none"/></g><g transform="translate(687.2 433.24) scale(0.8) translate(-687 -433.24)"><rect x="688.0" y="427.7" width="7" height="7" fill="#7e5b45" /><rect x="689.5" y="429.2" width="4" height="4" fill="#87634c" /><circle cx="696.5" cy="436.24000000000007" r="2.6" fill="none" stroke="#747474" stroke-width="1.1"/></g><g transform="translate(687.2 450.36) scale(0.8) translate(-687 -450.36)"><rect x="688.0" y="444.9" width="7" height="7" fill="#7e5b45" /><rect x="689.5" y="446.4" width="4" height="4" fill="#87634c" /><path d="M697.5 449.9L697.5 455.9" stroke="#747474" stroke-width="1.3" fill="none"/></g><g transform="translate(687.2 467.48) scale(0.8) translate(-687 -467.48)"><rect x="688.0" y="462.0" width="7" height="7" fill="#7e5b45" /><rect x="689.5" y="463.5" width="4" height="4" fill="#87634c" /><path d="M697.5 467.0L697.5 473.0" stroke="#747474" stroke-width="1.3" fill="none"/></g><g transform="translate(687.2 484.60) scale(0.8) translate(-687 -484.60)"><rect x="688.0" y="479.1" width="7" height="7" fill="#7e5b45" /><rect x="689.5" y="480.6" width="4" height="4" fill="#87634c" /><path d="M698.0 479.1L698.0 490.1" stroke="#747474" stroke-width="1.4" fill="none"/></g><g transform="translate(687.2 501.72) scale(0.8) translate(-687 -501.72)"><path d="M693.5 499.2L693.5 507.2" stroke="#747474" stroke-width="1.6" fill="none"/><circle cx="693.5" cy="497.2" r="1" fill="#747474" /></g><g transform="translate(687.2 518.84) scale(0.8) translate(-687 -518.84)"><rect x="688.0" y="513.3" width="11" height="11" fill="#6a6a6a" /><rect x="690.0" y="515.3" width="3" height="3" fill="#8a5a3a" /><rect x="694.0" y="519.3" width="3" height="3" fill="#8a5a3a" /><rect x="694.0" y="515.3" width="3" height="3" fill="#888" /><rect x="690.0" y="519.3" width="3" height="3" fill="#888" /></g><g transform="translate(687.2 535.96) scale(0.8) translate(-687 -535.96)"><rect x="688.0" y="530.5" width="7" height="7" fill="#7e5b45" /><rect x="689.5" y="532.0" width="4" height="4" fill="#87634c" /><circle cx="696.5" cy="538.96" r="2.6" fill="none" stroke="#747474" stroke-width="1.1"/></g>
<!-- hamburger icons -->
<path d="M8.5 5.5h11.5M8.5 8.8h11.5M8.5 12h11.5" stroke="#c8c8c8" stroke-width="1.2"/>
<path d="M831 5.5h12M831 8.8h12M831 12h12" stroke="#c8c8c8" stroke-width="1.2"/>
<g clip-path="url(#vpclip)"><path d="M828 22.0L1500 16.3M828 40.5L1500 34.3M828 63.6L1500 56.7M828 92.6L1500 84.8M828 128.2L1500 119.3M828 177.4L1500 167.0M828 244.5L1500 232.1M828 342.0L1500 326.6M828 505.0L1500 484.7M891.9 17L-94.8 768M968.8 17L299.6 768M1045.7 17L693.9 768M1122.7 17L1088.3 768M1199.6 17L1482.6 768M1276.5 17L1877.0 768M1353.5 17L2271.4 768M1430.4 17L2665.7 768M1507.3 17L3060.1 768" stroke="url(#gridgrad)" stroke-width="0.9" fill="none"/></g>
<path d="M937.6 512.1L938.8 508.4L938.8 524.4L937.6 527.3ZM938.8 508.4L939.2 506.2L939.2 522.5L938.8 524.4ZM939.2 506.2L943.3 502.9L943.3 517.3L939.2 522.5ZM943.3 502.9L945.8 501.6L945.8 517.3L943.3 517.3ZM945.8 501.6L947.4 498.3L947.4 513.8L945.8 517.3ZM947.4 498.3L947.7 496.1L947.7 511.4L947.4 513.8ZM947.7 496.1L951.1 494.4L951.1 508.2L947.7 511.4ZM951.1 494.4L952.8 492.2L952.8 505.8L951.1 508.2ZM952.8 505.8L952.2 504.4L952.2 489.9L952.8 492.2ZM952.2 489.9L953.2 487.8L953.2 503.2L952.2 504.4ZM953.2 487.8L955.2 485.1L955.2 499.2L953.2 503.2ZM955.2 485.1L955.2 480.5L955.2 495.1L955.2 499.2ZM955.2 480.5L958.7 479.1L958.7 493.2L955.2 495.1ZM958.7 479.1L959.8 476.8L959.8 492.3L958.7 493.2ZM959.8 476.8L960.6 475.3L960.6 491.0L959.8 492.3ZM960.6 475.3L961.0 473.4L961.0 487.7L960.6 491.0ZM961.0 473.4L961.3 468.4L961.3 484.2L961.0 487.7ZM961.3 484.2L960.7 478.2L960.7 465.0L961.3 468.4ZM960.7 465.0L962.4 461.7L962.4 476.8L960.7 478.2ZM962.4 461.7L963.4 459.4L963.4 474.7L962.4 476.8ZM963.4 459.4L964.9 456.6L964.9 469.9L963.4 474.7ZM964.9 456.6L965.4 454.0L965.4 468.7L964.9 469.9ZM965.4 454.0L967.8 453.0L967.8 467.3L965.4 468.7ZM967.8 453.0L969.2 450.0L969.2 465.3L967.8 467.3ZM969.2 465.3L965.7 463.4L965.7 450.0L969.2 450.0ZM965.7 450.0L966.6 446.6L966.6 460.8L965.7 463.4ZM966.6 446.6L968.4 445.4L968.4 460.4L966.6 460.8ZM968.4 445.4L968.9 440.5L968.9 454.8L968.4 460.4ZM968.9 454.8L966.9 451.8L966.9 438.3L968.9 440.5ZM966.9 438.3L969.3 433.7L969.3 446.5L966.9 451.8ZM969.3 433.7L973.4 432.4L973.4 447.4L969.3 446.5ZM973.4 432.4L973.5 428.5L973.5 442.2L973.4 447.4ZM973.5 428.5L975.1 426.6L975.1 441.6L973.5 442.2ZM975.1 426.6L976.9 422.3L976.9 435.1L975.1 441.6ZM976.9 422.3L977.1 419.6L977.1 434.0L976.9 435.1ZM977.1 419.6L978.0 417.7L978.0 432.1L977.1 434.0ZM978.0 417.7L980.9 416.0L980.9 430.6L978.0 432.1ZM980.9 416.0L983.4 415.1L983.4 427.5L980.9 430.6ZM983.4 415.1L985.4 414.0L985.4 427.2L983.4 427.5ZM985.4 414.0L988.9 412.7L988.9 425.1L985.4 427.2ZM988.9 412.7L990.3 410.2L990.3 424.3L988.9 425.1ZM990.3 410.2L990.4 407.5L990.4 420.6L990.3 424.3ZM990.4 407.5L993.1 405.2L993.1 419.7L990.4 420.6ZM993.1 419.7L991.9 415.5L991.9 402.5L993.1 405.2ZM991.9 402.5L992.7 400.8L992.7 414.8L991.9 415.5ZM992.7 400.8L994.1 396.0L994.1 410.1L992.7 414.8ZM994.1 396.0L996.9 394.1L996.9 406.7L994.1 410.1ZM996.9 394.1L1000.1 393.8L1000.1 407.1L996.9 406.7ZM1000.1 393.8L1002.0 392.6L1002.0 406.9L1000.1 407.1ZM1002.0 392.6L1005.7 389.7L1005.7 402.9L1002.0 406.9ZM1005.7 389.7L1007.8 387.7L1007.8 400.5L1005.7 402.9ZM1007.8 387.7L1009.3 383.7L1009.3 396.2L1007.8 400.5ZM1009.3 383.7L1011.4 382.0L1011.4 395.7L1009.3 396.2ZM1011.4 382.0L1014.0 379.4L1014.0 391.6L1011.4 395.7ZM1014.0 379.4L1016.6 378.0L1016.6 391.2L1014.0 391.6ZM1016.6 378.0L1020.7 378.4L1020.7 391.5L1016.6 391.2ZM1020.7 378.4L1023.1 377.4L1023.1 390.5L1020.7 391.5ZM1023.1 377.4L1026.6 374.6L1026.6 386.6L1023.1 390.5ZM1026.6 374.6L1030.1 371.5L1030.1 384.7L1026.6 386.6ZM1030.1 371.5L1033.5 369.6L1033.5 383.4L1030.1 384.7ZM1033.5 369.6L1039.5 371.5L1039.5 383.9L1033.5 383.4ZM1039.5 371.5L1045.5 370.9L1045.5 383.3L1039.5 383.9ZM1045.5 370.9L1050.9 370.4L1050.9 384.2L1045.5 383.3ZM1050.9 370.4L1054.2 367.7L1054.2 380.7L1050.9 384.2ZM1054.2 367.7L1056.0 365.6L1056.0 377.8L1054.2 380.7ZM1056.0 365.6L1059.0 363.9L1059.0 375.5L1056.0 377.8ZM1059.0 363.9L1064.1 362.4L1064.1 375.7L1059.0 375.5ZM1064.1 362.4L1068.9 362.3L1068.9 374.6L1064.1 375.7ZM1068.9 362.3L1072.4 362.1L1072.4 374.7L1068.9 374.6ZM1072.4 362.1L1076.3 363.0L1076.3 375.2L1072.4 374.7ZM1076.3 363.0L1082.7 360.4L1082.7 373.4L1076.3 375.2ZM1082.7 360.4L1086.0 358.2L1086.0 371.3L1082.7 373.4ZM1086.0 358.2L1088.8 358.6L1088.8 370.8L1086.0 371.3ZM1088.8 358.6L1091.2 358.2L1091.2 369.8L1088.8 370.8ZM1091.2 358.2L1093.5 358.3L1093.5 372.0L1091.2 369.8ZM1093.5 358.3L1095.8 356.3L1095.8 369.8L1093.5 372.0ZM1095.8 369.8L1095.4 366.3L1095.4 354.8L1095.8 356.3ZM1095.4 366.3L1094.9 365.5L1094.9 352.8L1095.4 354.8ZM1094.9 365.5L1094.1 363.4L1094.1 350.5L1094.9 352.8ZM1094.1 350.5L1097.3 348.9L1097.3 361.1L1094.1 363.4ZM1097.3 348.9L1101.4 347.6L1101.4 360.6L1097.3 361.1ZM1101.4 347.6L1105.2 347.2L1105.2 360.7L1101.4 360.6ZM1105.2 347.2L1107.5 346.9L1107.5 359.5L1105.2 360.7ZM1107.5 346.9L1108.0 344.3L1108.0 356.4L1107.5 359.5ZM1108.0 344.3L1109.9 341.0L1109.9 352.6L1108.0 356.4ZM1109.9 341.0L1113.7 337.0L1113.7 348.7L1109.9 352.6ZM1113.7 337.0L1117.8 336.8L1117.8 348.3L1113.7 348.7ZM1117.8 336.8L1121.8 337.2L1121.8 348.6L1117.8 348.3ZM1121.8 337.2L1123.9 338.7L1123.9 350.3L1121.8 348.6ZM1123.9 338.7L1124.5 340.5L1124.5 353.6L1123.9 350.3ZM1124.5 340.5L1124.9 342.0L1124.9 354.4L1124.5 353.6ZM1124.9 342.0L1128.7 344.2L1128.7 357.3L1124.9 354.4ZM1128.7 344.2L1131.4 343.6L1131.4 356.9L1128.7 357.3ZM1131.4 343.6L1134.1 344.6L1134.1 357.7L1131.4 356.9ZM1134.1 344.6L1138.0 343.4L1138.0 354.8L1134.1 357.7ZM1138.0 343.4L1140.0 340.8L1140.0 354.1L1138.0 354.8ZM1140.0 340.8L1142.7 338.7L1142.7 350.1L1140.0 354.1ZM1142.7 338.7L1147.3 336.3L1147.3 349.2L1142.7 350.1ZM1147.3 336.3L1149.2 331.8L1149.2 344.7L1147.3 349.2ZM1149.2 331.8L1151.8 329.9L1151.8 342.4L1149.2 344.7ZM1151.8 329.9L1154.4 330.5L1154.4 342.4L1151.8 342.4ZM1154.4 330.5L1156.9 327.5L1156.9 338.7L1154.4 342.4ZM1156.9 327.5L1159.8 323.6L1159.8 334.7L1156.9 338.7ZM1159.8 323.6L1164.6 322.7L1164.6 335.0L1159.8 334.7ZM1164.6 322.7L1168.8 320.0L1168.8 331.4L1164.6 335.0ZM1168.8 331.4L1167.7 329.5L1167.7 317.5L1168.8 320.0ZM1167.7 317.5L1168.5 314.8L1168.5 326.2L1167.7 329.5ZM1168.5 314.8L1169.7 313.2L1169.7 324.3L1168.5 326.2ZM1169.7 313.2L1169.9 310.6L1169.9 322.0L1169.7 324.3ZM1169.9 310.6L1172.2 311.2L1172.2 323.5L1169.9 322.0ZM1172.2 311.2L1175.0 310.7L1175.0 322.5L1172.2 323.5ZM1175.0 310.7L1178.7 309.5L1178.7 321.1L1175.0 322.5ZM1178.7 309.5L1180.5 308.3L1180.5 320.1L1178.7 321.1ZM1180.5 308.3L1183.5 307.8L1183.5 319.7L1180.5 320.1ZM1183.5 307.8L1185.8 307.0L1185.8 318.8L1183.5 319.7ZM1185.8 307.0L1189.0 307.2L1189.0 318.8L1185.8 318.8ZM1189.0 307.2L1192.2 304.8L1192.2 317.5L1189.0 318.8ZM1192.2 304.8L1192.9 300.9L1192.9 313.1L1192.2 317.5ZM1192.9 313.1L1190.9 308.3L1190.9 297.3L1192.9 300.9ZM1190.9 297.3L1192.7 295.8L1192.7 307.0L1190.9 308.3ZM1192.7 295.8L1193.4 293.1L1193.4 304.0L1192.7 307.0ZM1193.4 293.1L1195.3 291.5L1195.3 302.7L1193.4 304.0ZM1195.3 291.5L1197.6 291.2L1197.6 301.7L1195.3 302.7ZM1197.6 291.2L1199.2 290.7L1199.2 302.7L1197.6 301.7ZM1199.2 290.7L1200.0 288.0L1200.0 299.6L1199.2 302.7ZM1200.0 288.0L1202.3 286.2L1202.3 297.5L1200.0 299.6ZM1202.3 286.2L1203.0 284.0L1203.0 296.2L1202.3 297.5ZM1203.0 284.0L1203.9 282.5L1203.9 293.5L1203.0 296.2ZM1203.9 282.5L1205.1 281.0L1205.1 292.5L1203.9 293.5ZM1205.1 281.0L1206.6 280.5L1206.6 292.7L1205.1 292.5ZM1206.6 280.5L1210.9 279.0L1210.9 290.4L1206.6 292.7ZM1210.9 279.0L1212.0 276.6L1212.0 288.1L1210.9 290.4ZM1212.0 276.6L1213.6 275.6L1213.6 286.6L1212.0 288.1ZM1213.6 275.6L1216.1 272.4L1216.1 284.6L1213.6 286.6ZM1216.1 272.4L1218.0 270.8L1218.0 282.5L1216.1 284.6ZM1218.0 270.8L1220.0 269.4L1220.0 280.1L1218.0 282.5ZM1220.0 269.4L1222.1 268.6L1222.1 279.4L1220.0 280.1ZM1222.1 268.6L1223.9 264.4L1223.9 275.6L1222.1 279.4ZM1223.9 264.4L1227.4 262.6L1227.4 273.7L1223.9 275.6ZM1227.4 262.6L1231.8 263.3L1231.8 274.4L1227.4 273.7ZM1231.8 263.3L1236.0 260.6L1236.0 271.0L1231.8 274.4ZM1236.0 260.6L1237.6 258.8L1237.6 269.9L1236.0 271.0ZM1237.6 258.8L1239.1 255.6L1239.1 266.9L1237.6 269.9ZM1239.1 255.6L1240.6 254.0L1240.6 265.4L1239.1 266.9ZM1240.6 254.0L1243.1 252.8L1243.1 263.6L1240.6 265.4ZM1243.1 263.6L1242.5 262.0L1242.5 251.3L1243.1 252.8ZM1242.5 251.3L1243.8 249.0L1243.8 259.8L1242.5 262.0ZM1243.8 259.8L1240.4 259.2L1240.4 248.3L1243.8 249.0ZM1240.4 259.2L1238.5 259.9L1238.5 249.1L1240.4 248.3ZM1238.5 259.9L1233.8 255.6L1233.8 245.8L1238.5 249.1ZM1233.8 255.6L1229.7 255.8L1229.7 245.5L1233.8 245.8ZM1229.7 255.8L1222.9 258.5L1222.9 246.8L1229.7 245.5ZM1222.9 258.5L1219.2 256.4L1219.2 245.0L1222.9 246.8ZM1219.2 256.4L1216.4 257.2L1216.4 246.5L1219.2 245.0ZM1216.4 257.2L1213.8 259.1L1213.8 247.8L1216.4 246.5ZM1213.8 259.1L1213.5 256.3L1213.5 246.1L1213.8 247.8ZM1213.5 246.1L1215.2 245.0L1215.2 255.3L1213.5 256.3ZM1215.2 245.0L1217.3 243.0L1217.3 253.7L1215.2 255.3ZM1217.3 243.0L1219.8 241.4L1219.8 252.5L1217.3 253.7ZM1219.8 241.4L1220.3 239.2L1220.3 248.9L1219.8 252.5ZM1220.3 239.2L1222.7 238.2L1222.7 248.8L1220.3 248.9ZM1222.7 238.2L1226.0 235.7L1226.0 247.1L1222.7 248.8ZM1226.0 235.7L1230.7 236.6L1230.7 247.4L1226.0 247.1ZM1230.7 236.6L1234.4 235.6L1234.4 247.1L1230.7 247.4ZM1234.4 235.6L1234.7 234.0L1234.7 243.8L1234.4 247.1ZM1234.7 234.0L1235.3 231.6L1235.3 242.9L1234.7 243.8ZM1235.3 231.6L1235.6 229.8L1235.6 240.9L1235.3 242.9ZM1235.6 229.8L1239.1 229.8L1239.1 239.4L1235.6 240.9ZM1239.1 229.8L1243.0 229.1L1243.0 239.6L1239.1 239.4ZM1243.0 229.1L1247.0 225.6L1247.0 236.5L1243.0 239.6ZM1247.0 225.6L1248.5 222.7L1248.5 232.5L1247.0 236.5ZM1248.5 222.7L1249.8 220.5L1249.8 231.1L1248.5 232.5ZM1249.8 220.5L1252.5 218.9L1252.5 229.9L1249.8 231.1ZM1252.5 218.9L1255.4 219.4L1255.4 230.3L1252.5 229.9ZM1255.4 219.4L1259.0 219.2L1259.0 229.4L1255.4 230.3ZM1259.0 219.2L1260.9 221.4L1260.9 230.9L1259.0 229.4ZM1260.9 230.9L1260.3 235.2L1260.3 224.7L1260.9 221.4ZM1260.3 224.7L1261.3 226.3L1261.3 236.1L1260.3 235.2ZM1261.3 226.3L1263.1 225.3L1263.1 235.8L1261.3 236.1ZM1263.1 225.3L1265.3 224.5L1265.3 234.5L1263.1 235.8ZM1265.3 224.5L1267.1 223.8L1267.1 233.9L1265.3 234.5ZM1267.1 223.8L1267.6 220.6L1267.6 231.0L1267.1 233.9ZM1267.6 220.6L1268.4 219.1L1268.4 230.0L1267.6 231.0ZM1268.4 219.1L1269.5 216.9L1269.5 228.1L1268.4 230.0ZM1269.5 216.9L1273.8 215.4L1273.8 225.5L1269.5 228.1ZM1273.8 215.4L1276.9 213.5L1276.9 222.8L1273.8 225.5ZM1276.9 213.5L1279.2 213.8L1279.2 224.5L1276.9 222.8ZM1279.2 213.8L1281.3 212.2L1281.3 222.1L1279.2 224.5ZM1281.3 212.2L1281.3 209.5L1281.3 220.1L1281.3 222.1ZM1281.3 209.5L1282.6 207.5L1282.6 218.2L1281.3 220.1ZM1282.6 207.5L1285.4 207.4L1285.4 216.6L1282.6 218.2ZM1285.4 207.4L1288.3 204.0L1288.3 214.5L1285.4 216.6ZM1288.3 204.0L1291.3 203.0L1291.3 212.6L1288.3 214.5ZM1291.3 203.0L1292.2 201.4L1292.2 211.1L1291.3 212.6ZM1292.2 201.4L1296.4 200.9L1296.4 210.6L1292.2 211.1ZM1296.4 200.9L1300.0 201.6L1300.0 211.7L1296.4 210.6ZM1300.0 201.6L1302.0 200.7L1302.0 210.2L1300.0 211.7ZM1302.0 200.7L1305.4 200.8L1305.4 210.8L1302.0 210.2ZM1305.4 200.8L1306.7 202.4L1306.7 212.0L1305.4 210.8ZM1306.7 202.4L1309.4 202.8L1309.4 212.1L1306.7 212.0ZM1309.4 202.8L1312.5 202.6L1312.5 212.2L1309.4 212.1ZM1312.5 202.6L1314.1 201.5L1314.1 211.8L1312.5 212.2ZM1314.1 201.5L1317.1 199.7L1317.1 209.3L1314.1 211.8ZM1317.1 199.7L1322.3 199.3L1322.3 208.7L1317.1 209.3ZM1322.3 199.3L1324.6 197.3L1324.6 207.0L1322.3 208.7ZM1324.6 197.3L1325.1 195.7L1325.1 205.1L1324.6 207.0ZM1325.1 205.1L1324.6 204.1L1324.6 193.4L1325.1 195.7ZM1324.6 193.4L1327.4 192.8L1327.4 203.2L1324.6 204.1ZM1327.4 192.8L1329.6 192.2L1329.6 201.4L1327.4 203.2ZM1329.6 192.2L1334.4 189.9L1334.4 199.3L1329.6 201.4ZM1334.4 189.9L1337.5 189.9L1337.5 199.6L1334.4 199.3ZM1337.5 189.9L1340.5 187.6L1340.5 197.4L1337.5 199.6ZM1340.5 187.6L1344.2 187.4L1344.2 197.0L1340.5 197.4ZM1344.2 187.4L1345.9 186.0L1345.9 195.8L1344.2 197.0ZM1345.9 186.0L1349.2 186.4L1349.2 196.6L1345.9 195.8ZM1349.2 186.4L1352.3 184.4L1352.3 193.5L1349.2 196.6ZM1352.3 184.4L1356.8 184.8L1356.8 194.6L1352.3 193.5ZM1356.8 184.8L1358.5 185.5L1358.5 194.6L1356.8 194.6ZM1358.5 185.5L1361.0 184.1L1361.0 193.9L1358.5 194.6ZM1361.0 184.1L1362.6 185.0L1362.6 194.4L1361.0 193.9ZM1362.6 185.0L1365.0 184.7L1365.0 195.0L1362.6 194.4ZM1365.0 184.7L1367.8 186.2L1367.8 196.6L1365.0 195.0ZM1367.8 186.2L1370.3 186.4L1370.3 197.0L1367.8 196.6ZM1370.3 186.4L1372.2 186.1L1372.2 195.7L1370.3 197.0ZM1372.2 186.1L1376.7 184.2L1376.7 194.1L1372.2 195.7ZM1376.7 184.2L1378.6 182.9L1378.6 192.0L1376.7 194.1ZM1378.6 182.9L1380.9 185.0L1380.9 195.1L1378.6 192.0ZM1380.9 185.0L1383.6 186.1L1383.6 196.3L1380.9 195.1ZM1383.6 186.1L1388.0 185.8L1388.0 195.4L1383.6 196.3ZM1388.0 185.8L1391.4 185.2L1391.4 194.6L1388.0 195.4ZM1391.4 185.2L1395.0 184.1L1395.0 194.3L1391.4 194.6ZM1395.0 184.1L1398.5 185.2L1398.5 195.4L1395.0 194.3ZM1398.5 185.2L1401.3 185.2L1401.3 195.5L1398.5 195.4ZM1401.3 185.2L1403.2 185.2L1403.2 194.6L1401.3 195.5ZM1403.2 185.2L1405.2 184.3L1405.2 193.6L1403.2 194.6ZM1405.2 184.3L1408.6 185.0L1408.6 194.3L1405.2 193.6ZM1408.6 185.0L1414.3 186.4L1414.3 195.6L1408.6 194.3ZM1414.3 186.4L1417.2 188.8L1417.2 197.7L1414.3 195.6ZM1417.2 188.8L1420.2 188.9L1420.2 198.0L1417.2 197.7ZM1420.2 188.9L1423.5 188.0L1423.5 197.8L1420.2 198.0ZM1423.5 188.0L1428.5 189.3L1428.5 199.0L1423.5 197.8ZM1428.5 189.3L1431.3 191.1L1431.3 201.6L1428.5 199.0ZM1431.3 201.6L1431.1 202.2L1431.1 192.6L1431.3 191.1ZM1431.1 202.2L1430.7 203.5L1430.7 194.2L1431.1 192.6ZM1430.7 194.2L1430.7 195.9L1430.7 206.6L1430.7 203.5ZM1430.7 195.9L1432.5 198.1L1432.5 207.3L1430.7 206.6ZM1432.5 198.1L1434.4 198.6L1434.4 208.3L1432.5 207.3ZM1434.4 198.6L1437.1 197.0L1437.1 207.4L1434.4 208.3ZM1437.1 197.0L1440.0 197.5L1440.0 207.1L1437.1 207.4ZM1440.0 197.5L1443.0 200.5L1443.0 211.3L1440.0 207.1ZM1443.0 211.3L1437.2 215.7L1437.2 205.2L1443.0 200.5ZM1437.2 215.7L1435.1 220.3L1435.1 210.5L1437.2 205.2ZM1435.1 220.3L1434.8 225.4L1434.8 214.5L1435.1 210.5ZM1434.8 225.4L1431.3 225.9L1431.3 214.9L1434.8 214.5ZM1431.3 225.9L1427.8 224.8L1427.8 214.5L1431.3 214.9ZM1427.8 224.8L1427.3 220.6L1427.3 211.1L1427.8 214.5ZM1427.3 220.6L1425.4 214.5L1425.4 205.2L1427.3 211.1ZM1425.4 214.5L1421.9 214.6L1421.9 204.0L1425.4 205.2ZM1421.9 214.6L1415.1 213.2L1415.1 202.5L1421.9 204.0ZM1415.1 213.2L1407.9 213.1L1407.9 202.8L1415.1 202.5ZM1407.9 213.1L1402.6 211.5L1402.6 201.0L1407.9 202.8ZM1402.6 211.5L1396.1 211.0L1396.1 200.5L1402.6 201.0ZM1396.1 211.0L1391.8 210.8L1391.8 201.3L1396.1 200.5ZM1391.8 210.8L1386.8 213.5L1386.8 204.0L1391.8 201.3ZM1386.8 213.5L1386.3 218.8L1386.3 208.0L1386.8 204.0ZM1386.3 218.8L1385.6 221.8L1385.6 211.0L1386.3 208.0ZM1385.6 211.0L1388.9 214.3L1388.9 224.4L1385.6 221.8ZM1388.9 214.3L1392.6 216.9L1392.6 226.7L1388.9 224.4ZM1392.6 226.7L1391.6 228.7L1391.6 219.2L1392.6 216.9ZM1391.6 228.7L1390.3 232.9L1390.3 222.7L1391.6 219.2ZM1390.3 232.9L1384.2 235.9L1384.2 224.7L1390.3 222.7ZM1384.2 235.9L1379.7 234.9L1379.7 225.1L1384.2 224.7ZM1379.7 234.9L1374.2 234.0L1374.2 224.0L1379.7 225.1ZM1374.2 234.0L1370.3 233.4L1370.3 223.9L1374.2 224.0ZM1370.3 233.4L1364.8 237.0L1364.8 226.4L1370.3 223.9ZM1364.8 237.0L1361.0 237.0L1361.0 227.4L1364.8 226.4ZM1361.0 237.0L1356.7 236.4L1356.7 225.7L1361.0 227.4ZM1356.7 236.4L1349.2 235.5L1349.2 225.1L1356.7 225.7ZM1349.2 235.5L1342.2 231.3L1342.2 221.1L1349.2 225.1ZM1342.2 231.3L1337.5 227.9L1337.5 218.1L1342.2 221.1ZM1337.5 227.9L1334.4 228.6L1334.4 218.7L1337.5 218.1ZM1334.4 228.6L1329.3 229.1L1329.3 218.1L1334.4 218.7ZM1329.3 229.1L1326.4 232.1L1326.4 220.9L1329.3 218.1ZM1326.4 232.1L1323.5 233.5L1323.5 222.7L1326.4 220.9ZM1323.5 233.5L1322.5 239.3L1322.5 229.4L1323.5 222.7ZM1322.5 239.3L1322.3 243.3L1322.3 233.3L1322.5 229.4ZM1322.3 243.3L1319.0 242.8L1319.0 232.5L1322.3 233.3ZM1319.0 242.8L1314.1 243.3L1314.1 232.1L1319.0 232.5ZM1314.1 243.3L1308.9 241.6L1308.9 230.3L1314.1 232.1ZM1308.9 241.6L1302.4 240.9L1302.4 230.9L1308.9 230.3ZM1302.4 240.9L1297.3 242.4L1297.3 231.6L1302.4 230.9ZM1297.3 242.4L1294.2 242.4L1294.2 232.1L1297.3 231.6ZM1294.2 242.4L1293.2 247.0L1293.2 236.5L1294.2 232.1ZM1293.2 247.0L1293.0 250.4L1293.0 240.3L1293.2 236.5ZM1293.0 250.4L1288.1 250.5L1288.1 239.4L1293.0 240.3ZM1288.1 250.5L1284.8 251.5L1284.8 240.3L1288.1 239.4ZM1284.8 251.5L1282.4 252.9L1282.4 241.4L1284.8 240.3ZM1282.4 252.9L1277.8 253.4L1277.8 242.7L1282.4 241.4ZM1277.8 253.4L1276.5 261.0L1276.5 250.3L1277.8 242.7ZM1276.5 261.0L1274.2 267.9L1274.2 256.7L1276.5 250.3ZM1274.2 267.9L1272.4 271.2L1272.4 260.9L1274.2 256.7ZM1272.4 271.2L1269.5 275.6L1269.5 263.8L1272.4 260.9ZM1269.5 275.6L1265.1 281.2L1265.1 269.5L1269.5 263.8ZM1265.1 281.2L1262.5 283.7L1262.5 273.1L1265.1 269.5ZM1262.5 283.7L1261.3 286.7L1261.3 275.7L1262.5 273.1ZM1261.3 286.7L1260.2 291.5L1260.2 280.2L1261.3 275.7ZM1260.2 291.5L1255.2 294.2L1255.2 282.1L1260.2 280.2ZM1255.2 294.2L1248.5 294.3L1248.5 282.5L1255.2 282.1ZM1248.5 282.5L1248.9 288.4L1248.9 299.3L1248.5 294.3ZM1248.9 299.3L1247.3 306.7L1247.3 294.2L1248.9 288.4ZM1247.3 306.7L1246.3 311.6L1246.3 299.1L1247.3 294.2ZM1246.3 299.1L1247.3 306.0L1247.3 318.5L1246.3 311.6ZM1247.3 318.5L1245.2 324.4L1245.2 312.6L1247.3 306.0ZM1245.2 324.4L1241.4 328.4L1241.4 316.5L1245.2 312.6ZM1241.4 328.4L1238.0 332.6L1238.0 320.8L1241.4 316.5ZM1238.0 332.6L1234.4 335.5L1234.4 322.4L1238.0 320.8ZM1234.4 322.4L1237.8 327.0L1237.8 339.1L1234.4 335.5ZM1237.8 327.0L1243.8 330.6L1243.8 343.8L1237.8 339.1ZM1243.8 343.8L1242.6 346.8L1242.6 335.3L1243.8 330.6ZM1242.6 346.8L1230.7 348.1L1230.7 336.9L1242.6 335.3ZM1230.7 348.1L1220.3 348.6L1220.3 336.4L1230.7 336.9ZM1220.3 348.6L1213.0 354.0L1213.0 342.3L1220.3 336.4ZM1213.0 354.0L1203.9 360.1L1203.9 348.2L1213.0 342.3ZM1203.9 360.1L1201.3 360.6L1201.3 349.2L1203.9 348.2ZM1201.3 360.6L1198.1 364.9L1198.1 353.2L1201.3 349.2ZM1198.1 364.9L1196.6 373.4L1196.6 360.9L1198.1 353.2ZM1196.6 360.9L1197.0 368.6L1197.0 380.4L1196.6 373.4ZM1197.0 380.4L1196.6 394.5L1196.6 382.0L1197.0 368.6ZM1196.6 382.0L1198.7 399.4L1198.7 413.0L1196.6 394.5ZM1198.7 399.4L1198.9 412.5L1198.9 425.4L1198.7 413.0ZM1198.9 412.5L1207.1 417.8L1207.1 430.9L1198.9 425.4ZM1207.1 417.8L1210.7 421.9L1210.7 435.3L1207.1 430.9ZM1210.7 421.9L1212.8 428.4L1212.8 441.6L1210.7 435.3ZM1212.8 428.4L1215.4 431.3L1215.4 445.3L1212.8 441.6ZM1215.4 445.3L1213.2 450.8L1213.2 436.2L1215.4 431.3ZM1213.2 450.8L1213.0 453.4L1213.0 440.6L1213.2 436.2ZM1213.0 453.4L1205.8 455.9L1205.8 441.8L1213.0 440.6ZM1205.8 455.9L1198.9 459.4L1198.9 445.3L1205.8 441.8ZM1198.9 445.3L1202.3 454.3L1202.3 469.6L1198.9 459.4ZM1202.3 454.3L1204.8 460.6L1204.8 475.4L1202.3 469.6ZM1204.8 460.6L1206.0 465.9L1206.0 479.7L1204.8 475.4ZM1206.0 465.9L1208.3 471.1L1208.3 485.9L1206.0 479.7ZM1208.3 485.9L1207.1 483.4L1207.1 467.9L1208.3 471.1ZM1207.1 467.9L1207.2 464.1L1207.2 479.7L1207.1 483.4ZM1207.2 464.1L1208.4 469.4L1208.4 484.6L1207.2 479.7ZM1208.4 484.6L1208.3 486.9L1208.3 473.4L1208.4 469.4ZM1208.3 486.9L1206.6 495.8L1206.6 481.5L1208.3 473.4ZM1206.6 481.5L1207.2 489.8L1207.2 504.5L1206.6 495.8ZM1207.2 504.5L1204.7 508.0L1204.7 493.6L1207.2 489.8ZM1204.7 508.0L1198.9 512.5L1198.9 496.9L1204.7 493.6ZM1198.9 512.5L1193.4 512.9L1193.4 498.0L1198.9 496.9ZM1193.4 512.9L1184.9 516.7L1184.9 500.4L1193.4 498.0ZM1184.9 500.4L1185.4 504.2L1185.4 517.9L1184.9 516.7ZM1185.4 517.9L1184.9 524.6L1184.9 508.6L1185.4 504.2ZM1184.9 524.6L1180.4 524.1L1180.4 510.0L1184.9 508.6ZM1180.4 524.1L1176.7 528.5L1176.7 513.3L1180.4 510.0ZM1176.7 513.3L1178.5 520.2L1178.5 534.5L1176.7 528.5ZM1178.5 520.2L1180.2 529.7L1180.2 544.8L1178.5 534.5ZM1180.2 544.8L1178.5 551.3L1178.5 535.4L1180.2 529.7ZM1178.5 551.3L1177.9 556.0L1177.9 539.1L1178.5 535.4ZM1177.9 556.0L1176.4 558.6L1176.4 544.2L1177.9 539.1ZM1176.4 558.6L1174.3 566.3L1174.3 550.8L1176.4 544.2ZM1174.3 566.3L1171.6 567.1L1171.6 552.4L1174.3 550.8ZM1171.6 567.1L1168.5 569.7L1168.5 553.1L1171.6 552.4ZM1168.5 569.7L1167.0 563.7L1167.0 548.9L1168.5 553.1ZM1167.0 563.7L1166.1 558.6L1166.1 543.8L1167.0 548.9ZM1166.1 558.6L1160.4 558.6L1160.4 542.1L1166.1 543.8ZM1160.4 558.6L1156.8 554.6L1156.8 540.2L1160.4 542.1ZM1156.8 554.6L1150.2 556.2L1150.2 539.5L1156.8 540.2ZM1150.2 556.2L1145.0 556.4L1145.0 541.4L1150.2 539.5ZM1145.0 556.4L1141.8 552.6L1141.8 535.6L1145.0 541.4ZM1141.8 552.6L1140.3 546.4L1140.3 532.0L1141.8 535.6ZM1140.3 546.4L1139.1 528.7L1139.1 514.6L1140.3 532.0ZM1139.1 514.6L1140.8 499.2L1140.8 514.1L1139.1 528.7ZM1140.8 514.1L1138.6 512.0L1138.6 497.6L1140.8 499.2ZM1138.6 512.0L1136.1 511.0L1136.1 495.7L1138.6 497.6ZM1136.1 511.0L1134.0 512.6L1134.0 498.2L1136.1 495.7ZM1134.0 512.6L1133.3 514.9L1133.3 500.4L1134.0 498.2ZM1133.3 500.4L1135.0 509.3L1135.0 523.1L1133.3 514.9ZM1135.0 523.1L1131.7 534.5L1131.7 520.3L1135.0 509.3ZM1131.7 534.5L1131.4 540.3L1131.4 526.3L1131.7 520.3ZM1131.4 540.3L1128.6 547.4L1128.6 532.0L1131.4 526.3ZM1128.6 547.4L1125.5 551.5L1125.5 534.9L1128.6 532.0ZM1125.5 551.5L1121.6 557.2L1121.6 541.4L1125.5 534.9ZM1121.6 557.2L1115.9 557.7L1115.9 542.5L1121.6 541.4ZM1115.9 557.7L1107.5 561.7L1107.5 546.1L1115.9 542.5ZM1107.5 561.7L1104.7 560.3L1104.7 543.8L1107.5 546.1ZM1104.7 560.3L1100.5 559.3L1100.5 542.6L1104.7 543.8ZM1100.5 559.3L1096.9 561.5L1096.9 546.9L1100.5 542.6ZM1096.9 561.5L1093.5 564.7L1093.5 548.5L1096.9 546.9ZM1093.5 564.7L1086.8 566.0L1086.8 550.8L1093.5 548.5ZM1086.8 566.0L1079.4 575.0L1079.4 557.8L1086.8 550.8ZM1079.4 575.0L1072.0 579.8L1072.0 563.1L1079.4 557.8ZM1072.0 579.8L1065.3 583.6L1065.3 567.2L1072.0 563.1ZM1065.3 583.6L1056.2 589.7L1056.2 573.0L1065.3 567.2ZM1056.2 589.7L1051.3 596.0L1051.3 578.9L1056.2 573.0ZM1051.3 596.0L1044.3 597.6L1044.3 582.5L1051.3 578.9ZM1044.3 597.6L1037.2 601.9L1037.2 586.0L1044.3 582.5ZM1037.2 601.9L1033.0 604.1L1033.0 589.0L1037.2 586.0ZM1033.0 604.1L1025.5 608.5L1025.5 593.0L1033.0 589.0ZM1025.5 608.5L1020.9 610.4L1020.9 592.6L1025.5 593.0ZM1020.9 610.4L1013.8 609.7L1013.8 593.0L1020.9 592.6ZM1013.8 609.7L1004.3 613.4L1004.3 597.7L1013.8 593.0ZM1004.3 613.4L995.0 614.9L995.0 598.9L1004.3 597.7ZM995.0 614.9L984.6 615.2L984.6 598.8L995.0 598.9ZM984.6 615.2L976.3 610.6L976.3 595.3L984.6 598.8ZM976.3 610.6L972.9 610.7L972.9 593.2L976.3 595.3ZM972.9 610.7L966.9 606.7L966.9 590.6L972.9 593.2ZM966.9 606.7L963.4 602.1L963.4 587.0L966.9 590.6ZM963.4 602.1L958.7 601.2L958.7 584.8L963.4 587.0ZM958.7 584.8L962.1 581.9L962.1 598.0L958.7 601.2ZM962.1 581.9L964.5 578.9L964.5 596.0L962.1 598.0ZM964.5 596.0L961.3 591.8L961.3 576.3L964.5 578.9ZM961.3 591.8L955.2 589.6L955.2 574.2L961.3 576.3ZM955.2 589.6L951.2 584.7L951.2 568.6L955.2 574.2ZM951.2 584.7L943.4 575.9L943.4 560.2L951.2 568.6ZM943.4 575.9L939.7 569.9L939.7 555.1L943.4 560.2ZM939.7 569.9L936.4 569.6L936.4 553.1L939.7 555.1ZM936.4 569.6L935.6 564.2L935.6 547.4L936.4 553.1ZM935.6 564.2L935.2 560.4L935.2 543.8L935.6 547.4ZM935.2 543.8L935.2 540.2L935.2 556.3L935.2 560.4ZM935.2 540.2L939.7 536.1L939.7 551.6L935.2 556.3ZM939.7 536.1L942.3 532.0L942.3 548.3L939.7 551.6ZM942.3 548.3L942.1 543.6L942.1 529.0L942.3 532.0ZM942.1 543.6L939.9 539.3L939.9 525.0L942.1 529.0ZM939.9 539.3L937.6 527.3L937.6 512.1L939.9 525.0ZM937.6 512.1L938.8 508.4L939.2 506.2L943.3 502.9L945.8 501.6L947.4 498.3L947.7 496.1L951.1 494.4L952.8 492.2L952.2 489.9L953.2 487.8L955.2 485.1L955.2 480.5L958.7 479.1L959.8 476.8L960.6 475.3L961.0 473.4L961.3 468.4L960.7 465.0L962.4 461.7L963.4 459.4L964.9 456.6L965.4 454.0L967.8 453.0L969.2 450.0L965.7 450.0L966.6 446.6L968.4 445.4L968.9 440.5L966.9 438.3L969.3 433.7L973.4 432.4L973.5 428.5L975.1 426.6L976.9 422.3L977.1 419.6L978.0 417.7L980.9 416.0L983.4 415.1L985.4 414.0L988.9 412.7L990.3 410.2L990.4 407.5L993.1 405.2L991.9 402.5L992.7 400.8L994.1 396.0L996.9 394.1L1000.1 393.8L1002.0 392.6L1005.7 389.7L1007.8 387.7L1009.3 383.7L1011.4 382.0L1014.0 379.4L1016.6 378.0L1020.7 378.4L1023.1 377.4L1026.6 374.6L1030.1 371.5L1033.5 369.6L1039.5 371.5L1045.5 370.9L1050.9 370.4L1054.2 367.7L1056.0 365.6L1059.0 363.9L1064.1 362.4L1068.9 362.3L1072.4 362.1L1076.3 363.0L1082.7 360.4L1086.0 358.2L1088.8 358.6L1091.2 358.2L1093.5 358.3L1095.8 356.3L1095.4 354.8L1094.9 352.8L1094.1 350.5L1097.3 348.9L1101.4 347.6L1105.2 347.2L1107.5 346.9L1108.0 344.3L1109.9 341.0L1113.7 337.0L1117.8 336.8L1121.8 337.2L1123.9 338.7L1124.5 340.5L1124.9 342.0L1128.7 344.2L1131.4 343.6L1134.1 344.6L1138.0 343.4L1140.0 340.8L1142.7 338.7L1147.3 336.3L1149.2 331.8L1151.8 329.9L1154.4 330.5L1156.9 327.5L1159.8 323.6L1164.6 322.7L1168.8 320.0L1167.7 317.5L1168.5 314.8L1169.7 313.2L1169.9 310.6L1172.2 311.2L1175.0 310.7L1178.7 309.5L1180.5 308.3L1183.5 307.8L1185.8 307.0L1189.0 307.2L1192.2 304.8L1192.9 300.9L1190.9 297.3L1192.7 295.8L1193.4 293.1L1195.3 291.5L1197.6 291.2L1199.2 290.7L1200.0 288.0L1202.3 286.2L1203.0 284.0L1203.9 282.5L1205.1 281.0L1206.6 280.5L1210.9 279.0L1212.0 276.6L1213.6 275.6L1216.1 272.4L1218.0 270.8L1220.0 269.4L1222.1 268.6L1223.9 264.4L1227.4 262.6L1231.8 263.3L1236.0 260.6L1237.6 258.8L1239.1 255.6L1240.6 254.0L1243.1 252.8L1242.5 251.3L1243.8 249.0L1240.4 248.3L1238.5 249.1L1233.8 245.8L1229.7 245.5L1222.9 246.8L1219.2 245.0L1216.4 246.5L1213.8 247.8L1213.5 246.1L1215.2 245.0L1217.3 243.0L1219.8 241.4L1220.3 239.2L1222.7 238.2L1226.0 235.7L1230.7 236.6L1234.4 235.6L1234.7 234.0L1235.3 231.6L1235.6 229.8L1239.1 229.8L1243.0 229.1L1247.0 225.6L1248.5 222.7L1249.8 220.5L1252.5 218.9L1255.4 219.4L1259.0 219.2L1260.9 221.4L1260.3 224.7L1261.3 226.3L1263.1 225.3L1265.3 224.5L1267.1 223.8L1267.6 220.6L1268.4 219.1L1269.5 216.9L1273.8 215.4L1276.9 213.5L1279.2 213.8L1281.3 212.2L1281.3 209.5L1282.6 207.5L1285.4 207.4L1288.3 204.0L1291.3 203.0L1292.2 201.4L1296.4 200.9L1300.0 201.6L1302.0 200.7L1305.4 200.8L1306.7 202.4L1309.4 202.8L1312.5 202.6L1314.1 201.5L1317.1 199.7L1322.3 199.3L1324.6 197.3L1325.1 195.7L1324.6 193.4L1327.4 192.8L1329.6 192.2L1334.4 189.9L1337.5 189.9L1340.5 187.6L1344.2 187.4L1345.9 186.0L1349.2 186.4L1352.3 184.4L1356.8 184.8L1358.5 185.5L1361.0 184.1L1362.6 185.0L1365.0 184.7L1367.8 186.2L1370.3 186.4L1372.2 186.1L1376.7 184.2L1378.6 182.9L1380.9 185.0L1383.6 186.1L1388.0 185.8L1391.4 185.2L1395.0 184.1L1398.5 185.2L1401.3 185.2L1403.2 185.2L1405.2 184.3L1408.6 185.0L1414.3 186.4L1417.2 188.8L1420.2 188.9L1423.5 188.0L1428.5 189.3L1431.3 191.1L1431.1 192.6L1430.7 194.2L1430.7 195.9L1432.5 198.1L1434.4 198.6L1437.1 197.0L1440.0 197.5L1443.0 200.5L1437.2 205.2L1435.1 210.5L1434.8 214.5L1431.3 214.9L1427.8 214.5L1427.3 211.1L1425.4 205.2L1421.9 204.0L1415.1 202.5L1407.9 202.8L1402.6 201.0L1396.1 200.5L1391.8 201.3L1386.8 204.0L1386.3 208.0L1385.6 211.0L1388.9 214.3L1392.6 216.9L1391.6 219.2L1390.3 222.7L1384.2 224.7L1379.7 225.1L1374.2 224.0L1370.3 223.9L1364.8 226.4L1361.0 227.4L1356.7 225.7L1349.2 225.1L1342.2 221.1L1337.5 218.1L1334.4 218.7L1329.3 218.1L1326.4 220.9L1323.5 222.7L1322.5 229.4L1322.3 233.3L1319.0 232.5L1314.1 232.1L1308.9 230.3L1302.4 230.9L1297.3 231.6L1294.2 232.1L1293.2 236.5L1293.0 240.3L1288.1 239.4L1284.8 240.3L1282.4 241.4L1277.8 242.7L1276.5 250.3L1274.2 256.7L1272.4 260.9L1269.5 263.8L1265.1 269.5L1262.5 273.1L1261.3 275.7L1260.2 280.2L1255.2 282.1L1248.5 282.5L1248.9 288.4L1247.3 294.2L1246.3 299.1L1247.3 306.0L1245.2 312.6L1241.4 316.5L1238.0 320.8L1234.4 322.4L1237.8 327.0L1243.8 330.6L1242.6 335.3L1230.7 336.9L1220.3 336.4L1213.0 342.3L1203.9 348.2L1201.3 349.2L1198.1 353.2L1196.6 360.9L1197.0 368.6L1196.6 382.0L1198.7 399.4L1198.9 412.5L1207.1 417.8L1210.7 421.9L1212.8 428.4L1215.4 431.3L1213.2 436.2L1213.0 440.6L1205.8 441.8L1198.9 445.3L1202.3 454.3L1204.8 460.6L1206.0 465.9L1208.3 471.1L1207.1 467.9L1207.2 464.1L1208.4 469.4L1208.3 473.4L1206.6 481.5L1207.2 489.8L1204.7 493.6L1198.9 496.9L1193.4 498.0L1184.9 500.4L1185.4 504.2L1184.9 508.6L1180.4 510.0L1176.7 513.3L1178.5 520.2L1180.2 529.7L1178.5 535.4L1177.9 539.1L1176.4 544.2L1174.3 550.8L1171.6 552.4L1168.5 553.1L1167.0 548.9L1166.1 543.8L1160.4 542.1L1156.8 540.2L1150.2 539.5L1145.0 541.4L1141.8 535.6L1140.3 532.0L1139.1 514.6L1140.8 499.2L1138.6 497.6L1136.1 495.7L1134.0 498.2L1133.3 500.4L1135.0 509.3L1131.7 520.3L1131.4 526.3L1128.6 532.0L1125.5 534.9L1121.6 541.4L1115.9 542.5L1107.5 546.1L1104.7 543.8L1100.5 542.6L1096.9 546.9L1093.5 548.5L1086.8 550.8L1079.4 557.8L1072.0 563.1L1065.3 567.2L1056.2 573.0L1051.3 578.9L1044.3 582.5L1037.2 586.0L1033.0 589.0L1025.5 593.0L1020.9 592.6L1013.8 593.0L1004.3 597.7L995.0 598.9L984.6 598.8L976.3 595.3L972.9 593.2L966.9 590.6L963.4 587.0L958.7 584.8L962.1 581.9L964.5 578.9L961.3 576.3L955.2 574.2L951.2 568.6L943.4 560.2L939.7 555.1L936.4 553.1L935.6 547.4L935.2 543.8L935.2 540.2L939.7 536.1L942.3 532.0L942.1 529.0L939.9 525.0Z" fill="#c9854f" stroke="#c58552" stroke-width="2.7" stroke-linejoin="round" fill-rule="nonzero"/><path d="M937.6 512.1L938.8 508.4L938.8 524.4L937.6 527.3ZM938.8 508.4L939.2 506.2L939.2 522.5L938.8 524.4ZM939.2 506.2L943.3 502.9L943.3 517.3L939.2 522.5ZM943.3 502.9L945.8 501.6L945.8 517.3L943.3 517.3ZM945.8 501.6L947.4 498.3L947.4 513.8L945.8 517.3ZM947.4 498.3L947.7 496.1L947.7 511.4L947.4 513.8ZM947.7 496.1L951.1 494.4L951.1 508.2L947.7 511.4ZM951.1 494.4L952.8 492.2L952.8 505.8L951.1 508.2ZM952.8 505.8L952.2 504.4L952.2 489.9L952.8 492.2ZM952.2 489.9L953.2 487.8L953.2 503.2L952.2 504.4ZM953.2 487.8L955.2 485.1L955.2 499.2L953.2 503.2ZM955.2 485.1L955.2 480.5L955.2 495.1L955.2 499.2ZM955.2 480.5L958.7 479.1L958.7 493.2L955.2 495.1ZM958.7 479.1L959.8 476.8L959.8 492.3L958.7 493.2ZM959.8 476.8L960.6 475.3L960.6 491.0L959.8 492.3ZM960.6 475.3L961.0 473.4L961.0 487.7L960.6 491.0ZM961.0 473.4L961.3 468.4L961.3 484.2L961.0 487.7ZM961.3 484.2L960.7 478.2L960.7 465.0L961.3 468.4ZM960.7 465.0L962.4 461.7L962.4 476.8L960.7 478.2ZM962.4 461.7L963.4 459.4L963.4 474.7L962.4 476.8ZM963.4 459.4L964.9 456.6L964.9 469.9L963.4 474.7ZM964.9 456.6L965.4 454.0L965.4 468.7L964.9 469.9ZM965.4 454.0L967.8 453.0L967.8 467.3L965.4 468.7ZM967.8 453.0L969.2 450.0L969.2 465.3L967.8 467.3ZM969.2 465.3L965.7 463.4L965.7 450.0L969.2 450.0ZM965.7 450.0L966.6 446.6L966.6 460.8L965.7 463.4ZM966.6 446.6L968.4 445.4L968.4 460.4L966.6 460.8ZM968.4 445.4L968.9 440.5L968.9 454.8L968.4 460.4ZM968.9 454.8L966.9 451.8L966.9 438.3L968.9 440.5ZM966.9 438.3L969.3 433.7L969.3 446.5L966.9 451.8ZM969.3 433.7L973.4 432.4L973.4 447.4L969.3 446.5ZM973.4 432.4L973.5 428.5L973.5 442.2L973.4 447.4ZM973.5 428.5L975.1 426.6L975.1 441.6L973.5 442.2ZM975.1 426.6L976.9 422.3L976.9 435.1L975.1 441.6ZM976.9 422.3L977.1 419.6L977.1 434.0L976.9 435.1ZM977.1 419.6L978.0 417.7L978.0 432.1L977.1 434.0ZM978.0 417.7L980.9 416.0L980.9 430.6L978.0 432.1ZM980.9 416.0L983.4 415.1L983.4 427.5L980.9 430.6ZM983.4 415.1L985.4 414.0L985.4 427.2L983.4 427.5ZM985.4 414.0L988.9 412.7L988.9 425.1L985.4 427.2ZM988.9 412.7L990.3 410.2L990.3 424.3L988.9 425.1ZM990.3 410.2L990.4 407.5L990.4 420.6L990.3 424.3ZM990.4 407.5L993.1 405.2L993.1 419.7L990.4 420.6ZM993.1 419.7L991.9 415.5L991.9 402.5L993.1 405.2ZM991.9 402.5L992.7 400.8L992.7 414.8L991.9 415.5ZM992.7 400.8L994.1 396.0L994.1 410.1L992.7 414.8ZM994.1 396.0L996.9 394.1L996.9 406.7L994.1 410.1ZM996.9 394.1L1000.1 393.8L1000.1 407.1L996.9 406.7ZM1000.1 393.8L1002.0 392.6L1002.0 406.9L1000.1 407.1ZM1002.0 392.6L1005.7 389.7L1005.7 402.9L1002.0 406.9ZM1005.7 389.7L1007.8 387.7L1007.8 400.5L1005.7 402.9ZM1007.8 387.7L1009.3 383.7L1009.3 396.2L1007.8 400.5ZM1009.3 383.7L1011.4 382.0L1011.4 395.7L1009.3 396.2ZM1011.4 382.0L1014.0 379.4L1014.0 391.6L1011.4 395.7ZM1014.0 379.4L1016.6 378.0L1016.6 391.2L1014.0 391.6ZM1016.6 378.0L1020.7 378.4L1020.7 391.5L1016.6 391.2ZM1020.7 378.4L1023.1 377.4L1023.1 390.5L1020.7 391.5ZM1023.1 377.4L1026.6 374.6L1026.6 386.6L1023.1 390.5ZM1026.6 374.6L1030.1 371.5L1030.1 384.7L1026.6 386.6ZM1030.1 371.5L1033.5 369.6L1033.5 383.4L1030.1 384.7ZM1033.5 369.6L1039.5 371.5L1039.5 383.9L1033.5 383.4ZM1039.5 371.5L1045.5 370.9L1045.5 383.3L1039.5 383.9ZM1045.5 370.9L1050.9 370.4L1050.9 384.2L1045.5 383.3ZM1050.9 370.4L1054.2 367.7L1054.2 380.7L1050.9 384.2ZM1054.2 367.7L1056.0 365.6L1056.0 377.8L1054.2 380.7ZM1056.0 365.6L1059.0 363.9L1059.0 375.5L1056.0 377.8ZM1059.0 363.9L1064.1 362.4L1064.1 375.7L1059.0 375.5ZM1064.1 362.4L1068.9 362.3L1068.9 374.6L1064.1 375.7ZM1068.9 362.3L1072.4 362.1L1072.4 374.7L1068.9 374.6ZM1072.4 362.1L1076.3 363.0L1076.3 375.2L1072.4 374.7ZM1076.3 363.0L1082.7 360.4L1082.7 373.4L1076.3 375.2ZM1082.7 360.4L1086.0 358.2L1086.0 371.3L1082.7 373.4ZM1086.0 358.2L1088.8 358.6L1088.8 370.8L1086.0 371.3ZM1088.8 358.6L1091.2 358.2L1091.2 369.8L1088.8 370.8ZM1091.2 358.2L1093.5 358.3L1093.5 372.0L1091.2 369.8ZM1093.5 358.3L1095.8 356.3L1095.8 369.8L1093.5 372.0ZM1095.8 369.8L1095.4 366.3L1095.4 354.8L1095.8 356.3ZM1095.4 366.3L1094.9 365.5L1094.9 352.8L1095.4 354.8ZM1094.9 365.5L1094.1 363.4L1094.1 350.5L1094.9 352.8ZM1094.1 350.5L1097.3 348.9L1097.3 361.1L1094.1 363.4ZM1097.3 348.9L1101.4 347.6L1101.4 360.6L1097.3 361.1ZM1101.4 347.6L1105.2 347.2L1105.2 360.7L1101.4 360.6ZM1105.2 347.2L1107.5 346.9L1107.5 359.5L1105.2 360.7ZM1107.5 346.9L1108.0 344.3L1108.0 356.4L1107.5 359.5ZM1108.0 344.3L1109.9 341.0L1109.9 352.6L1108.0 356.4ZM1109.9 341.0L1113.7 337.0L1113.7 348.7L1109.9 352.6ZM1113.7 337.0L1117.8 336.8L1117.8 348.3L1113.7 348.7ZM1117.8 336.8L1121.8 337.2L1121.8 348.6L1117.8 348.3ZM1121.8 337.2L1123.9 338.7L1123.9 350.3L1121.8 348.6ZM1123.9 338.7L1124.5 340.5L1124.5 353.6L1123.9 350.3ZM1124.5 340.5L1124.9 342.0L1124.9 354.4L1124.5 353.6ZM1124.9 342.0L1128.7 344.2L1128.7 357.3L1124.9 354.4ZM1128.7 344.2L1131.4 343.6L1131.4 356.9L1128.7 357.3ZM1131.4 343.6L1134.1 344.6L1134.1 357.7L1131.4 356.9ZM1134.1 344.6L1138.0 343.4L1138.0 354.8L1134.1 357.7ZM1138.0 343.4L1140.0 340.8L1140.0 354.1L1138.0 354.8ZM1140.0 340.8L1142.7 338.7L1142.7 350.1L1140.0 354.1ZM1142.7 338.7L1147.3 336.3L1147.3 349.2L1142.7 350.1ZM1147.3 336.3L1149.2 331.8L1149.2 344.7L1147.3 349.2ZM1149.2 331.8L1151.8 329.9L1151.8 342.4L1149.2 344.7ZM1151.8 329.9L1154.4 330.5L1154.4 342.4L1151.8 342.4ZM1154.4 330.5L1156.9 327.5L1156.9 338.7L1154.4 342.4ZM1156.9 327.5L1159.8 323.6L1159.8 334.7L1156.9 338.7ZM1159.8 323.6L1164.6 322.7L1164.6 335.0L1159.8 334.7ZM1164.6 322.7L1168.8 320.0L1168.8 331.4L1164.6 335.0ZM1168.8 331.4L1167.7 329.5L1167.7 317.5L1168.8 320.0ZM1167.7 317.5L1168.5 314.8L1168.5 326.2L1167.7 329.5ZM1168.5 314.8L1169.7 313.2L1169.7 324.3L1168.5 326.2ZM1169.7 313.2L1169.9 310.6L1169.9 322.0L1169.7 324.3ZM1169.9 310.6L1172.2 311.2L1172.2 323.5L1169.9 322.0ZM1172.2 311.2L1175.0 310.7L1175.0 322.5L1172.2 323.5ZM1175.0 310.7L1178.7 309.5L1178.7 321.1L1175.0 322.5ZM1178.7 309.5L1180.5 308.3L1180.5 320.1L1178.7 321.1ZM1180.5 308.3L1183.5 307.8L1183.5 319.7L1180.5 320.1ZM1183.5 307.8L1185.8 307.0L1185.8 318.8L1183.5 319.7ZM1185.8 307.0L1189.0 307.2L1189.0 318.8L1185.8 318.8ZM1189.0 307.2L1192.2 304.8L1192.2 317.5L1189.0 318.8ZM1192.2 304.8L1192.9 300.9L1192.9 313.1L1192.2 317.5ZM1192.9 313.1L1190.9 308.3L1190.9 297.3L1192.9 300.9ZM1190.9 297.3L1192.7 295.8L1192.7 307.0L1190.9 308.3ZM1192.7 295.8L1193.4 293.1L1193.4 304.0L1192.7 307.0ZM1193.4 293.1L1195.3 291.5L1195.3 302.7L1193.4 304.0ZM1195.3 291.5L1197.6 291.2L1197.6 301.7L1195.3 302.7ZM1197.6 291.2L1199.2 290.7L1199.2 302.7L1197.6 301.7ZM1199.2 290.7L1200.0 288.0L1200.0 299.6L1199.2 302.7ZM1200.0 288.0L1202.3 286.2L1202.3 297.5L1200.0 299.6ZM1202.3 286.2L1203.0 284.0L1203.0 296.2L1202.3 297.5ZM1203.0 284.0L1203.9 282.5L1203.9 293.5L1203.0 296.2ZM1203.9 282.5L1205.1 281.0L1205.1 292.5L1203.9 293.5ZM1205.1 281.0L1206.6 280.5L1206.6 292.7L1205.1 292.5ZM1206.6 280.5L1210.9 279.0L1210.9 290.4L1206.6 292.7ZM1210.9 279.0L1212.0 276.6L1212.0 288.1L1210.9 290.4ZM1212.0 276.6L1213.6 275.6L1213.6 286.6L1212.0 288.1ZM1213.6 275.6L1216.1 272.4L1216.1 284.6L1213.6 286.6ZM1216.1 272.4L1218.0 270.8L1218.0 282.5L1216.1 284.6ZM1218.0 270.8L1220.0 269.4L1220.0 280.1L1218.0 282.5ZM1220.0 269.4L1222.1 268.6L1222.1 279.4L1220.0 280.1ZM1222.1 268.6L1223.9 264.4L1223.9 275.6L1222.1 279.4ZM1223.9 264.4L1227.4 262.6L1227.4 273.7L1223.9 275.6ZM1227.4 262.6L1231.8 263.3L1231.8 274.4L1227.4 273.7ZM1231.8 263.3L1236.0 260.6L1236.0 271.0L1231.8 274.4ZM1236.0 260.6L1237.6 258.8L1237.6 269.9L1236.0 271.0ZM1237.6 258.8L1239.1 255.6L1239.1 266.9L1237.6 269.9ZM1239.1 255.6L1240.6 254.0L1240.6 265.4L1239.1 266.9ZM1240.6 254.0L1243.1 252.8L1243.1 263.6L1240.6 265.4ZM1243.1 263.6L1242.5 262.0L1242.5 251.3L1243.1 252.8ZM1242.5 251.3L1243.8 249.0L1243.8 259.8L1242.5 262.0ZM1243.8 259.8L1240.4 259.2L1240.4 248.3L1243.8 249.0ZM1240.4 259.2L1238.5 259.9L1238.5 249.1L1240.4 248.3ZM1238.5 259.9L1233.8 255.6L1233.8 245.8L1238.5 249.1ZM1233.8 255.6L1229.7 255.8L1229.7 245.5L1233.8 245.8ZM1229.7 255.8L1222.9 258.5L1222.9 246.8L1229.7 245.5ZM1222.9 258.5L1219.2 256.4L1219.2 245.0L1222.9 246.8ZM1219.2 256.4L1216.4 257.2L1216.4 246.5L1219.2 245.0ZM1216.4 257.2L1213.8 259.1L1213.8 247.8L1216.4 246.5ZM1213.8 259.1L1213.5 256.3L1213.5 246.1L1213.8 247.8ZM1213.5 246.1L1215.2 245.0L1215.2 255.3L1213.5 256.3ZM1215.2 245.0L1217.3 243.0L1217.3 253.7L1215.2 255.3ZM1217.3 243.0L1219.8 241.4L1219.8 252.5L1217.3 253.7ZM1219.8 241.4L1220.3 239.2L1220.3 248.9L1219.8 252.5ZM1220.3 239.2L1222.7 238.2L1222.7 248.8L1220.3 248.9ZM1222.7 238.2L1226.0 235.7L1226.0 247.1L1222.7 248.8ZM1226.0 235.7L1230.7 236.6L1230.7 247.4L1226.0 247.1ZM1230.7 236.6L1234.4 235.6L1234.4 247.1L1230.7 247.4ZM1234.4 235.6L1234.7 234.0L1234.7 243.8L1234.4 247.1ZM1234.7 234.0L1235.3 231.6L1235.3 242.9L1234.7 243.8ZM1235.3 231.6L1235.6 229.8L1235.6 240.9L1235.3 242.9ZM1235.6 229.8L1239.1 229.8L1239.1 239.4L1235.6 240.9ZM1239.1 229.8L1243.0 229.1L1243.0 239.6L1239.1 239.4ZM1243.0 229.1L1247.0 225.6L1247.0 236.5L1243.0 239.6ZM1247.0 225.6L1248.5 222.7L1248.5 232.5L1247.0 236.5ZM1248.5 222.7L1249.8 220.5L1249.8 231.1L1248.5 232.5ZM1249.8 220.5L1252.5 218.9L1252.5 229.9L1249.8 231.1ZM1252.5 218.9L1255.4 219.4L1255.4 230.3L1252.5 229.9ZM1255.4 219.4L1259.0 219.2L1259.0 229.4L1255.4 230.3ZM1259.0 219.2L1260.9 221.4L1260.9 230.9L1259.0 229.4ZM1260.9 230.9L1260.3 235.2L1260.3 224.7L1260.9 221.4ZM1260.3 224.7L1261.3 226.3L1261.3 236.1L1260.3 235.2ZM1261.3 226.3L1263.1 225.3L1263.1 235.8L1261.3 236.1ZM1263.1 225.3L1265.3 224.5L1265.3 234.5L1263.1 235.8ZM1265.3 224.5L1267.1 223.8L1267.1 233.9L1265.3 234.5ZM1267.1 223.8L1267.6 220.6L1267.6 231.0L1267.1 233.9ZM1267.6 220.6L1268.4 219.1L1268.4 230.0L1267.6 231.0ZM1268.4 219.1L1269.5 216.9L1269.5 228.1L1268.4 230.0ZM1269.5 216.9L1273.8 215.4L1273.8 225.5L1269.5 228.1ZM1273.8 215.4L1276.9 213.5L1276.9 222.8L1273.8 225.5ZM1276.9 213.5L1279.2 213.8L1279.2 224.5L1276.9 222.8ZM1279.2 213.8L1281.3 212.2L1281.3 222.1L1279.2 224.5ZM1281.3 212.2L1281.3 209.5L1281.3 220.1L1281.3 222.1ZM1281.3 209.5L1282.6 207.5L1282.6 218.2L1281.3 220.1ZM1282.6 207.5L1285.4 207.4L1285.4 216.6L1282.6 218.2ZM1285.4 207.4L1288.3 204.0L1288.3 214.5L1285.4 216.6ZM1288.3 204.0L1291.3 203.0L1291.3 212.6L1288.3 214.5ZM1291.3 203.0L1292.2 201.4L1292.2 211.1L1291.3 212.6ZM1292.2 201.4L1296.4 200.9L1296.4 210.6L1292.2 211.1ZM1296.4 200.9L1300.0 201.6L1300.0 211.7L1296.4 210.6ZM1300.0 201.6L1302.0 200.7L1302.0 210.2L1300.0 211.7ZM1302.0 200.7L1305.4 200.8L1305.4 210.8L1302.0 210.2ZM1305.4 200.8L1306.7 202.4L1306.7 212.0L1305.4 210.8ZM1306.7 202.4L1309.4 202.8L1309.4 212.1L1306.7 212.0ZM1309.4 202.8L1312.5 202.6L1312.5 212.2L1309.4 212.1ZM1312.5 202.6L1314.1 201.5L1314.1 211.8L1312.5 212.2ZM1314.1 201.5L1317.1 199.7L1317.1 209.3L1314.1 211.8ZM1317.1 199.7L1322.3 199.3L1322.3 208.7L1317.1 209.3ZM1322.3 199.3L1324.6 197.3L1324.6 207.0L1322.3 208.7ZM1324.6 197.3L1325.1 195.7L1325.1 205.1L1324.6 207.0ZM1325.1 205.1L1324.6 204.1L1324.6 193.4L1325.1 195.7ZM1324.6 193.4L1327.4 192.8L1327.4 203.2L1324.6 204.1ZM1327.4 192.8L1329.6 192.2L1329.6 201.4L1327.4 203.2ZM1329.6 192.2L1334.4 189.9L1334.4 199.3L1329.6 201.4ZM1334.4 189.9L1337.5 189.9L1337.5 199.6L1334.4 199.3ZM1337.5 189.9L1340.5 187.6L1340.5 197.4L1337.5 199.6ZM1340.5 187.6L1344.2 187.4L1344.2 197.0L1340.5 197.4ZM1344.2 187.4L1345.9 186.0L1345.9 195.8L1344.2 197.0ZM1345.9 186.0L1349.2 186.4L1349.2 196.6L1345.9 195.8ZM1349.2 186.4L1352.3 184.4L1352.3 193.5L1349.2 196.6ZM1352.3 184.4L1356.8 184.8L1356.8 194.6L1352.3 193.5ZM1356.8 184.8L1358.5 185.5L1358.5 194.6L1356.8 194.6ZM1358.5 185.5L1361.0 184.1L1361.0 193.9L1358.5 194.6ZM1361.0 184.1L1362.6 185.0L1362.6 194.4L1361.0 193.9ZM1362.6 185.0L1365.0 184.7L1365.0 195.0L1362.6 194.4ZM1365.0 184.7L1367.8 186.2L1367.8 196.6L1365.0 195.0ZM1367.8 186.2L1370.3 186.4L1370.3 197.0L1367.8 196.6ZM1370.3 186.4L1372.2 186.1L1372.2 195.7L1370.3 197.0ZM1372.2 186.1L1376.7 184.2L1376.7 194.1L1372.2 195.7ZM1376.7 184.2L1378.6 182.9L1378.6 192.0L1376.7 194.1ZM1378.6 182.9L1380.9 185.0L1380.9 195.1L1378.6 192.0ZM1380.9 185.0L1383.6 186.1L1383.6 196.3L1380.9 195.1ZM1383.6 186.1L1388.0 185.8L1388.0 195.4L1383.6 196.3ZM1388.0 185.8L1391.4 185.2L1391.4 194.6L1388.0 195.4ZM1391.4 185.2L1395.0 184.1L1395.0 194.3L1391.4 194.6ZM1395.0 184.1L1398.5 185.2L1398.5 195.4L1395.0 194.3ZM1398.5 185.2L1401.3 185.2L1401.3 195.5L1398.5 195.4ZM1401.3 185.2L1403.2 185.2L1403.2 194.6L1401.3 195.5ZM1403.2 185.2L1405.2 184.3L1405.2 193.6L1403.2 194.6ZM1405.2 184.3L1408.6 185.0L1408.6 194.3L1405.2 193.6ZM1408.6 185.0L1414.3 186.4L1414.3 195.6L1408.6 194.3ZM1414.3 186.4L1417.2 188.8L1417.2 197.7L1414.3 195.6ZM1417.2 188.8L1420.2 188.9L1420.2 198.0L1417.2 197.7ZM1420.2 188.9L1423.5 188.0L1423.5 197.8L1420.2 198.0ZM1423.5 188.0L1428.5 189.3L1428.5 199.0L1423.5 197.8ZM1428.5 189.3L1431.3 191.1L1431.3 201.6L1428.5 199.0ZM1431.3 201.6L1431.1 202.2L1431.1 192.6L1431.3 191.1ZM1431.1 202.2L1430.7 203.5L1430.7 194.2L1431.1 192.6ZM1430.7 194.2L1430.7 195.9L1430.7 206.6L1430.7 203.5ZM1430.7 195.9L1432.5 198.1L1432.5 207.3L1430.7 206.6ZM1432.5 198.1L1434.4 198.6L1434.4 208.3L1432.5 207.3ZM1434.4 198.6L1437.1 197.0L1437.1 207.4L1434.4 208.3ZM1437.1 197.0L1440.0 197.5L1440.0 207.1L1437.1 207.4ZM1440.0 197.5L1443.0 200.5L1443.0 211.3L1440.0 207.1ZM1443.0 211.3L1437.2 215.7L1437.2 205.2L1443.0 200.5ZM1437.2 215.7L1435.1 220.3L1435.1 210.5L1437.2 205.2ZM1435.1 220.3L1434.8 225.4L1434.8 214.5L1435.1 210.5ZM1434.8 225.4L1431.3 225.9L1431.3 214.9L1434.8 214.5ZM1431.3 225.9L1427.8 224.8L1427.8 214.5L1431.3 214.9ZM1427.8 224.8L1427.3 220.6L1427.3 211.1L1427.8 214.5ZM1427.3 220.6L1425.4 214.5L1425.4 205.2L1427.3 211.1ZM1425.4 214.5L1421.9 214.6L1421.9 204.0L1425.4 205.2ZM1421.9 214.6L1415.1 213.2L1415.1 202.5L1421.9 204.0ZM1415.1 213.2L1407.9 213.1L1407.9 202.8L1415.1 202.5ZM1407.9 213.1L1402.6 211.5L1402.6 201.0L1407.9 202.8ZM1402.6 211.5L1396.1 211.0L1396.1 200.5L1402.6 201.0ZM1396.1 211.0L1391.8 210.8L1391.8 201.3L1396.1 200.5ZM1391.8 210.8L1386.8 213.5L1386.8 204.0L1391.8 201.3ZM1386.8 213.5L1386.3 218.8L1386.3 208.0L1386.8 204.0ZM1386.3 218.8L1385.6 221.8L1385.6 211.0L1386.3 208.0ZM1385.6 211.0L1388.9 214.3L1388.9 224.4L1385.6 221.8ZM1388.9 214.3L1392.6 216.9L1392.6 226.7L1388.9 224.4ZM1392.6 226.7L1391.6 228.7L1391.6 219.2L1392.6 216.9ZM1391.6 228.7L1390.3 232.9L1390.3 222.7L1391.6 219.2ZM1390.3 232.9L1384.2 235.9L1384.2 224.7L1390.3 222.7ZM1384.2 235.9L1379.7 234.9L1379.7 225.1L1384.2 224.7ZM1379.7 234.9L1374.2 234.0L1374.2 224.0L1379.7 225.1ZM1374.2 234.0L1370.3 233.4L1370.3 223.9L1374.2 224.0ZM1370.3 233.4L1364.8 237.0L1364.8 226.4L1370.3 223.9ZM1364.8 237.0L1361.0 237.0L1361.0 227.4L1364.8 226.4ZM1361.0 237.0L1356.7 236.4L1356.7 225.7L1361.0 227.4ZM1356.7 236.4L1349.2 235.5L1349.2 225.1L1356.7 225.7ZM1349.2 235.5L1342.2 231.3L1342.2 221.1L1349.2 225.1ZM1342.2 231.3L1337.5 227.9L1337.5 218.1L1342.2 221.1ZM1337.5 227.9L1334.4 228.6L1334.4 218.7L1337.5 218.1ZM1334.4 228.6L1329.3 229.1L1329.3 218.1L1334.4 218.7ZM1329.3 229.1L1326.4 232.1L1326.4 220.9L1329.3 218.1ZM1326.4 232.1L1323.5 233.5L1323.5 222.7L1326.4 220.9ZM1323.5 233.5L1322.5 239.3L1322.5 229.4L1323.5 222.7ZM1322.5 239.3L1322.3 243.3L1322.3 233.3L1322.5 229.4ZM1322.3 243.3L1319.0 242.8L1319.0 232.5L1322.3 233.3ZM1319.0 242.8L1314.1 243.3L1314.1 232.1L1319.0 232.5ZM1314.1 243.3L1308.9 241.6L1308.9 230.3L1314.1 232.1ZM1308.9 241.6L1302.4 240.9L1302.4 230.9L1308.9 230.3ZM1302.4 240.9L1297.3 242.4L1297.3 231.6L1302.4 230.9ZM1297.3 242.4L1294.2 242.4L1294.2 232.1L1297.3 231.6ZM1294.2 242.4L1293.2 247.0L1293.2 236.5L1294.2 232.1ZM1293.2 247.0L1293.0 250.4L1293.0 240.3L1293.2 236.5ZM1293.0 250.4L1288.1 250.5L1288.1 239.4L1293.0 240.3ZM1288.1 250.5L1284.8 251.5L1284.8 240.3L1288.1 239.4ZM1284.8 251.5L1282.4 252.9L1282.4 241.4L1284.8 240.3ZM1282.4 252.9L1277.8 253.4L1277.8 242.7L1282.4 241.4ZM1277.8 253.4L1276.5 261.0L1276.5 250.3L1277.8 242.7ZM1276.5 261.0L1274.2 267.9L1274.2 256.7L1276.5 250.3ZM1274.2 267.9L1272.4 271.2L1272.4 260.9L1274.2 256.7ZM1272.4 271.2L1269.5 275.6L1269.5 263.8L1272.4 260.9ZM1269.5 275.6L1265.1 281.2L1265.1 269.5L1269.5 263.8ZM1265.1 281.2L1262.5 283.7L1262.5 273.1L1265.1 269.5ZM1262.5 283.7L1261.3 286.7L1261.3 275.7L1262.5 273.1ZM1261.3 286.7L1260.2 291.5L1260.2 280.2L1261.3 275.7ZM1260.2 291.5L1255.2 294.2L1255.2 282.1L1260.2 280.2ZM1255.2 294.2L1248.5 294.3L1248.5 282.5L1255.2 282.1ZM1248.5 282.5L1248.9 288.4L1248.9 299.3L1248.5 294.3ZM1248.9 299.3L1247.3 306.7L1247.3 294.2L1248.9 288.4ZM1247.3 306.7L1246.3 311.6L1246.3 299.1L1247.3 294.2ZM1246.3 299.1L1247.3 306.0L1247.3 318.5L1246.3 311.6ZM1247.3 318.5L1245.2 324.4L1245.2 312.6L1247.3 306.0ZM1245.2 324.4L1241.4 328.4L1241.4 316.5L1245.2 312.6ZM1241.4 328.4L1238.0 332.6L1238.0 320.8L1241.4 316.5ZM1238.0 332.6L1234.4 335.5L1234.4 322.4L1238.0 320.8ZM1234.4 322.4L1237.8 327.0L1237.8 339.1L1234.4 335.5ZM1237.8 327.0L1243.8 330.6L1243.8 343.8L1237.8 339.1ZM1243.8 343.8L1242.6 346.8L1242.6 335.3L1243.8 330.6ZM1242.6 346.8L1230.7 348.1L1230.7 336.9L1242.6 335.3ZM1230.7 348.1L1220.3 348.6L1220.3 336.4L1230.7 336.9ZM1220.3 348.6L1213.0 354.0L1213.0 342.3L1220.3 336.4ZM1213.0 354.0L1203.9 360.1L1203.9 348.2L1213.0 342.3ZM1203.9 360.1L1201.3 360.6L1201.3 349.2L1203.9 348.2ZM1201.3 360.6L1198.1 364.9L1198.1 353.2L1201.3 349.2ZM1198.1 364.9L1196.6 373.4L1196.6 360.9L1198.1 353.2ZM1196.6 360.9L1197.0 368.6L1197.0 380.4L1196.6 373.4ZM1197.0 380.4L1196.6 394.5L1196.6 382.0L1197.0 368.6ZM1196.6 382.0L1198.7 399.4L1198.7 413.0L1196.6 394.5ZM1198.7 399.4L1198.9 412.5L1198.9 425.4L1198.7 413.0ZM1198.9 412.5L1207.1 417.8L1207.1 430.9L1198.9 425.4ZM1207.1 417.8L1210.7 421.9L1210.7 435.3L1207.1 430.9ZM1210.7 421.9L1212.8 428.4L1212.8 441.6L1210.7 435.3ZM1212.8 428.4L1215.4 431.3L1215.4 445.3L1212.8 441.6ZM1215.4 445.3L1213.2 450.8L1213.2 436.2L1215.4 431.3ZM1213.2 450.8L1213.0 453.4L1213.0 440.6L1213.2 436.2ZM1213.0 453.4L1205.8 455.9L1205.8 441.8L1213.0 440.6ZM1205.8 455.9L1198.9 459.4L1198.9 445.3L1205.8 441.8ZM1198.9 445.3L1202.3 454.3L1202.3 469.6L1198.9 459.4ZM1202.3 454.3L1204.8 460.6L1204.8 475.4L1202.3 469.6ZM1204.8 460.6L1206.0 465.9L1206.0 479.7L1204.8 475.4ZM1206.0 465.9L1208.3 471.1L1208.3 485.9L1206.0 479.7ZM1208.3 485.9L1207.1 483.4L1207.1 467.9L1208.3 471.1ZM1207.1 467.9L1207.2 464.1L1207.2 479.7L1207.1 483.4ZM1207.2 464.1L1208.4 469.4L1208.4 484.6L1207.2 479.7ZM1208.4 484.6L1208.3 486.9L1208.3 473.4L1208.4 469.4ZM1208.3 486.9L1206.6 495.8L1206.6 481.5L1208.3 473.4ZM1206.6 481.5L1207.2 489.8L1207.2 504.5L1206.6 495.8ZM1207.2 504.5L1204.7 508.0L1204.7 493.6L1207.2 489.8ZM1204.7 508.0L1198.9 512.5L1198.9 496.9L1204.7 493.6ZM1198.9 512.5L1193.4 512.9L1193.4 498.0L1198.9 496.9ZM1193.4 512.9L1184.9 516.7L1184.9 500.4L1193.4 498.0ZM1184.9 500.4L1185.4 504.2L1185.4 517.9L1184.9 516.7ZM1185.4 517.9L1184.9 524.6L1184.9 508.6L1185.4 504.2ZM1184.9 524.6L1180.4 524.1L1180.4 510.0L1184.9 508.6ZM1180.4 524.1L1176.7 528.5L1176.7 513.3L1180.4 510.0ZM1176.7 513.3L1178.5 520.2L1178.5 534.5L1176.7 528.5ZM1178.5 520.2L1180.2 529.7L1180.2 544.8L1178.5 534.5ZM1180.2 544.8L1178.5 551.3L1178.5 535.4L1180.2 529.7ZM1178.5 551.3L1177.9 556.0L1177.9 539.1L1178.5 535.4ZM1177.9 556.0L1176.4 558.6L1176.4 544.2L1177.9 539.1ZM1176.4 558.6L1174.3 566.3L1174.3 550.8L1176.4 544.2ZM1174.3 566.3L1171.6 567.1L1171.6 552.4L1174.3 550.8ZM1171.6 567.1L1168.5 569.7L1168.5 553.1L1171.6 552.4ZM1168.5 569.7L1167.0 563.7L1167.0 548.9L1168.5 553.1ZM1167.0 563.7L1166.1 558.6L1166.1 543.8L1167.0 548.9ZM1166.1 558.6L1160.4 558.6L1160.4 542.1L1166.1 543.8ZM1160.4 558.6L1156.8 554.6L1156.8 540.2L1160.4 542.1ZM1156.8 554.6L1150.2 556.2L1150.2 539.5L1156.8 540.2ZM1150.2 556.2L1145.0 556.4L1145.0 541.4L1150.2 539.5ZM1145.0 556.4L1141.8 552.6L1141.8 535.6L1145.0 541.4ZM1141.8 552.6L1140.3 546.4L1140.3 532.0L1141.8 535.6ZM1140.3 546.4L1139.1 528.7L1139.1 514.6L1140.3 532.0ZM1139.1 514.6L1140.8 499.2L1140.8 514.1L1139.1 528.7ZM1140.8 514.1L1138.6 512.0L1138.6 497.6L1140.8 499.2ZM1138.6 512.0L1136.1 511.0L1136.1 495.7L1138.6 497.6ZM1136.1 511.0L1134.0 512.6L1134.0 498.2L1136.1 495.7ZM1134.0 512.6L1133.3 514.9L1133.3 500.4L1134.0 498.2ZM1133.3 500.4L1135.0 509.3L1135.0 523.1L1133.3 514.9ZM1135.0 523.1L1131.7 534.5L1131.7 520.3L1135.0 509.3ZM1131.7 534.5L1131.4 540.3L1131.4 526.3L1131.7 520.3ZM1131.4 540.3L1128.6 547.4L1128.6 532.0L1131.4 526.3ZM1128.6 547.4L1125.5 551.5L1125.5 534.9L1128.6 532.0ZM1125.5 551.5L1121.6 557.2L1121.6 541.4L1125.5 534.9ZM1121.6 557.2L1115.9 557.7L1115.9 542.5L1121.6 541.4ZM1115.9 557.7L1107.5 561.7L1107.5 546.1L1115.9 542.5ZM1107.5 561.7L1104.7 560.3L1104.7 543.8L1107.5 546.1ZM1104.7 560.3L1100.5 559.3L1100.5 542.6L1104.7 543.8ZM1100.5 559.3L1096.9 561.5L1096.9 546.9L1100.5 542.6ZM1096.9 561.5L1093.5 564.7L1093.5 548.5L1096.9 546.9ZM1093.5 564.7L1086.8 566.0L1086.8 550.8L1093.5 548.5ZM1086.8 566.0L1079.4 575.0L1079.4 557.8L1086.8 550.8ZM1079.4 575.0L1072.0 579.8L1072.0 563.1L1079.4 557.8ZM1072.0 579.8L1065.3 583.6L1065.3 567.2L1072.0 563.1ZM1065.3 583.6L1056.2 589.7L1056.2 573.0L1065.3 567.2ZM1056.2 589.7L1051.3 596.0L1051.3 578.9L1056.2 573.0ZM1051.3 596.0L1044.3 597.6L1044.3 582.5L1051.3 578.9ZM1044.3 597.6L1037.2 601.9L1037.2 586.0L1044.3 582.5ZM1037.2 601.9L1033.0 604.1L1033.0 589.0L1037.2 586.0ZM1033.0 604.1L1025.5 608.5L1025.5 593.0L1033.0 589.0ZM1025.5 608.5L1020.9 610.4L1020.9 592.6L1025.5 593.0ZM1020.9 610.4L1013.8 609.7L1013.8 593.0L1020.9 592.6ZM1013.8 609.7L1004.3 613.4L1004.3 597.7L1013.8 593.0ZM1004.3 613.4L995.0 614.9L995.0 598.9L1004.3 597.7ZM995.0 614.9L984.6 615.2L984.6 598.8L995.0 598.9ZM984.6 615.2L976.3 610.6L976.3 595.3L984.6 598.8ZM976.3 610.6L972.9 610.7L972.9 593.2L976.3 595.3ZM972.9 610.7L966.9 606.7L966.9 590.6L972.9 593.2ZM966.9 606.7L963.4 602.1L963.4 587.0L966.9 590.6ZM963.4 602.1L958.7 601.2L958.7 584.8L963.4 587.0ZM958.7 584.8L962.1 581.9L962.1 598.0L958.7 601.2ZM962.1 581.9L964.5 578.9L964.5 596.0L962.1 598.0ZM964.5 596.0L961.3 591.8L961.3 576.3L964.5 578.9ZM961.3 591.8L955.2 589.6L955.2 574.2L961.3 576.3ZM955.2 589.6L951.2 584.7L951.2 568.6L955.2 574.2ZM951.2 584.7L943.4 575.9L943.4 560.2L951.2 568.6ZM943.4 575.9L939.7 569.9L939.7 555.1L943.4 560.2ZM939.7 569.9L936.4 569.6L936.4 553.1L939.7 555.1ZM936.4 569.6L935.6 564.2L935.6 547.4L936.4 553.1ZM935.6 564.2L935.2 560.4L935.2 543.8L935.6 547.4ZM935.2 543.8L935.2 540.2L935.2 556.3L935.2 560.4ZM935.2 540.2L939.7 536.1L939.7 551.6L935.2 556.3ZM939.7 536.1L942.3 532.0L942.3 548.3L939.7 551.6ZM942.3 548.3L942.1 543.6L942.1 529.0L942.3 532.0ZM942.1 543.6L939.9 539.3L939.9 525.0L942.1 529.0ZM939.9 539.3L937.6 527.3L937.6 512.1L939.9 525.0Z" fill="url(#wallpat)" fill-rule="nonzero"/><path d="M937.6 512.1L938.8 508.4L938.8 524.4L937.6 527.3ZM938.8 508.4L939.2 506.2L939.2 522.5L938.8 524.4ZM939.2 506.2L943.3 502.9L943.3 517.3L939.2 522.5ZM943.3 502.9L945.8 501.6L945.8 517.3L943.3 517.3ZM945.8 501.6L947.4 498.3L947.4 513.8L945.8 517.3ZM947.4 498.3L947.7 496.1L947.7 511.4L947.4 513.8ZM947.7 496.1L951.1 494.4L951.1 508.2L947.7 511.4ZM951.1 494.4L952.8 492.2L952.8 505.8L951.1 508.2ZM952.8 505.8L952.2 504.4L952.2 489.9L952.8 492.2ZM952.2 489.9L953.2 487.8L953.2 503.2L952.2 504.4ZM953.2 487.8L955.2 485.1L955.2 499.2L953.2 503.2ZM955.2 485.1L955.2 480.5L955.2 495.1L955.2 499.2ZM955.2 480.5L958.7 479.1L958.7 493.2L955.2 495.1ZM958.7 479.1L959.8 476.8L959.8 492.3L958.7 493.2ZM959.8 476.8L960.6 475.3L960.6 491.0L959.8 492.3ZM960.6 475.3L961.0 473.4L961.0 487.7L960.6 491.0ZM961.0 473.4L961.3 468.4L961.3 484.2L961.0 487.7ZM961.3 484.2L960.7 478.2L960.7 465.0L961.3 468.4ZM960.7 465.0L962.4 461.7L962.4 476.8L960.7 478.2ZM962.4 461.7L963.4 459.4L963.4 474.7L962.4 476.8ZM963.4 459.4L964.9 456.6L964.9 469.9L963.4 474.7ZM964.9 456.6L965.4 454.0L965.4 468.7L964.9 469.9ZM965.4 454.0L967.8 453.0L967.8 467.3L965.4 468.7ZM967.8 453.0L969.2 450.0L969.2 465.3L967.8 467.3ZM969.2 465.3L965.7 463.4L965.7 450.0L969.2 450.0ZM965.7 450.0L966.6 446.6L966.6 460.8L965.7 463.4ZM966.6 446.6L968.4 445.4L968.4 460.4L966.6 460.8ZM968.4 445.4L968.9 440.5L968.9 454.8L968.4 460.4ZM968.9 454.8L966.9 451.8L966.9 438.3L968.9 440.5ZM966.9 438.3L969.3 433.7L969.3 446.5L966.9 451.8ZM969.3 433.7L973.4 432.4L973.4 447.4L969.3 446.5ZM973.4 432.4L973.5 428.5L973.5 442.2L973.4 447.4ZM973.5 428.5L975.1 426.6L975.1 441.6L973.5 442.2ZM975.1 426.6L976.9 422.3L976.9 435.1L975.1 441.6ZM976.9 422.3L977.1 419.6L977.1 434.0L976.9 435.1ZM977.1 419.6L978.0 417.7L978.0 432.1L977.1 434.0ZM978.0 417.7L980.9 416.0L980.9 430.6L978.0 432.1ZM980.9 416.0L983.4 415.1L983.4 427.5L980.9 430.6ZM983.4 415.1L985.4 414.0L985.4 427.2L983.4 427.5ZM985.4 414.0L988.9 412.7L988.9 425.1L985.4 427.2ZM988.9 412.7L990.3 410.2L990.3 424.3L988.9 425.1ZM990.3 410.2L990.4 407.5L990.4 420.6L990.3 424.3ZM990.4 407.5L993.1 405.2L993.1 419.7L990.4 420.6ZM993.1 419.7L991.9 415.5L991.9 402.5L993.1 405.2ZM991.9 402.5L992.7 400.8L992.7 414.8L991.9 415.5ZM992.7 400.8L994.1 396.0L994.1 410.1L992.7 414.8ZM994.1 396.0L996.9 394.1L996.9 406.7L994.1 410.1ZM996.9 394.1L1000.1 393.8L1000.1 407.1L996.9 406.7ZM1000.1 393.8L1002.0 392.6L1002.0 406.9L1000.1 407.1ZM1002.0 392.6L1005.7 389.7L1005.7 402.9L1002.0 406.9ZM1005.7 389.7L1007.8 387.7L1007.8 400.5L1005.7 402.9ZM1007.8 387.7L1009.3 383.7L1009.3 396.2L1007.8 400.5ZM1009.3 383.7L1011.4 382.0L1011.4 395.7L1009.3 396.2ZM1011.4 382.0L1014.0 379.4L1014.0 391.6L1011.4 395.7ZM1014.0 379.4L1016.6 378.0L1016.6 391.2L1014.0 391.6ZM1016.6 378.0L1020.7 378.4L1020.7 391.5L1016.6 391.2ZM1020.7 378.4L1023.1 377.4L1023.1 390.5L1020.7 391.5ZM1023.1 377.4L1026.6 374.6L1026.6 386.6L1023.1 390.5ZM1026.6 374.6L1030.1 371.5L1030.1 384.7L1026.6 386.6ZM1030.1 371.5L1033.5 369.6L1033.5 383.4L1030.1 384.7ZM1033.5 369.6L1039.5 371.5L1039.5 383.9L1033.5 383.4ZM1039.5 371.5L1045.5 370.9L1045.5 383.3L1039.5 383.9ZM1045.5 370.9L1050.9 370.4L1050.9 384.2L1045.5 383.3ZM1050.9 370.4L1054.2 367.7L1054.2 380.7L1050.9 384.2ZM1054.2 367.7L1056.0 365.6L1056.0 377.8L1054.2 380.7ZM1056.0 365.6L1059.0 363.9L1059.0 375.5L1056.0 377.8ZM1059.0 363.9L1064.1 362.4L1064.1 375.7L1059.0 375.5ZM1064.1 362.4L1068.9 362.3L1068.9 374.6L1064.1 375.7ZM1068.9 362.3L1072.4 362.1L1072.4 374.7L1068.9 374.6ZM1072.4 362.1L1076.3 363.0L1076.3 375.2L1072.4 374.7ZM1076.3 363.0L1082.7 360.4L1082.7 373.4L1076.3 375.2ZM1082.7 360.4L1086.0 358.2L1086.0 371.3L1082.7 373.4ZM1086.0 358.2L1088.8 358.6L1088.8 370.8L1086.0 371.3ZM1088.8 358.6L1091.2 358.2L1091.2 369.8L1088.8 370.8ZM1091.2 358.2L1093.5 358.3L1093.5 372.0L1091.2 369.8ZM1093.5 358.3L1095.8 356.3L1095.8 369.8L1093.5 372.0ZM1095.8 369.8L1095.4 366.3L1095.4 354.8L1095.8 356.3ZM1095.4 366.3L1094.9 365.5L1094.9 352.8L1095.4 354.8ZM1094.9 365.5L1094.1 363.4L1094.1 350.5L1094.9 352.8ZM1094.1 350.5L1097.3 348.9L1097.3 361.1L1094.1 363.4ZM1097.3 348.9L1101.4 347.6L1101.4 360.6L1097.3 361.1ZM1101.4 347.6L1105.2 347.2L1105.2 360.7L1101.4 360.6ZM1105.2 347.2L1107.5 346.9L1107.5 359.5L1105.2 360.7ZM1107.5 346.9L1108.0 344.3L1108.0 356.4L1107.5 359.5ZM1108.0 344.3L1109.9 341.0L1109.9 352.6L1108.0 356.4ZM1109.9 341.0L1113.7 337.0L1113.7 348.7L1109.9 352.6ZM1113.7 337.0L1117.8 336.8L1117.8 348.3L1113.7 348.7ZM1117.8 336.8L1121.8 337.2L1121.8 348.6L1117.8 348.3ZM1121.8 337.2L1123.9 338.7L1123.9 350.3L1121.8 348.6ZM1123.9 338.7L1124.5 340.5L1124.5 353.6L1123.9 350.3ZM1124.5 340.5L1124.9 342.0L1124.9 354.4L1124.5 353.6ZM1124.9 342.0L1128.7 344.2L1128.7 357.3L1124.9 354.4ZM1128.7 344.2L1131.4 343.6L1131.4 356.9L1128.7 357.3ZM1131.4 343.6L1134.1 344.6L1134.1 357.7L1131.4 356.9ZM1134.1 344.6L1138.0 343.4L1138.0 354.8L1134.1 357.7ZM1138.0 343.4L1140.0 340.8L1140.0 354.1L1138.0 354.8ZM1140.0 340.8L1142.7 338.7L1142.7 350.1L1140.0 354.1ZM1142.7 338.7L1147.3 336.3L1147.3 349.2L1142.7 350.1ZM1147.3 336.3L1149.2 331.8L1149.2 344.7L1147.3 349.2ZM1149.2 331.8L1151.8 329.9L1151.8 342.4L1149.2 344.7ZM1151.8 329.9L1154.4 330.5L1154.4 342.4L1151.8 342.4ZM1154.4 330.5L1156.9 327.5L1156.9 338.7L1154.4 342.4ZM1156.9 327.5L1159.8 323.6L1159.8 334.7L1156.9 338.7ZM1159.8 323.6L1164.6 322.7L1164.6 335.0L1159.8 334.7ZM1164.6 322.7L1168.8 320.0L1168.8 331.4L1164.6 335.0ZM1168.8 331.4L1167.7 329.5L1167.7 317.5L1168.8 320.0ZM1167.7 317.5L1168.5 314.8L1168.5 326.2L1167.7 329.5ZM1168.5 314.8L1169.7 313.2L1169.7 324.3L1168.5 326.2ZM1169.7 313.2L1169.9 310.6L1169.9 322.0L1169.7 324.3ZM1169.9 310.6L1172.2 311.2L1172.2 323.5L1169.9 322.0ZM1172.2 311.2L1175.0 310.7L1175.0 322.5L1172.2 323.5ZM1175.0 310.7L1178.7 309.5L1178.7 321.1L1175.0 322.5ZM1178.7 309.5L1180.5 308.3L1180.5 320.1L1178.7 321.1ZM1180.5 308.3L1183.5 307.8L1183.5 319.7L1180.5 320.1ZM1183.5 307.8L1185.8 307.0L1185.8 318.8L1183.5 319.7ZM1185.8 307.0L1189.0 307.2L1189.0 318.8L1185.8 318.8ZM1189.0 307.2L1192.2 304.8L1192.2 317.5L1189.0 318.8ZM1192.2 304.8L1192.9 300.9L1192.9 313.1L1192.2 317.5ZM1192.9 313.1L1190.9 308.3L1190.9 297.3L1192.9 300.9ZM1190.9 297.3L1192.7 295.8L1192.7 307.0L1190.9 308.3ZM1192.7 295.8L1193.4 293.1L1193.4 304.0L1192.7 307.0ZM1193.4 293.1L1195.3 291.5L1195.3 302.7L1193.4 304.0ZM1195.3 291.5L1197.6 291.2L1197.6 301.7L1195.3 302.7ZM1197.6 291.2L1199.2 290.7L1199.2 302.7L1197.6 301.7ZM1199.2 290.7L1200.0 288.0L1200.0 299.6L1199.2 302.7ZM1200.0 288.0L1202.3 286.2L1202.3 297.5L1200.0 299.6ZM1202.3 286.2L1203.0 284.0L1203.0 296.2L1202.3 297.5ZM1203.0 284.0L1203.9 282.5L1203.9 293.5L1203.0 296.2ZM1203.9 282.5L1205.1 281.0L1205.1 292.5L1203.9 293.5ZM1205.1 281.0L1206.6 280.5L1206.6 292.7L1205.1 292.5ZM1206.6 280.5L1210.9 279.0L1210.9 290.4L1206.6 292.7ZM1210.9 279.0L1212.0 276.6L1212.0 288.1L1210.9 290.4ZM1212.0 276.6L1213.6 275.6L1213.6 286.6L1212.0 288.1ZM1213.6 275.6L1216.1 272.4L1216.1 284.6L1213.6 286.6ZM1216.1 272.4L1218.0 270.8L1218.0 282.5L1216.1 284.6ZM1218.0 270.8L1220.0 269.4L1220.0 280.1L1218.0 282.5ZM1220.0 269.4L1222.1 268.6L1222.1 279.4L1220.0 280.1ZM1222.1 268.6L1223.9 264.4L1223.9 275.6L1222.1 279.4ZM1223.9 264.4L1227.4 262.6L1227.4 273.7L1223.9 275.6ZM1227.4 262.6L1231.8 263.3L1231.8 274.4L1227.4 273.7ZM1231.8 263.3L1236.0 260.6L1236.0 271.0L1231.8 274.4ZM1236.0 260.6L1237.6 258.8L1237.6 269.9L1236.0 271.0ZM1237.6 258.8L1239.1 255.6L1239.1 266.9L1237.6 269.9ZM1239.1 255.6L1240.6 254.0L1240.6 265.4L1239.1 266.9ZM1240.6 254.0L1243.1 252.8L1243.1 263.6L1240.6 265.4ZM1243.1 263.6L1242.5 262.0L1242.5 251.3L1243.1 252.8ZM1242.5 251.3L1243.8 249.0L1243.8 259.8L1242.5 262.0ZM1243.8 259.8L1240.4 259.2L1240.4 248.3L1243.8 249.0ZM1240.4 259.2L1238.5 259.9L1238.5 249.1L1240.4 248.3ZM1238.5 259.9L1233.8 255.6L1233.8 245.8L1238.5 249.1ZM1233.8 255.6L1229.7 255.8L1229.7 245.5L1233.8 245.8ZM1229.7 255.8L1222.9 258.5L1222.9 246.8L1229.7 245.5ZM1222.9 258.5L1219.2 256.4L1219.2 245.0L1222.9 246.8ZM1219.2 256.4L1216.4 257.2L1216.4 246.5L1219.2 245.0ZM1216.4 257.2L1213.8 259.1L1213.8 247.8L1216.4 246.5ZM1213.8 259.1L1213.5 256.3L1213.5 246.1L1213.8 247.8ZM1213.5 246.1L1215.2 245.0L1215.2 255.3L1213.5 256.3ZM1215.2 245.0L1217.3 243.0L1217.3 253.7L1215.2 255.3ZM1217.3 243.0L1219.8 241.4L1219.8 252.5L1217.3 253.7ZM1219.8 241.4L1220.3 239.2L1220.3 248.9L1219.8 252.5ZM1220.3 239.2L1222.7 238.2L1222.7 248.8L1220.3 248.9ZM1222.7 238.2L1226.0 235.7L1226.0 247.1L1222.7 248.8ZM1226.0 235.7L1230.7 236.6L1230.7 247.4L1226.0 247.1ZM1230.7 236.6L1234.4 235.6L1234.4 247.1L1230.7 247.4ZM1234.4 235.6L1234.7 234.0L1234.7 243.8L1234.4 247.1ZM1234.7 234.0L1235.3 231.6L1235.3 242.9L1234.7 243.8ZM1235.3 231.6L1235.6 229.8L1235.6 240.9L1235.3 242.9ZM1235.6 229.8L1239.1 229.8L1239.1 239.4L1235.6 240.9ZM1239.1 229.8L1243.0 229.1L1243.0 239.6L1239.1 239.4ZM1243.0 229.1L1247.0 225.6L1247.0 236.5L1243.0 239.6ZM1247.0 225.6L1248.5 222.7L1248.5 232.5L1247.0 236.5ZM1248.5 222.7L1249.8 220.5L1249.8 231.1L1248.5 232.5ZM1249.8 220.5L1252.5 218.9L1252.5 229.9L1249.8 231.1ZM1252.5 218.9L1255.4 219.4L1255.4 230.3L1252.5 229.9ZM1255.4 219.4L1259.0 219.2L1259.0 229.4L1255.4 230.3ZM1259.0 219.2L1260.9 221.4L1260.9 230.9L1259.0 229.4ZM1260.9 230.9L1260.3 235.2L1260.3 224.7L1260.9 221.4ZM1260.3 224.7L1261.3 226.3L1261.3 236.1L1260.3 235.2ZM1261.3 226.3L1263.1 225.3L1263.1 235.8L1261.3 236.1ZM1263.1 225.3L1265.3 224.5L1265.3 234.5L1263.1 235.8ZM1265.3 224.5L1267.1 223.8L1267.1 233.9L1265.3 234.5ZM1267.1 223.8L1267.6 220.6L1267.6 231.0L1267.1 233.9ZM1267.6 220.6L1268.4 219.1L1268.4 230.0L1267.6 231.0ZM1268.4 219.1L1269.5 216.9L1269.5 228.1L1268.4 230.0ZM1269.5 216.9L1273.8 215.4L1273.8 225.5L1269.5 228.1ZM1273.8 215.4L1276.9 213.5L1276.9 222.8L1273.8 225.5ZM1276.9 213.5L1279.2 213.8L1279.2 224.5L1276.9 222.8ZM1279.2 213.8L1281.3 212.2L1281.3 222.1L1279.2 224.5ZM1281.3 212.2L1281.3 209.5L1281.3 220.1L1281.3 222.1ZM1281.3 209.5L1282.6 207.5L1282.6 218.2L1281.3 220.1ZM1282.6 207.5L1285.4 207.4L1285.4 216.6L1282.6 218.2ZM1285.4 207.4L1288.3 204.0L1288.3 214.5L1285.4 216.6ZM1288.3 204.0L1291.3 203.0L1291.3 212.6L1288.3 214.5ZM1291.3 203.0L1292.2 201.4L1292.2 211.1L1291.3 212.6ZM1292.2 201.4L1296.4 200.9L1296.4 210.6L1292.2 211.1ZM1296.4 200.9L1300.0 201.6L1300.0 211.7L1296.4 210.6ZM1300.0 201.6L1302.0 200.7L1302.0 210.2L1300.0 211.7ZM1302.0 200.7L1305.4 200.8L1305.4 210.8L1302.0 210.2ZM1305.4 200.8L1306.7 202.4L1306.7 212.0L1305.4 210.8ZM1306.7 202.4L1309.4 202.8L1309.4 212.1L1306.7 212.0ZM1309.4 202.8L1312.5 202.6L1312.5 212.2L1309.4 212.1ZM1312.5 202.6L1314.1 201.5L1314.1 211.8L1312.5 212.2ZM1314.1 201.5L1317.1 199.7L1317.1 209.3L1314.1 211.8ZM1317.1 199.7L1322.3 199.3L1322.3 208.7L1317.1 209.3ZM1322.3 199.3L1324.6 197.3L1324.6 207.0L1322.3 208.7ZM1324.6 197.3L1325.1 195.7L1325.1 205.1L1324.6 207.0ZM1325.1 205.1L1324.6 204.1L1324.6 193.4L1325.1 195.7ZM1324.6 193.4L1327.4 192.8L1327.4 203.2L1324.6 204.1ZM1327.4 192.8L1329.6 192.2L1329.6 201.4L1327.4 203.2ZM1329.6 192.2L1334.4 189.9L1334.4 199.3L1329.6 201.4ZM1334.4 189.9L1337.5 189.9L1337.5 199.6L1334.4 199.3ZM1337.5 189.9L1340.5 187.6L1340.5 197.4L1337.5 199.6ZM1340.5 187.6L1344.2 187.4L1344.2 197.0L1340.5 197.4ZM1344.2 187.4L1345.9 186.0L1345.9 195.8L1344.2 197.0ZM1345.9 186.0L1349.2 186.4L1349.2 196.6L1345.9 195.8ZM1349.2 186.4L1352.3 184.4L1352.3 193.5L1349.2 196.6ZM1352.3 184.4L1356.8 184.8L1356.8 194.6L1352.3 193.5ZM1356.8 184.8L1358.5 185.5L1358.5 194.6L1356.8 194.6ZM1358.5 185.5L1361.0 184.1L1361.0 193.9L1358.5 194.6ZM1361.0 184.1L1362.6 185.0L1362.6 194.4L1361.0 193.9ZM1362.6 185.0L1365.0 184.7L1365.0 195.0L1362.6 194.4ZM1365.0 184.7L1367.8 186.2L1367.8 196.6L1365.0 195.0ZM1367.8 186.2L1370.3 186.4L1370.3 197.0L1367.8 196.6ZM1370.3 186.4L1372.2 186.1L1372.2 195.7L1370.3 197.0ZM1372.2 186.1L1376.7 184.2L1376.7 194.1L1372.2 195.7ZM1376.7 184.2L1378.6 182.9L1378.6 192.0L1376.7 194.1ZM1378.6 182.9L1380.9 185.0L1380.9 195.1L1378.6 192.0ZM1380.9 185.0L1383.6 186.1L1383.6 196.3L1380.9 195.1ZM1383.6 186.1L1388.0 185.8L1388.0 195.4L1383.6 196.3ZM1388.0 185.8L1391.4 185.2L1391.4 194.6L1388.0 195.4ZM1391.4 185.2L1395.0 184.1L1395.0 194.3L1391.4 194.6ZM1395.0 184.1L1398.5 185.2L1398.5 195.4L1395.0 194.3ZM1398.5 185.2L1401.3 185.2L1401.3 195.5L1398.5 195.4ZM1401.3 185.2L1403.2 185.2L1403.2 194.6L1401.3 195.5ZM1403.2 185.2L1405.2 184.3L1405.2 193.6L1403.2 194.6ZM1405.2 184.3L1408.6 185.0L1408.6 194.3L1405.2 193.6ZM1408.6 185.0L1414.3 186.4L1414.3 195.6L1408.6 194.3ZM1414.3 186.4L1417.2 188.8L1417.2 197.7L1414.3 195.6ZM1417.2 188.8L1420.2 188.9L1420.2 198.0L1417.2 197.7ZM1420.2 188.9L1423.5 188.0L1423.5 197.8L1420.2 198.0ZM1423.5 188.0L1428.5 189.3L1428.5 199.0L1423.5 197.8ZM1428.5 189.3L1431.3 191.1L1431.3 201.6L1428.5 199.0ZM1431.3 201.6L1431.1 202.2L1431.1 192.6L1431.3 191.1ZM1431.1 202.2L1430.7 203.5L1430.7 194.2L1431.1 192.6ZM1430.7 194.2L1430.7 195.9L1430.7 206.6L1430.7 203.5ZM1430.7 195.9L1432.5 198.1L1432.5 207.3L1430.7 206.6ZM1432.5 198.1L1434.4 198.6L1434.4 208.3L1432.5 207.3ZM1434.4 198.6L1437.1 197.0L1437.1 207.4L1434.4 208.3ZM1437.1 197.0L1440.0 197.5L1440.0 207.1L1437.1 207.4ZM1440.0 197.5L1443.0 200.5L1443.0 211.3L1440.0 207.1ZM1443.0 211.3L1437.2 215.7L1437.2 205.2L1443.0 200.5ZM1437.2 215.7L1435.1 220.3L1435.1 210.5L1437.2 205.2ZM1435.1 220.3L1434.8 225.4L1434.8 214.5L1435.1 210.5ZM1434.8 225.4L1431.3 225.9L1431.3 214.9L1434.8 214.5ZM1431.3 225.9L1427.8 224.8L1427.8 214.5L1431.3 214.9ZM1427.8 224.8L1427.3 220.6L1427.3 211.1L1427.8 214.5ZM1427.3 220.6L1425.4 214.5L1425.4 205.2L1427.3 211.1ZM1425.4 214.5L1421.9 214.6L1421.9 204.0L1425.4 205.2ZM1421.9 214.6L1415.1 213.2L1415.1 202.5L1421.9 204.0ZM1415.1 213.2L1407.9 213.1L1407.9 202.8L1415.1 202.5ZM1407.9 213.1L1402.6 211.5L1402.6 201.0L1407.9 202.8ZM1402.6 211.5L1396.1 211.0L1396.1 200.5L1402.6 201.0ZM1396.1 211.0L1391.8 210.8L1391.8 201.3L1396.1 200.5ZM1391.8 210.8L1386.8 213.5L1386.8 204.0L1391.8 201.3ZM1386.8 213.5L1386.3 218.8L1386.3 208.0L1386.8 204.0ZM1386.3 218.8L1385.6 221.8L1385.6 211.0L1386.3 208.0ZM1385.6 211.0L1388.9 214.3L1388.9 224.4L1385.6 221.8ZM1388.9 214.3L1392.6 216.9L1392.6 226.7L1388.9 224.4ZM1392.6 226.7L1391.6 228.7L1391.6 219.2L1392.6 216.9ZM1391.6 228.7L1390.3 232.9L1390.3 222.7L1391.6 219.2ZM1390.3 232.9L1384.2 235.9L1384.2 224.7L1390.3 222.7ZM1384.2 235.9L1379.7 234.9L1379.7 225.1L1384.2 224.7ZM1379.7 234.9L1374.2 234.0L1374.2 224.0L1379.7 225.1ZM1374.2 234.0L1370.3 233.4L1370.3 223.9L1374.2 224.0ZM1370.3 233.4L1364.8 237.0L1364.8 226.4L1370.3 223.9ZM1364.8 237.0L1361.0 237.0L1361.0 227.4L1364.8 226.4ZM1361.0 237.0L1356.7 236.4L1356.7 225.7L1361.0 227.4ZM1356.7 236.4L1349.2 235.5L1349.2 225.1L1356.7 225.7ZM1349.2 235.5L1342.2 231.3L1342.2 221.1L1349.2 225.1ZM1342.2 231.3L1337.5 227.9L1337.5 218.1L1342.2 221.1ZM1337.5 227.9L1334.4 228.6L1334.4 218.7L1337.5 218.1ZM1334.4 228.6L1329.3 229.1L1329.3 218.1L1334.4 218.7ZM1329.3 229.1L1326.4 232.1L1326.4 220.9L1329.3 218.1ZM1326.4 232.1L1323.5 233.5L1323.5 222.7L1326.4 220.9ZM1323.5 233.5L1322.5 239.3L1322.5 229.4L1323.5 222.7ZM1322.5 239.3L1322.3 243.3L1322.3 233.3L1322.5 229.4ZM1322.3 243.3L1319.0 242.8L1319.0 232.5L1322.3 233.3ZM1319.0 242.8L1314.1 243.3L1314.1 232.1L1319.0 232.5ZM1314.1 243.3L1308.9 241.6L1308.9 230.3L1314.1 232.1ZM1308.9 241.6L1302.4 240.9L1302.4 230.9L1308.9 230.3ZM1302.4 240.9L1297.3 242.4L1297.3 231.6L1302.4 230.9ZM1297.3 242.4L1294.2 242.4L1294.2 232.1L1297.3 231.6ZM1294.2 242.4L1293.2 247.0L1293.2 236.5L1294.2 232.1ZM1293.2 247.0L1293.0 250.4L1293.0 240.3L1293.2 236.5ZM1293.0 250.4L1288.1 250.5L1288.1 239.4L1293.0 240.3ZM1288.1 250.5L1284.8 251.5L1284.8 240.3L1288.1 239.4ZM1284.8 251.5L1282.4 252.9L1282.4 241.4L1284.8 240.3ZM1282.4 252.9L1277.8 253.4L1277.8 242.7L1282.4 241.4ZM1277.8 253.4L1276.5 261.0L1276.5 250.3L1277.8 242.7ZM1276.5 261.0L1274.2 267.9L1274.2 256.7L1276.5 250.3ZM1274.2 267.9L1272.4 271.2L1272.4 260.9L1274.2 256.7ZM1272.4 271.2L1269.5 275.6L1269.5 263.8L1272.4 260.9ZM1269.5 275.6L1265.1 281.2L1265.1 269.5L1269.5 263.8ZM1265.1 281.2L1262.5 283.7L1262.5 273.1L1265.1 269.5ZM1262.5 283.7L1261.3 286.7L1261.3 275.7L1262.5 273.1ZM1261.3 286.7L1260.2 291.5L1260.2 280.2L1261.3 275.7ZM1260.2 291.5L1255.2 294.2L1255.2 282.1L1260.2 280.2ZM1255.2 294.2L1248.5 294.3L1248.5 282.5L1255.2 282.1ZM1248.5 282.5L1248.9 288.4L1248.9 299.3L1248.5 294.3ZM1248.9 299.3L1247.3 306.7L1247.3 294.2L1248.9 288.4ZM1247.3 306.7L1246.3 311.6L1246.3 299.1L1247.3 294.2ZM1246.3 299.1L1247.3 306.0L1247.3 318.5L1246.3 311.6ZM1247.3 318.5L1245.2 324.4L1245.2 312.6L1247.3 306.0ZM1245.2 324.4L1241.4 328.4L1241.4 316.5L1245.2 312.6ZM1241.4 328.4L1238.0 332.6L1238.0 320.8L1241.4 316.5ZM1238.0 332.6L1234.4 335.5L1234.4 322.4L1238.0 320.8ZM1234.4 322.4L1237.8 327.0L1237.8 339.1L1234.4 335.5ZM1237.8 327.0L1243.8 330.6L1243.8 343.8L1237.8 339.1ZM1243.8 343.8L1242.6 346.8L1242.6 335.3L1243.8 330.6ZM1242.6 346.8L1230.7 348.1L1230.7 336.9L1242.6 335.3ZM1230.7 348.1L1220.3 348.6L1220.3 336.4L1230.7 336.9ZM1220.3 348.6L1213.0 354.0L1213.0 342.3L1220.3 336.4ZM1213.0 354.0L1203.9 360.1L1203.9 348.2L1213.0 342.3ZM1203.9 360.1L1201.3 360.6L1201.3 349.2L1203.9 348.2ZM1201.3 360.6L1198.1 364.9L1198.1 353.2L1201.3 349.2ZM1198.1 364.9L1196.6 373.4L1196.6 360.9L1198.1 353.2ZM1196.6 360.9L1197.0 368.6L1197.0 380.4L1196.6 373.4ZM1197.0 380.4L1196.6 394.5L1196.6 382.0L1197.0 368.6ZM1196.6 382.0L1198.7 399.4L1198.7 413.0L1196.6 394.5ZM1198.7 399.4L1198.9 412.5L1198.9 425.4L1198.7 413.0ZM1198.9 412.5L1207.1 417.8L1207.1 430.9L1198.9 425.4ZM1207.1 417.8L1210.7 421.9L1210.7 435.3L1207.1 430.9ZM1210.7 421.9L1212.8 428.4L1212.8 441.6L1210.7 435.3ZM1212.8 428.4L1215.4 431.3L1215.4 445.3L1212.8 441.6ZM1215.4 445.3L1213.2 450.8L1213.2 436.2L1215.4 431.3ZM1213.2 450.8L1213.0 453.4L1213.0 440.6L1213.2 436.2ZM1213.0 453.4L1205.8 455.9L1205.8 441.8L1213.0 440.6ZM1205.8 455.9L1198.9 459.4L1198.9 445.3L1205.8 441.8ZM1198.9 445.3L1202.3 454.3L1202.3 469.6L1198.9 459.4ZM1202.3 454.3L1204.8 460.6L1204.8 475.4L1202.3 469.6ZM1204.8 460.6L1206.0 465.9L1206.0 479.7L1204.8 475.4ZM1206.0 465.9L1208.3 471.1L1208.3 485.9L1206.0 479.7ZM1208.3 485.9L1207.1 483.4L1207.1 467.9L1208.3 471.1ZM1207.1 467.9L1207.2 464.1L1207.2 479.7L1207.1 483.4ZM1207.2 464.1L1208.4 469.4L1208.4 484.6L1207.2 479.7ZM1208.4 484.6L1208.3 486.9L1208.3 473.4L1208.4 469.4ZM1208.3 486.9L1206.6 495.8L1206.6 481.5L1208.3 473.4ZM1206.6 481.5L1207.2 489.8L1207.2 504.5L1206.6 495.8ZM1207.2 504.5L1204.7 508.0L1204.7 493.6L1207.2 489.8ZM1204.7 508.0L1198.9 512.5L1198.9 496.9L1204.7 493.6ZM1198.9 512.5L1193.4 512.9L1193.4 498.0L1198.9 496.9ZM1193.4 512.9L1184.9 516.7L1184.9 500.4L1193.4 498.0ZM1184.9 500.4L1185.4 504.2L1185.4 517.9L1184.9 516.7ZM1185.4 517.9L1184.9 524.6L1184.9 508.6L1185.4 504.2ZM1184.9 524.6L1180.4 524.1L1180.4 510.0L1184.9 508.6ZM1180.4 524.1L1176.7 528.5L1176.7 513.3L1180.4 510.0ZM1176.7 513.3L1178.5 520.2L1178.5 534.5L1176.7 528.5ZM1178.5 520.2L1180.2 529.7L1180.2 544.8L1178.5 534.5ZM1180.2 544.8L1178.5 551.3L1178.5 535.4L1180.2 529.7ZM1178.5 551.3L1177.9 556.0L1177.9 539.1L1178.5 535.4ZM1177.9 556.0L1176.4 558.6L1176.4 544.2L1177.9 539.1ZM1176.4 558.6L1174.3 566.3L1174.3 550.8L1176.4 544.2ZM1174.3 566.3L1171.6 567.1L1171.6 552.4L1174.3 550.8ZM1171.6 567.1L1168.5 569.7L1168.5 553.1L1171.6 552.4ZM1168.5 569.7L1167.0 563.7L1167.0 548.9L1168.5 553.1ZM1167.0 563.7L1166.1 558.6L1166.1 543.8L1167.0 548.9ZM1166.1 558.6L1160.4 558.6L1160.4 542.1L1166.1 543.8ZM1160.4 558.6L1156.8 554.6L1156.8 540.2L1160.4 542.1ZM1156.8 554.6L1150.2 556.2L1150.2 539.5L1156.8 540.2ZM1150.2 556.2L1145.0 556.4L1145.0 541.4L1150.2 539.5ZM1145.0 556.4L1141.8 552.6L1141.8 535.6L1145.0 541.4ZM1141.8 552.6L1140.3 546.4L1140.3 532.0L1141.8 535.6ZM1140.3 546.4L1139.1 528.7L1139.1 514.6L1140.3 532.0ZM1139.1 514.6L1140.8 499.2L1140.8 514.1L1139.1 528.7ZM1140.8 514.1L1138.6 512.0L1138.6 497.6L1140.8 499.2ZM1138.6 512.0L1136.1 511.0L1136.1 495.7L1138.6 497.6ZM1136.1 511.0L1134.0 512.6L1134.0 498.2L1136.1 495.7ZM1134.0 512.6L1133.3 514.9L1133.3 500.4L1134.0 498.2ZM1133.3 500.4L1135.0 509.3L1135.0 523.1L1133.3 514.9ZM1135.0 523.1L1131.7 534.5L1131.7 520.3L1135.0 509.3ZM1131.7 534.5L1131.4 540.3L1131.4 526.3L1131.7 520.3ZM1131.4 540.3L1128.6 547.4L1128.6 532.0L1131.4 526.3ZM1128.6 547.4L1125.5 551.5L1125.5 534.9L1128.6 532.0ZM1125.5 551.5L1121.6 557.2L1121.6 541.4L1125.5 534.9ZM1121.6 557.2L1115.9 557.7L1115.9 542.5L1121.6 541.4ZM1115.9 557.7L1107.5 561.7L1107.5 546.1L1115.9 542.5ZM1107.5 561.7L1104.7 560.3L1104.7 543.8L1107.5 546.1ZM1104.7 560.3L1100.5 559.3L1100.5 542.6L1104.7 543.8ZM1100.5 559.3L1096.9 561.5L1096.9 546.9L1100.5 542.6ZM1096.9 561.5L1093.5 564.7L1093.5 548.5L1096.9 546.9ZM1093.5 564.7L1086.8 566.0L1086.8 550.8L1093.5 548.5ZM1086.8 566.0L1079.4 575.0L1079.4 557.8L1086.8 550.8ZM1079.4 575.0L1072.0 579.8L1072.0 563.1L1079.4 557.8ZM1072.0 579.8L1065.3 583.6L1065.3 567.2L1072.0 563.1ZM1065.3 583.6L1056.2 589.7L1056.2 573.0L1065.3 567.2ZM1056.2 589.7L1051.3 596.0L1051.3 578.9L1056.2 573.0ZM1051.3 596.0L1044.3 597.6L1044.3 582.5L1051.3 578.9ZM1044.3 597.6L1037.2 601.9L1037.2 586.0L1044.3 582.5ZM1037.2 601.9L1033.0 604.1L1033.0 589.0L1037.2 586.0ZM1033.0 604.1L1025.5 608.5L1025.5 593.0L1033.0 589.0ZM1025.5 608.5L1020.9 610.4L1020.9 592.6L1025.5 593.0ZM1020.9 610.4L1013.8 609.7L1013.8 593.0L1020.9 592.6ZM1013.8 609.7L1004.3 613.4L1004.3 597.7L1013.8 593.0ZM1004.3 613.4L995.0 614.9L995.0 598.9L1004.3 597.7ZM995.0 614.9L984.6 615.2L984.6 598.8L995.0 598.9ZM984.6 615.2L976.3 610.6L976.3 595.3L984.6 598.8ZM976.3 610.6L972.9 610.7L972.9 593.2L976.3 595.3ZM972.9 610.7L966.9 606.7L966.9 590.6L972.9 593.2ZM966.9 606.7L963.4 602.1L963.4 587.0L966.9 590.6ZM963.4 602.1L958.7 601.2L958.7 584.8L963.4 587.0ZM958.7 584.8L962.1 581.9L962.1 598.0L958.7 601.2ZM962.1 581.9L964.5 578.9L964.5 596.0L962.1 598.0ZM964.5 596.0L961.3 591.8L961.3 576.3L964.5 578.9ZM961.3 591.8L955.2 589.6L955.2 574.2L961.3 576.3ZM955.2 589.6L951.2 584.7L951.2 568.6L955.2 574.2ZM951.2 584.7L943.4 575.9L943.4 560.2L951.2 568.6ZM943.4 575.9L939.7 569.9L939.7 555.1L943.4 560.2ZM939.7 569.9L936.4 569.6L936.4 553.1L939.7 555.1ZM936.4 569.6L935.6 564.2L935.6 547.4L936.4 553.1ZM935.6 564.2L935.2 560.4L935.2 543.8L935.6 547.4ZM935.2 543.8L935.2 540.2L935.2 556.3L935.2 560.4ZM935.2 540.2L939.7 536.1L939.7 551.6L935.2 556.3ZM939.7 536.1L942.3 532.0L942.3 548.3L939.7 551.6ZM942.3 548.3L942.1 543.6L942.1 529.0L942.3 532.0ZM942.1 543.6L939.9 539.3L939.9 525.0L942.1 529.0ZM939.9 539.3L937.6 527.3L937.6 512.1L939.9 525.0Z" fill="url(#wallshade)" fill-rule="nonzero"/><path d="M937.6 512.1L938.8 508.4L939.2 506.2L943.3 502.9L945.8 501.6L947.4 498.3L947.7 496.1L951.1 494.4L952.8 492.2L952.2 489.9L953.2 487.8L955.2 485.1L955.2 480.5L958.7 479.1L959.8 476.8L960.6 475.3L961.0 473.4L961.3 468.4L960.7 465.0L962.4 461.7L963.4 459.4L964.9 456.6L965.4 454.0L967.8 453.0L969.2 450.0L965.7 450.0L966.6 446.6L968.4 445.4L968.9 440.5L966.9 438.3L969.3 433.7L973.4 432.4L973.5 428.5L975.1 426.6L976.9 422.3L977.1 419.6L978.0 417.7L980.9 416.0L983.4 415.1L985.4 414.0L988.9 412.7L990.3 410.2L990.4 407.5L993.1 405.2L991.9 402.5L992.7 400.8L994.1 396.0L996.9 394.1L1000.1 393.8L1002.0 392.6L1005.7 389.7L1007.8 387.7L1009.3 383.7L1011.4 382.0L1014.0 379.4L1016.6 378.0L1020.7 378.4L1023.1 377.4L1026.6 374.6L1030.1 371.5L1033.5 369.6L1039.5 371.5L1045.5 370.9L1050.9 370.4L1054.2 367.7L1056.0 365.6L1059.0 363.9L1064.1 362.4L1068.9 362.3L1072.4 362.1L1076.3 363.0L1082.7 360.4L1086.0 358.2L1088.8 358.6L1091.2 358.2L1093.5 358.3L1095.8 356.3L1095.4 354.8L1094.9 352.8L1094.1 350.5L1097.3 348.9L1101.4 347.6L1105.2 347.2L1107.5 346.9L1108.0 344.3L1109.9 341.0L1113.7 337.0L1117.8 336.8L1121.8 337.2L1123.9 338.7L1124.5 340.5L1124.9 342.0L1128.7 344.2L1131.4 343.6L1134.1 344.6L1138.0 343.4L1140.0 340.8L1142.7 338.7L1147.3 336.3L1149.2 331.8L1151.8 329.9L1154.4 330.5L1156.9 327.5L1159.8 323.6L1164.6 322.7L1168.8 320.0L1167.7 317.5L1168.5 314.8L1169.7 313.2L1169.9 310.6L1172.2 311.2L1175.0 310.7L1178.7 309.5L1180.5 308.3L1183.5 307.8L1185.8 307.0L1189.0 307.2L1192.2 304.8L1192.9 300.9L1190.9 297.3L1192.7 295.8L1193.4 293.1L1195.3 291.5L1197.6 291.2L1199.2 290.7L1200.0 288.0L1202.3 286.2L1203.0 284.0L1203.9 282.5L1205.1 281.0L1206.6 280.5L1210.9 279.0L1212.0 276.6L1213.6 275.6L1216.1 272.4L1218.0 270.8L1220.0 269.4L1222.1 268.6L1223.9 264.4L1227.4 262.6L1231.8 263.3L1236.0 260.6L1237.6 258.8L1239.1 255.6L1240.6 254.0L1243.1 252.8L1242.5 251.3L1243.8 249.0L1240.4 248.3L1238.5 249.1L1233.8 245.8L1229.7 245.5L1222.9 246.8L1219.2 245.0L1216.4 246.5L1213.8 247.8L1213.5 246.1L1215.2 245.0L1217.3 243.0L1219.8 241.4L1220.3 239.2L1222.7 238.2L1226.0 235.7L1230.7 236.6L1234.4 235.6L1234.7 234.0L1235.3 231.6L1235.6 229.8L1239.1 229.8L1243.0 229.1L1247.0 225.6L1248.5 222.7L1249.8 220.5L1252.5 218.9L1255.4 219.4L1259.0 219.2L1260.9 221.4L1260.3 224.7L1261.3 226.3L1263.1 225.3L1265.3 224.5L1267.1 223.8L1267.6 220.6L1268.4 219.1L1269.5 216.9L1273.8 215.4L1276.9 213.5L1279.2 213.8L1281.3 212.2L1281.3 209.5L1282.6 207.5L1285.4 207.4L1288.3 204.0L1291.3 203.0L1292.2 201.4L1296.4 200.9L1300.0 201.6L1302.0 200.7L1305.4 200.8L1306.7 202.4L1309.4 202.8L1312.5 202.6L1314.1 201.5L1317.1 199.7L1322.3 199.3L1324.6 197.3L1325.1 195.7L1324.6 193.4L1327.4 192.8L1329.6 192.2L1334.4 189.9L1337.5 189.9L1340.5 187.6L1344.2 187.4L1345.9 186.0L1349.2 186.4L1352.3 184.4L1356.8 184.8L1358.5 185.5L1361.0 184.1L1362.6 185.0L1365.0 184.7L1367.8 186.2L1370.3 186.4L1372.2 186.1L1376.7 184.2L1378.6 182.9L1380.9 185.0L1383.6 186.1L1388.0 185.8L1391.4 185.2L1395.0 184.1L1398.5 185.2L1401.3 185.2L1403.2 185.2L1405.2 184.3L1408.6 185.0L1414.3 186.4L1417.2 188.8L1420.2 188.9L1423.5 188.0L1428.5 189.3L1431.3 191.1L1431.1 192.6L1430.7 194.2L1430.7 195.9L1432.5 198.1L1434.4 198.6L1437.1 197.0L1440.0 197.5L1443.0 200.5L1437.2 205.2L1435.1 210.5L1434.8 214.5L1431.3 214.9L1427.8 214.5L1427.3 211.1L1425.4 205.2L1421.9 204.0L1415.1 202.5L1407.9 202.8L1402.6 201.0L1396.1 200.5L1391.8 201.3L1386.8 204.0L1386.3 208.0L1385.6 211.0L1388.9 214.3L1392.6 216.9L1391.6 219.2L1390.3 222.7L1384.2 224.7L1379.7 225.1L1374.2 224.0L1370.3 223.9L1364.8 226.4L1361.0 227.4L1356.7 225.7L1349.2 225.1L1342.2 221.1L1337.5 218.1L1334.4 218.7L1329.3 218.1L1326.4 220.9L1323.5 222.7L1322.5 229.4L1322.3 233.3L1319.0 232.5L1314.1 232.1L1308.9 230.3L1302.4 230.9L1297.3 231.6L1294.2 232.1L1293.2 236.5L1293.0 240.3L1288.1 239.4L1284.8 240.3L1282.4 241.4L1277.8 242.7L1276.5 250.3L1274.2 256.7L1272.4 260.9L1269.5 263.8L1265.1 269.5L1262.5 273.1L1261.3 275.7L1260.2 280.2L1255.2 282.1L1248.5 282.5L1248.9 288.4L1247.3 294.2L1246.3 299.1L1247.3 306.0L1245.2 312.6L1241.4 316.5L1238.0 320.8L1234.4 322.4L1237.8 327.0L1243.8 330.6L1242.6 335.3L1230.7 336.9L1220.3 336.4L1213.0 342.3L1203.9 348.2L1201.3 349.2L1198.1 353.2L1196.6 360.9L1197.0 368.6L1196.6 382.0L1198.7 399.4L1198.9 412.5L1207.1 417.8L1210.7 421.9L1212.8 428.4L1215.4 431.3L1213.2 436.2L1213.0 440.6L1205.8 441.8L1198.9 445.3L1202.3 454.3L1204.8 460.6L1206.0 465.9L1208.3 471.1L1207.1 467.9L1207.2 464.1L1208.4 469.4L1208.3 473.4L1206.6 481.5L1207.2 489.8L1204.7 493.6L1198.9 496.9L1193.4 498.0L1184.9 500.4L1185.4 504.2L1184.9 508.6L1180.4 510.0L1176.7 513.3L1178.5 520.2L1180.2 529.7L1178.5 535.4L1177.9 539.1L1176.4 544.2L1174.3 550.8L1171.6 552.4L1168.5 553.1L1167.0 548.9L1166.1 543.8L1160.4 542.1L1156.8 540.2L1150.2 539.5L1145.0 541.4L1141.8 535.6L1140.3 532.0L1139.1 514.6L1140.8 499.2L1138.6 497.6L1136.1 495.7L1134.0 498.2L1133.3 500.4L1135.0 509.3L1131.7 520.3L1131.4 526.3L1128.6 532.0L1125.5 534.9L1121.6 541.4L1115.9 542.5L1107.5 546.1L1104.7 543.8L1100.5 542.6L1096.9 546.9L1093.5 548.5L1086.8 550.8L1079.4 557.8L1072.0 563.1L1065.3 567.2L1056.2 573.0L1051.3 578.9L1044.3 582.5L1037.2 586.0L1033.0 589.0L1025.5 593.0L1020.9 592.6L1013.8 593.0L1004.3 597.7L995.0 598.9L984.6 598.8L976.3 595.3L972.9 593.2L966.9 590.6L963.4 587.0L958.7 584.8L962.1 581.9L964.5 578.9L961.3 576.3L955.2 574.2L951.2 568.6L943.4 560.2L939.7 555.1L936.4 553.1L935.6 547.4L935.2 543.8L935.2 540.2L939.7 536.1L942.3 532.0L942.1 529.0L939.9 525.0Z" fill="#4a6339"/><g clip-path="url(#topclip)"><rect x="930" y="175" width="530" height="440" filter="url(#terrain)"/><g filter="url(#fdark)" fill="#24401f"><ellipse cx="1130" cy="520" rx="60" ry="40" transform="rotate(-30 1130 520)"/><ellipse cx="1040" cy="575" rx="60" ry="22" transform="rotate(-15 1040 575)"/><ellipse cx="1175" cy="440" rx="30" ry="40" transform="rotate(0 1175 440)"/></g><g filter="url(#ftan)" fill="#8c8862"><ellipse cx="1105" cy="420" rx="34" ry="26" transform="rotate(-30 1105 420)"/><ellipse cx="1030" cy="505" rx="32" ry="18" transform="rotate(-20 1030 505)"/><ellipse cx="1180" cy="370" rx="30" ry="14" transform="rotate(-30 1180 370)"/><ellipse cx="1390" cy="203" rx="40" ry="8" transform="rotate(-5 1390 203)"/><ellipse cx="1075" cy="470" rx="26" ry="16" transform="rotate(-30 1075 470)"/><ellipse cx="1150" cy="400" rx="22" ry="14" transform="rotate(-30 1150 400)"/></g><g filter="url(#fsnow)" fill="#e9eceb" opacity="0.9"><ellipse cx="1045" cy="412" rx="52" ry="16" transform="rotate(-28 1045 412)"/><ellipse cx="1000" cy="470" rx="38" ry="13" transform="rotate(-52 1000 470)"/><ellipse cx="972" cy="520" rx="22" ry="10" transform="rotate(-70 972 520)"/><ellipse cx="1105" cy="372" rx="40" ry="10" transform="rotate(-25 1105 372)"/><ellipse cx="1160" cy="344" rx="34" ry="9" transform="rotate(-30 1160 344)"/><ellipse cx="1200" cy="310" rx="30" ry="10" transform="rotate(-40 1200 310)"/><ellipse cx="1232" cy="270" rx="26" ry="10" transform="rotate(-50 1232 270)"/><ellipse cx="1262" cy="238" rx="30" ry="9" transform="rotate(-35 1262 238)"/><ellipse cx="1305" cy="215" rx="34" ry="8" transform="rotate(-20 1305 215)"/><ellipse cx="960" cy="560" rx="12" ry="22" transform="rotate(0 960 560)"/><ellipse cx="1010" cy="440" rx="30" ry="10" transform="rotate(-40 1010 440)"/><ellipse cx="1350" cy="200" rx="30" ry="6" transform="rotate(-8 1350 200)"/></g></g>
<path d="M1318.8 331.2L1450 328.1" stroke="#e8443c" stroke-width="1.2"/><path d="M1396.9 326.3L1412.5 329.2L1396.9 332.9Z" fill="#e8443c"/><path d="M1446.5 326.2L1450 328.1L1446.8 330" stroke="#e8443c" stroke-width="0.9" fill="none"/><path d="M1318.8 331.2L1340.6 205.6" stroke="#3ee06c" stroke-width="1.2"/><path d="M1332.8 245.2L1326.2 259.4L1334.6 260.3Z" fill="#3ee06c"/><path d="M1337.5 206.5L1340.6 205.6L1342 208.5" stroke="#3ee06c" stroke-width="0.9" fill="none"/><path d="M1318.8 331.2L1293.75 265" stroke="#3f86e8" stroke-width="1.2"/><path d="M1290.5 266.5L1297 264.8" stroke="#3f86e8" stroke-width="0.9"/><path d="M1300.2 283.5L1304.6 286.5L1305 290.5L1301.5 292L1298.6 289Z" fill="#3f86e8"/><path d="M1311.5 271.5L1315 252.3L1319.1 262.8M1313 263.5L1316.6 259" stroke="#e8443c" stroke-width="1" fill="none"/><path d="M1339 299.5L1358 299L1366.5 311L1356 301.5Z" stroke="#3ee06c" stroke-width="1" fill="#3ee06c" fill-opacity="0.45"/><path d="M1363 280.2L1387.5 279.6L1382.5 300L1384.5 286.5Z" stroke="#3f86e8" stroke-width="1" fill="#3f86e8" fill-opacity="0.45"/>
<rect x="827.5" y="17" width="672.5" height="186.7" fill="#000" fill-opacity="0.26"/><rect x="827.5" y="582.3" width="672.5" height="185.7" fill="#000" fill-opacity="0.26"/>
<path d="M827.5 17.2H1500" stroke="#707070" stroke-width="1.3"/><path d="M827.2 0V768" stroke="#686868" stroke-width="1.4"/>
<path d="M853 742.8H868" stroke="#d8443c" stroke-width="1.2" fill="none"/><path d="M853.1 728.5V743.2" stroke="#3d9fd6" stroke-width="1.3"/><path d="M850.6 731.5L852.3 728.8L852.3 732Z" fill="#3f6fd8"/>
<path d="M622.8 11.8V9.8M624.8 11.8V7.8M626.8 11.8V5.9M629 11.8V2.8" stroke="#8f8f8f" stroke-width="1.3"/><path d="M620.2 13.7H632" stroke="#8f8f8f" stroke-width="1"/><rect x="637.6" y="7.4" width="9.2" height="6.3" rx="1" fill="none" stroke="#8f8f8f" stroke-width="1.1"/><path d="M639.6 7.2V5.6A2.9 2.9 0 0 1 645.2 4.6" stroke="#8f8f8f" stroke-width="1.1" fill="none"/><rect x="641.4" y="9.7" width="1.6" height="1.6" fill="#8f8f8f"/><path d="M658.2 3.7L660.6 6.5L655.8 6.5Z" fill="#8f8f8f"/><path d="M663.6 9.1L660.8 11.5L660.8 6.7Z" fill="#8f8f8f"/><path d="M658.2 14.5L655.8 11.7L660.6 11.7Z" fill="#8f8f8f"/><path d="M652.8 9.1L655.6 6.7L655.6 11.5Z" fill="#8f8f8f"/><path d="M655.2 9.1H661.2M658.2 6.1V12.1" stroke="#8f8f8f" stroke-width="1.1"/><path d="M673.8 4.6V13.899999999999999" stroke="#8f8f8f" stroke-width="1.2"/><path d="M671.1999999999999 6.5L673.8 3.6999999999999993L676.4 6.5" stroke="#8f8f8f" stroke-width="1.2" fill="none"/><path d="M669.1999999999999 10.1H678.4L673.8 14.7Z" stroke="#8f8f8f" stroke-width="1.1" fill="none" stroke-linejoin="round"/><path d="M1449.6 3.7L1452.0 6.5L1447.2 6.5Z" fill="#8f8f8f"/><path d="M1455.0 9.1L1452.2 11.5L1452.2 6.7Z" fill="#8f8f8f"/><path d="M1449.6 14.5L1447.2 11.7L1452.0 11.7Z" fill="#8f8f8f"/><path d="M1444.2 9.1L1447.0 6.7L1447.0 11.5Z" fill="#8f8f8f"/><path d="M1446.6 9.1H1452.6M1449.6 6.1V12.1" stroke="#8f8f8f" stroke-width="1.1"/><path d="M1465.2 4.6V13.899999999999999" stroke="#8f8f8f" stroke-width="1.2"/><path d="M1462.6000000000001 6.5L1465.2 3.6999999999999993L1467.8 6.5" stroke="#8f8f8f" stroke-width="1.2" fill="none"/><path d="M1460.6000000000001 10.1H1469.8L1465.2 14.7Z" stroke="#8f8f8f" stroke-width="1.1" fill="none" stroke-linejoin="round"/><path d="M1478.7 4.5A4.8 4.8 0 0 0 1478.3000000000002 13.3" stroke="#8f8f8f" stroke-width="1.3" fill="none"/><path d="M1483.1000000000001 13.7A4.8 4.8 0 0 0 1483.5 4.8999999999999995" stroke="#8f8f8f" stroke-width="1.3" fill="none"/><path d="M1476.3000000000002 11.3L1479.3000000000002 14.7L1480.1000000000001 10.9Z" fill="#8f8f8f"/><path d="M1485.5 6.8999999999999995L1482.5 3.5L1481.7 7.3Z" fill="#8f8f8f"/><path d="M1491.8 15V4.2H1500M1491.8 9.6H1497.5V15M1491.8 15H1500" stroke="#8f8f8f" stroke-width="1.1" fill="none"/><circle cx="1191.3" cy="24.8" r="1.5" fill="#cfe0f0"/><circle cx="1195.6" cy="23.8" r="1.7" fill="#b9d2ea"/><circle cx="1192.8" cy="28" r="1.2" fill="#8fb4d8"/><rect x="1194.5" y="26" width="4" height="3" fill="#20242a"/>
</svg>
<div id="txt" style="position:absolute;left:0;top:0;width:1500px;height:768px;will-change:transform"><span class="t" id="t0" style="left:27.3px;top:1.8px;color:#dcdcdc;font-size:9px;font-weight:normal;letter-spacing:-0.379px;">File</span><span class="t" id="t1" style="left:51.3px;top:1.8px;color:#dcdcdc;font-size:9px;font-weight:normal;letter-spacing:-0.204px;">Edit</span><span class="t" id="t2" style="left:77.3px;top:1.8px;color:#dcdcdc;font-size:9px;font-weight:normal;letter-spacing:-0.240px;">View</span><span class="t" id="t3" style="left:107.0px;top:1.8px;color:#dcdcdc;font-size:9px;font-weight:normal;letter-spacing:-0.217px;">Filter</span><span class="t" id="t4" style="left:137.3px;top:1.8px;color:#dcdcdc;font-size:9px;font-weight:normal;letter-spacing:-0.374px;">UV Mesh</span><span class="t" id="t5" style="left:182.3px;top:1.8px;color:#dcdcdc;font-size:9px;font-weight:normal;letter-spacing:-0.263px;">Image</span><span class="t" id="t6" style="left:217.3px;top:1.8px;color:#dcdcdc;font-size:9px;font-weight:normal;letter-spacing:-0.423px;">Layer</span><span class="t" id="t7" style="left:249.0px;top:1.8px;color:#dcdcdc;font-size:9px;font-weight:normal;letter-spacing:-0.297px;">Texture Selection</span><span class="t" id="t8" style="left:324.3px;top:1.8px;color:#dcdcdc;font-size:9px;font-weight:normal;letter-spacing:-0.363px;">Paint</span><span class="t" id="t9" style="left:354.0px;top:1.8px;color:#dcdcdc;font-size:9px;font-weight:normal;letter-spacing:-0.377px;">Textures</span><span class="t" id="t10" style="left:850.0px;top:1.8px;color:#dcdcdc;font-size:9px;font-weight:normal;letter-spacing:-0.265px;">View</span><span class="t" id="t11" style="left:879.7px;top:1.8px;color:#dcdcdc;font-size:9px;font-weight:normal;letter-spacing:-0.559px;">Cameras</span><span class="t" id="t12" style="left:923.3px;top:1.8px;color:#dcdcdc;font-size:9px;font-weight:normal;letter-spacing:-0.259px;">Display</span><span class="t" id="t13" style="left:962.3px;top:1.8px;color:#dcdcdc;font-size:9px;font-weight:normal;letter-spacing:-0.147px;">Options</span><span class="t" id="t14" style="left:1003.3px;top:1.8px;color:#dcdcdc;font-size:9px;font-weight:normal;letter-spacing:-0.167px;">Filter</span><span class="t" id="t15" style="left:1034.0px;top:1.8px;color:#dcdcdc;font-size:9px;font-weight:normal;letter-spacing:-0.546px;">Panel</span><span class="t" id="t16" style="left:8.5px;top:19.0px;color:#f0f0f0;font-size:9px;font-weight:bold;letter-spacing:-0.345px;">Texture UV Editor</span><span class="t" id="t17" style="left:22.0px;top:80.2px;color:#e0e0e0;font-size:9px;font-weight:normal;letter-spacing:-0.839px;">0,1</span><span class="t" id="t18" style="left:635.0px;top:80.2px;color:#e0e0e0;font-size:9px;font-weight:normal;letter-spacing:-0.505px;">1,1</span><span class="t" id="t19" style="left:22.0px;top:693.0px;color:#e0e0e0;font-size:9px;font-weight:normal;letter-spacing:-0.172px;">0,0</span><span class="t" id="t20" style="left:637.0px;top:693.0px;color:#e0e0e0;font-size:9px;font-weight:normal;letter-spacing:-0.505px;">1,0</span><span class="t" id="t21" style="left:25.8px;top:704.0px;color:#3fae7a;font-size:9px;font-weight:normal;letter-spacing:-0.516px;">V</span><span class="t" id="t22" style="left:46.0px;top:723.5px;color:#c0504d;font-size:9px;font-weight:normal;letter-spacing:-0.500px;">U</span><span class="t" id="t23" style="left:10.5px;top:756.5px;color:#d6d6d6;font-size:9px;font-weight:normal;letter-spacing:-0.419px;">Zoom: 236.0%</span><span class="t" id="t24" style="left:831.0px;top:19.3px;color:#f2f2f2;font-size:9px;font-weight:bold;letter-spacing:-0.595px;">Perspective</span><span class="t" id="t25" style="left:1127.5px;top:19.3px;color:#f2f2f2;font-size:9px;font-weight:bold;letter-spacing:-0.359px;">Default Camera</span><span class="t" id="t26" style="left:1405.0px;top:754.0px;color:#f2f2f2;font-size:9px;font-weight:bold;letter-spacing:-0.434px;">Grid Spacing : 5000 mm</span><span class="t" id="t27" style="left:870.5px;top:736.5px;color:#e0483e;font-size:8px;font-weight:normal;letter-spacing:-0.344px;">X</span><span class="t" id="t28" style="left:851.2px;top:719.6px;color:#3fc4aa;font-size:7px;font-weight:normal;letter-spacing:-0.672px;">Y</span><span class="t" id="t29" style="left:703.8px;top:7.1px;color:#7f7f7f;font-size:9px;font-weight:normal;letter-spacing:-0.366px;">Add UV Pins</span><span class="t" id="t30" style="left:703.8px;top:24.2px;color:#7f7f7f;font-size:9px;font-weight:normal;letter-spacing:-0.252px;">Remove UV Pins</span><span class="t" id="t31" style="left:703.8px;top:41.3px;color:#7f7f7f;font-size:9px;font-weight:normal;letter-spacing:-0.425px;">Clear UV Pins</span><span class="t" id="t32" style="left:703.8px;top:60.1px;color:#f4f4f4;font-size:9px;font-weight:normal;letter-spacing:-0.290px;">Set UVW from Projection...</span><span class="t" id="t33" style="left:703.8px;top:77.2px;color:#7f7f7f;font-size:9px;font-weight:normal;letter-spacing:-0.419px;">UV Unwrap...</span><span class="t" id="t34" style="left:703.8px;top:94.3px;color:#7f7f7f;font-size:9px;font-weight:normal;letter-spacing:-0.444px;">UV Weld and Relax...</span><span class="t" id="t35" style="left:703.8px;top:111.5px;color:#7f7f7f;font-size:9px;font-weight:normal;letter-spacing:-0.480px;">UV Weld</span><span class="t" id="t36" style="left:703.8px;top:130.3px;color:#7f7f7f;font-size:9px;font-weight:normal;letter-spacing:-0.559px;">UV Peeler</span><span class="t" id="t37" style="left:703.8px;top:147.4px;color:#7f7f7f;font-size:9px;font-weight:normal;letter-spacing:-0.182px;">Start Interactive Mapping</span><span class="t" id="t38" style="left:703.8px;top:164.5px;color:#7f7f7f;font-size:9px;font-weight:normal;letter-spacing:-0.169px;">Stop Interactive Mapping</span><span class="t" id="t39" style="left:703.8px;top:183.3px;color:#7f7f7f;font-size:9px;font-weight:normal;letter-spacing:-0.419px;">Max UV</span><span class="t" id="t40" style="left:703.8px;top:200.4px;color:#f4f4f4;font-size:9px;font-weight:normal;letter-spacing:-0.377px;">Fit UV to Canvas</span><span class="t" id="t41" style="left:703.8px;top:217.5px;color:#7f7f7f;font-size:9px;font-weight:normal;letter-spacing:-0.377px;">Fit Canvas to UV</span><span class="t" id="t42" style="left:703.8px;top:236.3px;color:#7f7f7f;font-size:9px;font-weight:normal;letter-spacing:-0.125px;">Mirror U</span><span class="t" id="t43" style="left:703.8px;top:253.5px;color:#7f7f7f;font-size:9px;font-weight:normal;letter-spacing:-0.062px;">Mirror V</span><span class="t" id="t44" style="left:703.8px;top:270.6px;color:#7f7f7f;font-size:9px;font-weight:normal;letter-spacing:-0.403px;">Line Up UV</span><span class="t" id="t45" style="left:703.8px;top:287.7px;color:#7f7f7f;font-size:9px;font-weight:normal;letter-spacing:-0.347px;">UV Straighten...</span><span class="t" id="t46" style="left:703.8px;top:304.8px;color:#7f7f7f;font-size:9px;font-weight:normal;letter-spacing:-0.427px;">UV Rectangularize...</span><span class="t" id="t47" style="left:703.8px;top:321.9px;color:#7f7f7f;font-size:9px;font-weight:normal;letter-spacing:-0.315px;">Align UV Islands</span><span class="t" id="t48" style="left:703.8px;top:339.1px;color:#7f7f7f;font-size:9px;font-weight:normal;letter-spacing:-0.320px;">Unstitch UV</span><span class="t" id="t49" style="left:703.8px;top:356.2px;color:#7f7f7f;font-size:9px;font-weight:normal;letter-spacing:-0.253px;">Boundary to Circle</span><span class="t" id="t50" style="left:703.8px;top:373.3px;color:#7f7f7f;font-size:9px;font-weight:normal;letter-spacing:-0.254px;">Boundary to Quad</span><span class="t" id="t51" style="left:703.8px;top:392.1px;color:#7f7f7f;font-size:9px;font-weight:normal;letter-spacing:-0.502px;">Copy UV</span><span class="t" id="t52" style="left:703.8px;top:409.2px;color:#7f7f7f;font-size:9px;font-weight:normal;letter-spacing:-0.629px;">Paste UV</span><span class="t" id="t53" style="left:703.8px;top:426.3px;color:#7f7f7f;font-size:9px;font-weight:normal;letter-spacing:-0.627px;">Reset UV</span><span class="t" id="t54" style="left:703.8px;top:443.5px;color:#7f7f7f;font-size:9px;font-weight:normal;letter-spacing:-0.626px;">Cycle UV CCW</span><span class="t" id="t55" style="left:703.8px;top:460.6px;color:#7f7f7f;font-size:9px;font-weight:normal;letter-spacing:-0.547px;">Cycle UV CW</span><span class="t" id="t56" style="left:703.8px;top:477.7px;color:#7f7f7f;font-size:9px;font-weight:normal;letter-spacing:-0.427px;">Flip Sequence</span><span class="t" id="t57" style="left:703.8px;top:494.8px;color:#7f7f7f;font-size:9px;font-weight:normal;letter-spacing:-0.439px;">Store UV</span><span class="t" id="t58" style="left:703.8px;top:511.9px;color:#7f7f7f;font-size:9px;font-weight:normal;letter-spacing:-0.503px;">Restore UV</span><span class="t" id="t59" style="left:703.8px;top:529.1px;color:#7f7f7f;font-size:9px;font-weight:normal;letter-spacing:-0.689px;">Remap...</span></div>
</div>
</body></html>
